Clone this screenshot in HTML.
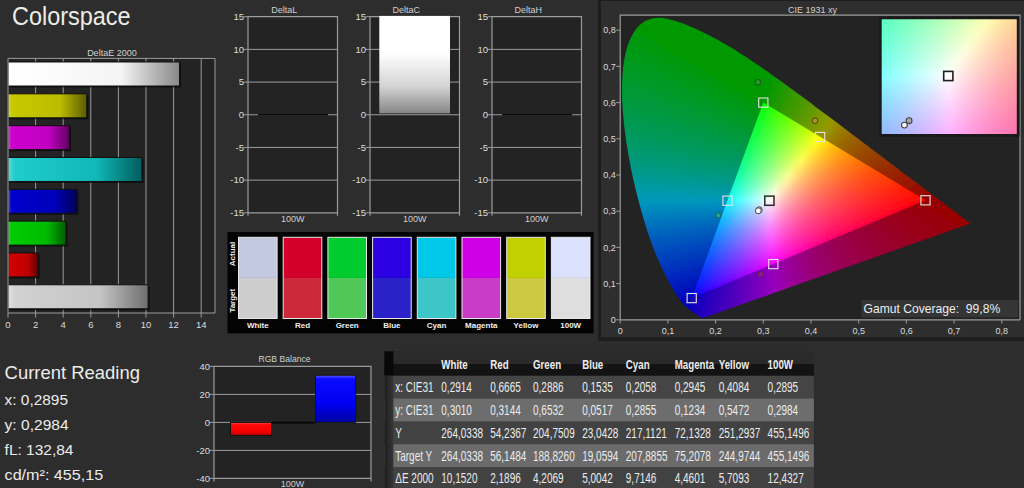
<!DOCTYPE html>
<html><head><meta charset="utf-8"><style>
html,body{margin:0;padding:0;background:#2d2d2d;width:1024px;height:488px;overflow:hidden}
svg{display:block;font-family:'Liberation Sans',sans-serif}
</style></head><body>
<svg width="1024" height="488" viewBox="0 0 1024 488">
<defs><linearGradient id="deb0" x1="0" y1="0" x2="1" y2="0"><stop offset="0" stop-color="#ffffff"/><stop offset="0.05" stop-color="#ffffff"/><stop offset="0.66" stop-color="#f4f4f4"/><stop offset="1" stop-color="#888888"/></linearGradient><linearGradient id="deb1" x1="0" y1="0" x2="1" y2="0"><stop offset="0" stop-color="#d4d450"/><stop offset="0.05" stop-color="#c8c800"/><stop offset="0.66" stop-color="#bcbc00"/><stop offset="1" stop-color="#5c5c00"/></linearGradient><linearGradient id="deb2" x1="0" y1="0" x2="1" y2="0"><stop offset="0" stop-color="#d860d8"/><stop offset="0.05" stop-color="#cc00cc"/><stop offset="0.66" stop-color="#c000c0"/><stop offset="1" stop-color="#5e005e"/></linearGradient><linearGradient id="deb3" x1="0" y1="0" x2="1" y2="0"><stop offset="0" stop-color="#60d8d8"/><stop offset="0.05" stop-color="#20cccc"/><stop offset="0.66" stop-color="#10b8b8"/><stop offset="1" stop-color="#005c5c"/></linearGradient><linearGradient id="deb4" x1="0" y1="0" x2="1" y2="0"><stop offset="0" stop-color="#5050d8"/><stop offset="0.05" stop-color="#0000cc"/><stop offset="0.66" stop-color="#0000bc"/><stop offset="1" stop-color="#00005a"/></linearGradient><linearGradient id="deb5" x1="0" y1="0" x2="1" y2="0"><stop offset="0" stop-color="#50d850"/><stop offset="0.05" stop-color="#00cc00"/><stop offset="0.66" stop-color="#00bc00"/><stop offset="1" stop-color="#005c00"/></linearGradient><linearGradient id="deb6" x1="0" y1="0" x2="1" y2="0"><stop offset="0" stop-color="#e05050"/><stop offset="0.05" stop-color="#d00000"/><stop offset="0.66" stop-color="#c00000"/><stop offset="1" stop-color="#5c0000"/></linearGradient><linearGradient id="deb7" x1="0" y1="0" x2="1" y2="0"><stop offset="0" stop-color="#e0e0e0"/><stop offset="0.05" stop-color="#d2d2d2"/><stop offset="0.66" stop-color="#c4c4c4"/><stop offset="1" stop-color="#6e6e6e"/></linearGradient><linearGradient id="dcg" x1="0" y1="0" x2="0" y2="1"><stop offset="0" stop-color="#ffffff"/><stop offset="0.38" stop-color="#ffffff"/><stop offset="0.72" stop-color="#d4d4d4"/><stop offset="1" stop-color="#868686"/></linearGradient><linearGradient id="rbr" x1="0" y1="0" x2="0" y2="1"><stop offset="0" stop-color="#ff4a4a"/><stop offset="0.18" stop-color="#ff0808"/><stop offset="0.7" stop-color="#f20000"/><stop offset="1" stop-color="#c00000"/></linearGradient><linearGradient id="rbb" x1="0" y1="0" x2="0" y2="1"><stop offset="0" stop-color="#5a5aff"/><stop offset="0.08" stop-color="#0a0aff"/><stop offset="0.6" stop-color="#0000f2"/><stop offset="1" stop-color="#0000a0"/></linearGradient><linearGradient id="tstrip" x1="0" y1="0" x2="1" y2="0"><stop offset="0" stop-color="#1e1e1e"/><stop offset="0.5" stop-color="#2a2a2a"/><stop offset="1" stop-color="#363636"/></linearGradient></defs>
<rect x="0.00" y="0.00" width="1024.00" height="488.00" fill="#2d2d2d"/><text x="12.0" y="25.0" font-size="25" fill="#ecece6" text-anchor="start" font-weight="normal" textLength="118.6" lengthAdjust="spacingAndGlyphs">Colorspace</text><rect x="8.00" y="58.40" width="207.00" height="254.60" fill="#232323"/><text x="111.9" y="55.9" font-size="9" fill="#d0d0d0" text-anchor="middle" font-weight="normal">DeltaE 2000</text><line x1="35.60" y1="58.40" x2="35.60" y2="313.00" stroke="#9c9c9c" stroke-width="1"/><line x1="63.20" y1="58.40" x2="63.20" y2="313.00" stroke="#9c9c9c" stroke-width="1"/><line x1="90.80" y1="58.40" x2="90.80" y2="313.00" stroke="#9c9c9c" stroke-width="1"/><line x1="118.40" y1="58.40" x2="118.40" y2="313.00" stroke="#9c9c9c" stroke-width="1"/><line x1="146.00" y1="58.40" x2="146.00" y2="313.00" stroke="#9c9c9c" stroke-width="1"/><line x1="173.60" y1="58.40" x2="173.60" y2="313.00" stroke="#9c9c9c" stroke-width="1"/><line x1="201.20" y1="58.40" x2="201.20" y2="313.00" stroke="#9c9c9c" stroke-width="1"/><rect x="9.50" y="63.50" width="171.57" height="24.00" fill="#000" opacity="0.55"/><rect x="8.00" y="62.00" width="171.57" height="24.00" fill="url(#deb0)" stroke="#111" stroke-width="1"/><rect x="9.50" y="95.32" width="78.79" height="24.00" fill="#000" opacity="0.55"/><rect x="8.00" y="93.82" width="78.79" height="24.00" fill="url(#deb1)" stroke="#111" stroke-width="1"/><rect x="9.50" y="127.15" width="61.55" height="24.00" fill="#000" opacity="0.55"/><rect x="8.00" y="125.65" width="61.55" height="24.00" fill="url(#deb2)" stroke="#111" stroke-width="1"/><rect x="9.50" y="158.97" width="134.06" height="24.00" fill="#000" opacity="0.55"/><rect x="8.00" y="157.47" width="134.06" height="24.00" fill="url(#deb3)" stroke="#111" stroke-width="1"/><rect x="9.50" y="190.80" width="69.06" height="24.00" fill="#000" opacity="0.55"/><rect x="8.00" y="189.30" width="69.06" height="24.00" fill="url(#deb4)" stroke="#111" stroke-width="1"/><rect x="9.50" y="222.62" width="58.06" height="24.00" fill="#000" opacity="0.55"/><rect x="8.00" y="221.12" width="58.06" height="24.00" fill="url(#deb5)" stroke="#111" stroke-width="1"/><rect x="9.50" y="254.45" width="30.22" height="24.00" fill="#000" opacity="0.55"/><rect x="8.00" y="252.95" width="30.22" height="24.00" fill="url(#deb6)" stroke="#111" stroke-width="1"/><rect x="9.50" y="286.28" width="140.10" height="24.00" fill="#000" opacity="0.55"/><rect x="8.00" y="284.78" width="140.10" height="24.00" fill="url(#deb7)" stroke="#111" stroke-width="1"/><path d="M8.0,313.0 V58.4 H215.0 V313.0" fill="none" stroke="#9c9c9c" stroke-width="1"/><line x1="8.00" y1="313.00" x2="215.00" y2="313.00" stroke="#9c9c9c" stroke-width="1.2"/><line x1="8.00" y1="313.00" x2="8.00" y2="317.50" stroke="#9c9c9c" stroke-width="1"/><text x="8.0" y="327.7" font-size="9.5" fill="#dcdcdc" text-anchor="middle" font-weight="normal">0</text><line x1="35.60" y1="313.00" x2="35.60" y2="317.50" stroke="#9c9c9c" stroke-width="1"/><text x="35.6" y="327.7" font-size="9.5" fill="#dcdcdc" text-anchor="middle" font-weight="normal">2</text><line x1="63.20" y1="313.00" x2="63.20" y2="317.50" stroke="#9c9c9c" stroke-width="1"/><text x="63.2" y="327.7" font-size="9.5" fill="#dcdcdc" text-anchor="middle" font-weight="normal">4</text><line x1="90.80" y1="313.00" x2="90.80" y2="317.50" stroke="#9c9c9c" stroke-width="1"/><text x="90.8" y="327.7" font-size="9.5" fill="#dcdcdc" text-anchor="middle" font-weight="normal">6</text><line x1="118.40" y1="313.00" x2="118.40" y2="317.50" stroke="#9c9c9c" stroke-width="1"/><text x="118.4" y="327.7" font-size="9.5" fill="#dcdcdc" text-anchor="middle" font-weight="normal">8</text><line x1="146.00" y1="313.00" x2="146.00" y2="317.50" stroke="#9c9c9c" stroke-width="1"/><text x="146.0" y="327.7" font-size="9.5" fill="#dcdcdc" text-anchor="middle" font-weight="normal">10</text><line x1="173.60" y1="313.00" x2="173.60" y2="317.50" stroke="#9c9c9c" stroke-width="1"/><text x="173.6" y="327.7" font-size="9.5" fill="#dcdcdc" text-anchor="middle" font-weight="normal">12</text><line x1="201.20" y1="313.00" x2="201.20" y2="317.50" stroke="#9c9c9c" stroke-width="1"/><text x="201.2" y="327.7" font-size="9.5" fill="#dcdcdc" text-anchor="middle" font-weight="normal">14</text><rect x="248.00" y="16.70" width="89.50" height="196.10" fill="#232323"/><line x1="248.00" y1="49.38" x2="337.50" y2="49.38" stroke="#9c9c9c" stroke-width="1"/><line x1="248.00" y1="82.07" x2="337.50" y2="82.07" stroke="#9c9c9c" stroke-width="1"/><line x1="248.00" y1="114.75" x2="337.50" y2="114.75" stroke="#9c9c9c" stroke-width="1"/><line x1="248.00" y1="147.43" x2="337.50" y2="147.43" stroke="#9c9c9c" stroke-width="1"/><line x1="248.00" y1="180.12" x2="337.50" y2="180.12" stroke="#9c9c9c" stroke-width="1"/><line x1="258.00" y1="114.75" x2="328.00" y2="114.75" stroke="#0a0a0a" stroke-width="1.6"/><path d="M248.0,215.8 V16.7 H337.5 V215.8" fill="none" stroke="#9c9c9c" stroke-width="1.2"/><line x1="248.00" y1="212.80" x2="337.50" y2="212.80" stroke="#9c9c9c" stroke-width="1.2"/><line x1="243.50" y1="16.70" x2="248.00" y2="16.70" stroke="#9c9c9c" stroke-width="1"/><text x="244.0" y="20.0" font-size="9.5" fill="#dcdcdc" text-anchor="end" font-weight="normal">15</text><line x1="243.50" y1="49.38" x2="248.00" y2="49.38" stroke="#9c9c9c" stroke-width="1"/><text x="244.0" y="52.7" font-size="9.5" fill="#dcdcdc" text-anchor="end" font-weight="normal">10</text><line x1="243.50" y1="82.07" x2="248.00" y2="82.07" stroke="#9c9c9c" stroke-width="1"/><text x="244.0" y="85.4" font-size="9.5" fill="#dcdcdc" text-anchor="end" font-weight="normal">5</text><line x1="243.50" y1="114.75" x2="248.00" y2="114.75" stroke="#9c9c9c" stroke-width="1"/><text x="244.0" y="118.1" font-size="9.5" fill="#dcdcdc" text-anchor="end" font-weight="normal">0</text><line x1="243.50" y1="147.43" x2="248.00" y2="147.43" stroke="#9c9c9c" stroke-width="1"/><text x="244.0" y="150.7" font-size="9.5" fill="#dcdcdc" text-anchor="end" font-weight="normal">-5</text><line x1="243.50" y1="180.12" x2="248.00" y2="180.12" stroke="#9c9c9c" stroke-width="1"/><text x="244.0" y="183.4" font-size="9.5" fill="#dcdcdc" text-anchor="end" font-weight="normal">-10</text><line x1="243.50" y1="212.80" x2="248.00" y2="212.80" stroke="#9c9c9c" stroke-width="1"/><text x="244.0" y="216.1" font-size="9.5" fill="#dcdcdc" text-anchor="end" font-weight="normal">-15</text><text x="284.3" y="13.1" font-size="9" fill="#d0d0d0" text-anchor="middle" font-weight="normal">DeltaL</text><text x="292.8" y="222.0" font-size="9" fill="#d0d0d0" text-anchor="middle" font-weight="normal">100W</text><rect x="370.00" y="16.70" width="89.50" height="196.10" fill="#232323"/><line x1="370.00" y1="49.38" x2="459.50" y2="49.38" stroke="#9c9c9c" stroke-width="1"/><line x1="370.00" y1="82.07" x2="459.50" y2="82.07" stroke="#9c9c9c" stroke-width="1"/><line x1="370.00" y1="114.75" x2="459.50" y2="114.75" stroke="#9c9c9c" stroke-width="1"/><line x1="370.00" y1="147.43" x2="459.50" y2="147.43" stroke="#9c9c9c" stroke-width="1"/><line x1="370.00" y1="180.12" x2="459.50" y2="180.12" stroke="#9c9c9c" stroke-width="1"/><path d="M370.0,215.8 V16.7 H459.5 V215.8" fill="none" stroke="#9c9c9c" stroke-width="1.2"/><rect x="379.30" y="15.90" width="70.70" height="97.45" fill="url(#dcg)"/><line x1="370.00" y1="212.80" x2="459.50" y2="212.80" stroke="#9c9c9c" stroke-width="1.2"/><line x1="365.50" y1="16.70" x2="370.00" y2="16.70" stroke="#9c9c9c" stroke-width="1"/><text x="366.0" y="20.0" font-size="9.5" fill="#dcdcdc" text-anchor="end" font-weight="normal">15</text><line x1="365.50" y1="49.38" x2="370.00" y2="49.38" stroke="#9c9c9c" stroke-width="1"/><text x="366.0" y="52.7" font-size="9.5" fill="#dcdcdc" text-anchor="end" font-weight="normal">10</text><line x1="365.50" y1="82.07" x2="370.00" y2="82.07" stroke="#9c9c9c" stroke-width="1"/><text x="366.0" y="85.4" font-size="9.5" fill="#dcdcdc" text-anchor="end" font-weight="normal">5</text><line x1="365.50" y1="114.75" x2="370.00" y2="114.75" stroke="#9c9c9c" stroke-width="1"/><text x="366.0" y="118.1" font-size="9.5" fill="#dcdcdc" text-anchor="end" font-weight="normal">0</text><line x1="365.50" y1="147.43" x2="370.00" y2="147.43" stroke="#9c9c9c" stroke-width="1"/><text x="366.0" y="150.7" font-size="9.5" fill="#dcdcdc" text-anchor="end" font-weight="normal">-5</text><line x1="365.50" y1="180.12" x2="370.00" y2="180.12" stroke="#9c9c9c" stroke-width="1"/><text x="366.0" y="183.4" font-size="9.5" fill="#dcdcdc" text-anchor="end" font-weight="normal">-10</text><line x1="365.50" y1="212.80" x2="370.00" y2="212.80" stroke="#9c9c9c" stroke-width="1"/><text x="366.0" y="216.1" font-size="9.5" fill="#dcdcdc" text-anchor="end" font-weight="normal">-15</text><text x="406.3" y="13.1" font-size="9" fill="#d0d0d0" text-anchor="middle" font-weight="normal">DeltaC</text><text x="414.8" y="222.0" font-size="9" fill="#d0d0d0" text-anchor="middle" font-weight="normal">100W</text><rect x="492.00" y="16.70" width="89.50" height="196.10" fill="#232323"/><line x1="492.00" y1="49.38" x2="581.50" y2="49.38" stroke="#9c9c9c" stroke-width="1"/><line x1="492.00" y1="82.07" x2="581.50" y2="82.07" stroke="#9c9c9c" stroke-width="1"/><line x1="492.00" y1="114.75" x2="581.50" y2="114.75" stroke="#9c9c9c" stroke-width="1"/><line x1="492.00" y1="147.43" x2="581.50" y2="147.43" stroke="#9c9c9c" stroke-width="1"/><line x1="492.00" y1="180.12" x2="581.50" y2="180.12" stroke="#9c9c9c" stroke-width="1"/><line x1="502.00" y1="114.75" x2="572.00" y2="114.75" stroke="#0a0a0a" stroke-width="1.6"/><path d="M492.0,215.8 V16.7 H581.5 V215.8" fill="none" stroke="#9c9c9c" stroke-width="1.2"/><line x1="492.00" y1="212.80" x2="581.50" y2="212.80" stroke="#9c9c9c" stroke-width="1.2"/><line x1="487.50" y1="16.70" x2="492.00" y2="16.70" stroke="#9c9c9c" stroke-width="1"/><text x="488.0" y="20.0" font-size="9.5" fill="#dcdcdc" text-anchor="end" font-weight="normal">15</text><line x1="487.50" y1="49.38" x2="492.00" y2="49.38" stroke="#9c9c9c" stroke-width="1"/><text x="488.0" y="52.7" font-size="9.5" fill="#dcdcdc" text-anchor="end" font-weight="normal">10</text><line x1="487.50" y1="82.07" x2="492.00" y2="82.07" stroke="#9c9c9c" stroke-width="1"/><text x="488.0" y="85.4" font-size="9.5" fill="#dcdcdc" text-anchor="end" font-weight="normal">5</text><line x1="487.50" y1="114.75" x2="492.00" y2="114.75" stroke="#9c9c9c" stroke-width="1"/><text x="488.0" y="118.1" font-size="9.5" fill="#dcdcdc" text-anchor="end" font-weight="normal">0</text><line x1="487.50" y1="147.43" x2="492.00" y2="147.43" stroke="#9c9c9c" stroke-width="1"/><text x="488.0" y="150.7" font-size="9.5" fill="#dcdcdc" text-anchor="end" font-weight="normal">-5</text><line x1="487.50" y1="180.12" x2="492.00" y2="180.12" stroke="#9c9c9c" stroke-width="1"/><text x="488.0" y="183.4" font-size="9.5" fill="#dcdcdc" text-anchor="end" font-weight="normal">-10</text><line x1="487.50" y1="212.80" x2="492.00" y2="212.80" stroke="#9c9c9c" stroke-width="1"/><text x="488.0" y="216.1" font-size="9.5" fill="#dcdcdc" text-anchor="end" font-weight="normal">-15</text><text x="528.3" y="13.1" font-size="9" fill="#d0d0d0" text-anchor="middle" font-weight="normal">DeltaH</text><text x="536.8" y="222.0" font-size="9" fill="#d0d0d0" text-anchor="middle" font-weight="normal">100W</text><rect x="227.50" y="232.00" width="366.00" height="101.40" fill="#030303"/><rect x="238.50" y="277.50" width="38.60" height="41.00" fill="#cdcdcd"/><rect x="238.50" y="237.30" width="38.60" height="40.60" fill="#c4c9e2"/><rect x="238.50" y="237.30" width="38.60" height="81.20" fill="none" stroke="#e8e8e8" stroke-width="1"/><text x="257.8" y="328.2" font-size="8" fill="#f0f0f0" text-anchor="middle" font-weight="bold">White</text><rect x="283.20" y="277.50" width="38.60" height="41.00" fill="#cc2a3a"/><rect x="283.20" y="237.30" width="38.60" height="40.60" fill="#d2002a"/><rect x="283.20" y="237.30" width="38.60" height="81.20" fill="none" stroke="#e8e8e8" stroke-width="1"/><text x="302.5" y="328.2" font-size="8" fill="#f0f0f0" text-anchor="middle" font-weight="bold">Red</text><rect x="327.90" y="277.50" width="38.60" height="41.00" fill="#50c858"/><rect x="327.90" y="237.30" width="38.60" height="40.60" fill="#00cc30"/><rect x="327.90" y="237.30" width="38.60" height="81.20" fill="none" stroke="#e8e8e8" stroke-width="1"/><text x="347.2" y="328.2" font-size="8" fill="#f0f0f0" text-anchor="middle" font-weight="bold">Green</text><rect x="372.60" y="277.50" width="38.60" height="41.00" fill="#2a22c8"/><rect x="372.60" y="237.30" width="38.60" height="40.60" fill="#2c00e0"/><rect x="372.60" y="237.30" width="38.60" height="81.20" fill="none" stroke="#e8e8e8" stroke-width="1"/><text x="391.9" y="328.2" font-size="8" fill="#f0f0f0" text-anchor="middle" font-weight="bold">Blue</text><rect x="417.30" y="277.50" width="38.60" height="41.00" fill="#3cc6c8"/><rect x="417.30" y="237.30" width="38.60" height="40.60" fill="#00c8e8"/><rect x="417.30" y="237.30" width="38.60" height="81.20" fill="none" stroke="#e8e8e8" stroke-width="1"/><text x="436.6" y="328.2" font-size="8" fill="#f0f0f0" text-anchor="middle" font-weight="bold">Cyan</text><rect x="462.00" y="277.50" width="38.60" height="41.00" fill="#c83cc8"/><rect x="462.00" y="237.30" width="38.60" height="40.60" fill="#d000e6"/><rect x="462.00" y="237.30" width="38.60" height="81.20" fill="none" stroke="#e8e8e8" stroke-width="1"/><text x="481.3" y="328.2" font-size="8" fill="#f0f0f0" text-anchor="middle" font-weight="bold">Magenta</text><rect x="506.70" y="277.50" width="38.60" height="41.00" fill="#ccc840"/><rect x="506.70" y="237.30" width="38.60" height="40.60" fill="#c0d000"/><rect x="506.70" y="237.30" width="38.60" height="81.20" fill="none" stroke="#e8e8e8" stroke-width="1"/><text x="526.0" y="328.2" font-size="8" fill="#f0f0f0" text-anchor="middle" font-weight="bold">Yellow</text><rect x="551.40" y="277.50" width="38.60" height="41.00" fill="#dedede"/><rect x="551.40" y="237.30" width="38.60" height="40.60" fill="#dce2fc"/><rect x="551.40" y="237.30" width="38.60" height="81.20" fill="none" stroke="#e8e8e8" stroke-width="1"/><text x="570.7" y="328.2" font-size="8" fill="#f0f0f0" text-anchor="middle" font-weight="bold">100W</text><text transform="translate(234.9,254) rotate(-90)" font-size="8" fill="#f0f0f0" text-anchor="middle" font-weight="bold">Actual</text><text transform="translate(234.9,300.7) rotate(-90)" font-size="8" fill="#f0f0f0" text-anchor="middle" font-weight="bold">Target</text><rect x="598.00" y="0.00" width="426.00" height="341.00" fill="#1d1d1d"/><rect x="601.00" y="1.00" width="423.00" height="336.30" fill="#2e2e2e"/><rect x="620.20" y="15.20" width="399.80" height="304.60" fill="#232323"/><defs><clipPath id="hsc"><path d="M703.2,318.0 701.9,318.0 701.0,317.5 700.2,317.0 699.4,316.4 698.6,315.9 697.7,315.3 696.7,314.6 695.8,314.0 694.9,313.4 693.9,312.7 692.8,312.0 691.6,311.1 690.3,310.2 689.6,309.6 688.9,309.0 688.1,308.4 687.4,307.8 686.6,307.1 685.7,306.3 684.8,305.4 683.9,304.3 682.8,303.2 681.7,301.9 680.6,300.5 679.4,298.9 678.1,297.1 676.8,295.3 675.4,293.2 674.0,290.9 672.5,288.4 670.9,285.6 669.2,282.6 667.5,279.3 665.7,275.7 663.8,271.8 661.7,267.5 659.6,262.9 657.4,258.1 655.2,252.8 653.0,247.1 650.8,241.1 648.5,234.6 646.3,227.7 644.0,220.5 641.9,213.0 639.7,205.1 637.5,196.7 635.3,188.1 633.3,179.2 631.4,170.4 629.7,161.4 628.0,152.2 626.5,143.0 625.2,133.8 624.1,124.9 623.3,116.1 622.6,107.4 622.1,98.9 622.0,90.6 622.1,82.8 622.5,75.2 623.1,67.8 624.1,60.8 625.3,54.2 626.8,48.2 628.7,42.7 630.8,37.7 633.3,33.2 635.9,29.2 638.8,25.9 641.8,23.2 645.0,21.1 648.5,19.7 652.0,18.6 655.6,18.0 659.3,17.8 663.1,18.1 666.9,18.8 670.8,19.7 674.7,20.7 678.5,21.9 682.4,23.3 686.3,24.8 690.2,26.4 694.0,28.1 697.7,29.7 701.4,31.4 705.0,33.2 708.6,35.0 712.2,36.9 715.8,38.8 719.3,40.7 722.8,42.7 726.2,44.7 729.7,46.7 733.2,48.8 736.7,51.0 740.1,53.2 743.5,55.4 747.0,57.6 750.4,59.9 753.8,62.2 757.2,64.5 760.7,66.8 764.1,69.2 767.5,71.6 770.9,74.0 774.3,76.4 777.7,78.8 781.1,81.3 784.5,83.7 787.9,86.2 791.3,88.7 794.8,91.2 798.2,93.7 801.6,96.2 805.0,98.8 808.4,101.3 811.8,103.8 815.1,106.4 818.5,108.9 821.9,111.4 825.3,114.0 828.7,116.5 832.0,119.0 835.4,121.5 838.7,124.0 842.0,126.5 845.3,129.0 848.6,131.5 851.8,133.9 855.1,136.4 858.3,138.8 861.5,141.3 864.7,143.7 867.8,146.0 870.9,148.4 874.0,150.7 877.1,153.0 880.1,155.3 883.0,157.6 886.0,159.8 888.9,162.0 891.8,164.1 894.6,166.2 897.3,168.3 900.0,170.4 902.7,172.4 905.3,174.4 907.8,176.3 910.2,178.1 912.6,179.9 914.9,181.6 917.1,183.3 919.3,185.0 921.4,186.6 923.5,188.2 925.5,189.7 927.5,191.2 929.4,192.6 931.2,194.0 932.9,195.3 934.6,196.5 936.2,197.7 937.8,198.9 939.3,200.0 940.7,201.1 942.1,202.1 943.4,203.1 944.6,204.1 945.8,205.0 946.9,205.8 948.0,206.7 949.1,207.4 950.0,208.2 951.0,208.9 951.9,209.6 952.8,210.2 953.6,210.9 954.4,211.5 955.1,212.0 955.9,212.6 956.6,213.1 957.9,214.1 959.1,215.0 960.2,215.9 961.3,216.7 962.3,217.4 963.2,218.1 964.0,218.7 964.7,219.3 965.7,220.0 966.5,220.6 967.2,221.1 967.9,221.7 968.8,222.4 969.5,222.9 970.3,223.5Z"/></clipPath><clipPath id="trc"><path d="M925.5,200.3 763.3,102.6 691.8,298.1Z"/></clipPath><filter id="bl" x="-5%" y="-5%" width="110%" height="110%"><feGaussianBlur stdDeviation="1.6"/></filter><linearGradient id="o0" gradientUnits="userSpaceOnUse" x1="639" y1="0" x2="682" y2="0"><stop offset="0" stop-color="#009900"/><stop offset="0.167" stop-color="#009900"/><stop offset="0.333" stop-color="#009900"/><stop offset="0.5" stop-color="#009900"/><stop offset="0.667" stop-color="#009900"/><stop offset="0.833" stop-color="#009900"/><stop offset="1" stop-color="#009900"/></linearGradient><linearGradient id="o1" gradientUnits="userSpaceOnUse" x1="632" y1="0" x2="694" y2="0"><stop offset="0" stop-color="#009900"/><stop offset="0.125" stop-color="#009900"/><stop offset="0.25" stop-color="#009900"/><stop offset="0.375" stop-color="#009900"/><stop offset="0.5" stop-color="#009900"/><stop offset="0.625" stop-color="#009900"/><stop offset="0.75" stop-color="#009900"/><stop offset="0.875" stop-color="#009900"/><stop offset="1" stop-color="#009900"/></linearGradient><linearGradient id="o2" gradientUnits="userSpaceOnUse" x1="628" y1="0" x2="701" y2="0"><stop offset="0" stop-color="#009900"/><stop offset="0.1" stop-color="#009900"/><stop offset="0.2" stop-color="#009900"/><stop offset="0.3" stop-color="#009900"/><stop offset="0.4" stop-color="#009900"/><stop offset="0.5" stop-color="#009900"/><stop offset="0.6" stop-color="#009900"/><stop offset="0.7" stop-color="#009900"/><stop offset="0.8" stop-color="#009900"/><stop offset="0.9" stop-color="#009900"/><stop offset="1" stop-color="#009900"/></linearGradient><linearGradient id="o3" gradientUnits="userSpaceOnUse" x1="626" y1="0" x2="711" y2="0"><stop offset="0" stop-color="#009904"/><stop offset="0.091" stop-color="#009900"/><stop offset="0.182" stop-color="#009900"/><stop offset="0.273" stop-color="#009900"/><stop offset="0.364" stop-color="#009900"/><stop offset="0.455" stop-color="#009900"/><stop offset="0.545" stop-color="#009900"/><stop offset="0.636" stop-color="#009900"/><stop offset="0.727" stop-color="#009900"/><stop offset="0.818" stop-color="#009900"/><stop offset="0.909" stop-color="#009900"/><stop offset="1" stop-color="#009900"/></linearGradient><linearGradient id="o4" gradientUnits="userSpaceOnUse" x1="623" y1="0" x2="720" y2="0"><stop offset="0" stop-color="#009908"/><stop offset="0.077" stop-color="#009905"/><stop offset="0.154" stop-color="#009900"/><stop offset="0.231" stop-color="#009900"/><stop offset="0.308" stop-color="#009900"/><stop offset="0.385" stop-color="#009900"/><stop offset="0.462" stop-color="#009900"/><stop offset="0.538" stop-color="#009900"/><stop offset="0.615" stop-color="#009900"/><stop offset="0.692" stop-color="#009900"/><stop offset="0.769" stop-color="#009900"/><stop offset="0.846" stop-color="#009900"/><stop offset="0.923" stop-color="#009900"/><stop offset="1" stop-color="#009900"/></linearGradient><linearGradient id="o5" gradientUnits="userSpaceOnUse" x1="621" y1="0" x2="727" y2="0"><stop offset="0" stop-color="#00990c"/><stop offset="0.071" stop-color="#009909"/><stop offset="0.143" stop-color="#009905"/><stop offset="0.214" stop-color="#009901"/><stop offset="0.286" stop-color="#009900"/><stop offset="0.357" stop-color="#009900"/><stop offset="0.429" stop-color="#009900"/><stop offset="0.5" stop-color="#009900"/><stop offset="0.571" stop-color="#009900"/><stop offset="0.643" stop-color="#009900"/><stop offset="0.714" stop-color="#009900"/><stop offset="0.786" stop-color="#009900"/><stop offset="0.857" stop-color="#009900"/><stop offset="0.929" stop-color="#009900"/><stop offset="1" stop-color="#009900"/></linearGradient><linearGradient id="o6" gradientUnits="userSpaceOnUse" x1="619" y1="0" x2="734" y2="0"><stop offset="0" stop-color="#009910"/><stop offset="0.067" stop-color="#00990d"/><stop offset="0.133" stop-color="#00990a"/><stop offset="0.2" stop-color="#009906"/><stop offset="0.267" stop-color="#009901"/><stop offset="0.333" stop-color="#009900"/><stop offset="0.4" stop-color="#009900"/><stop offset="0.467" stop-color="#009900"/><stop offset="0.533" stop-color="#009900"/><stop offset="0.6" stop-color="#009900"/><stop offset="0.667" stop-color="#009900"/><stop offset="0.733" stop-color="#009900"/><stop offset="0.8" stop-color="#009900"/><stop offset="0.867" stop-color="#009900"/><stop offset="0.933" stop-color="#009900"/><stop offset="1" stop-color="#009900"/></linearGradient><linearGradient id="o7" gradientUnits="userSpaceOnUse" x1="618" y1="0" x2="741" y2="0"><stop offset="0" stop-color="#009913"/><stop offset="0.062" stop-color="#009910"/><stop offset="0.125" stop-color="#00990d"/><stop offset="0.188" stop-color="#00990a"/><stop offset="0.25" stop-color="#009906"/><stop offset="0.312" stop-color="#009901"/><stop offset="0.375" stop-color="#009900"/><stop offset="0.438" stop-color="#009900"/><stop offset="0.5" stop-color="#009900"/><stop offset="0.562" stop-color="#009900"/><stop offset="0.625" stop-color="#009900"/><stop offset="0.688" stop-color="#009900"/><stop offset="0.75" stop-color="#009900"/><stop offset="0.812" stop-color="#009900"/><stop offset="0.875" stop-color="#009900"/><stop offset="0.938" stop-color="#009900"/><stop offset="1" stop-color="#009900"/></linearGradient><linearGradient id="o8" gradientUnits="userSpaceOnUse" x1="617" y1="0" x2="747" y2="0"><stop offset="0" stop-color="#009916"/><stop offset="0.059" stop-color="#009913"/><stop offset="0.118" stop-color="#009910"/><stop offset="0.176" stop-color="#00990d"/><stop offset="0.235" stop-color="#00990a"/><stop offset="0.294" stop-color="#009906"/><stop offset="0.353" stop-color="#009901"/><stop offset="0.412" stop-color="#009900"/><stop offset="0.471" stop-color="#009900"/><stop offset="0.529" stop-color="#009900"/><stop offset="0.588" stop-color="#009900"/><stop offset="0.647" stop-color="#009900"/><stop offset="0.706" stop-color="#009900"/><stop offset="0.765" stop-color="#009900"/><stop offset="0.824" stop-color="#009900"/><stop offset="0.882" stop-color="#009900"/><stop offset="0.941" stop-color="#009900"/><stop offset="1" stop-color="#009900"/></linearGradient><linearGradient id="o9" gradientUnits="userSpaceOnUse" x1="617" y1="0" x2="752" y2="0"><stop offset="0" stop-color="#009919"/><stop offset="0.059" stop-color="#009916"/><stop offset="0.118" stop-color="#009913"/><stop offset="0.176" stop-color="#009910"/><stop offset="0.235" stop-color="#00990d"/><stop offset="0.294" stop-color="#009909"/><stop offset="0.353" stop-color="#009905"/><stop offset="0.412" stop-color="#009900"/><stop offset="0.471" stop-color="#009900"/><stop offset="0.529" stop-color="#009900"/><stop offset="0.588" stop-color="#009900"/><stop offset="0.647" stop-color="#009900"/><stop offset="0.706" stop-color="#009900"/><stop offset="0.765" stop-color="#009900"/><stop offset="0.824" stop-color="#009900"/><stop offset="0.882" stop-color="#009900"/><stop offset="0.941" stop-color="#009900"/><stop offset="1" stop-color="#009900"/></linearGradient><linearGradient id="o10" gradientUnits="userSpaceOnUse" x1="616" y1="0" x2="759" y2="0"><stop offset="0" stop-color="#00991c"/><stop offset="0.056" stop-color="#009919"/><stop offset="0.111" stop-color="#009916"/><stop offset="0.167" stop-color="#009913"/><stop offset="0.222" stop-color="#009910"/><stop offset="0.278" stop-color="#00990d"/><stop offset="0.333" stop-color="#009909"/><stop offset="0.389" stop-color="#009905"/><stop offset="0.444" stop-color="#009900"/><stop offset="0.5" stop-color="#009900"/><stop offset="0.556" stop-color="#009900"/><stop offset="0.611" stop-color="#009900"/><stop offset="0.667" stop-color="#009900"/><stop offset="0.722" stop-color="#009900"/><stop offset="0.778" stop-color="#009900"/><stop offset="0.833" stop-color="#009900"/><stop offset="0.889" stop-color="#009900"/><stop offset="0.944" stop-color="#009900"/><stop offset="1" stop-color="#009900"/></linearGradient><linearGradient id="o11" gradientUnits="userSpaceOnUse" x1="615" y1="0" x2="765" y2="0"><stop offset="0" stop-color="#00991f"/><stop offset="0.053" stop-color="#00991c"/><stop offset="0.105" stop-color="#00991a"/><stop offset="0.158" stop-color="#009917"/><stop offset="0.211" stop-color="#009914"/><stop offset="0.263" stop-color="#009911"/><stop offset="0.316" stop-color="#00990d"/><stop offset="0.368" stop-color="#009909"/><stop offset="0.421" stop-color="#009905"/><stop offset="0.474" stop-color="#009900"/><stop offset="0.526" stop-color="#009900"/><stop offset="0.579" stop-color="#009900"/><stop offset="0.632" stop-color="#009900"/><stop offset="0.684" stop-color="#009900"/><stop offset="0.737" stop-color="#009900"/><stop offset="0.789" stop-color="#009900"/><stop offset="0.842" stop-color="#009900"/><stop offset="0.895" stop-color="#009900"/><stop offset="0.947" stop-color="#009900"/><stop offset="1" stop-color="#009900"/></linearGradient><linearGradient id="o12" gradientUnits="userSpaceOnUse" x1="615" y1="0" x2="771" y2="0"><stop offset="0" stop-color="#009922"/><stop offset="0.05" stop-color="#00991f"/><stop offset="0.1" stop-color="#00991d"/><stop offset="0.15" stop-color="#00991a"/><stop offset="0.2" stop-color="#009917"/><stop offset="0.25" stop-color="#009914"/><stop offset="0.3" stop-color="#009911"/><stop offset="0.35" stop-color="#00990d"/><stop offset="0.4" stop-color="#009909"/><stop offset="0.45" stop-color="#009905"/><stop offset="0.5" stop-color="#009900"/><stop offset="0.55" stop-color="#009900"/><stop offset="0.6" stop-color="#009900"/><stop offset="0.65" stop-color="#009900"/><stop offset="0.7" stop-color="#009900"/><stop offset="0.75" stop-color="#009900"/><stop offset="0.8" stop-color="#009900"/><stop offset="0.85" stop-color="#009900"/><stop offset="0.9" stop-color="#009900"/><stop offset="0.95" stop-color="#009900"/><stop offset="1" stop-color="#009900"/></linearGradient><linearGradient id="o13" gradientUnits="userSpaceOnUse" x1="614" y1="0" x2="776" y2="0"><stop offset="0" stop-color="#009925"/><stop offset="0.048" stop-color="#009922"/><stop offset="0.095" stop-color="#009920"/><stop offset="0.143" stop-color="#00991d"/><stop offset="0.19" stop-color="#00991a"/><stop offset="0.238" stop-color="#009918"/><stop offset="0.286" stop-color="#009914"/><stop offset="0.333" stop-color="#009911"/><stop offset="0.381" stop-color="#00990e"/><stop offset="0.429" stop-color="#00990a"/><stop offset="0.476" stop-color="#009905"/><stop offset="0.524" stop-color="#009900"/><stop offset="0.571" stop-color="#009900"/><stop offset="0.619" stop-color="#009900"/><stop offset="0.667" stop-color="#009900"/><stop offset="0.714" stop-color="#009900"/><stop offset="0.762" stop-color="#009900"/><stop offset="0.81" stop-color="#009900"/><stop offset="0.857" stop-color="#009900"/><stop offset="0.905" stop-color="#009900"/><stop offset="0.952" stop-color="#009900"/><stop offset="1" stop-color="#009900"/></linearGradient><linearGradient id="o14" gradientUnits="userSpaceOnUse" x1="614" y1="0" x2="782" y2="0"><stop offset="0" stop-color="#009928"/><stop offset="0.048" stop-color="#009925"/><stop offset="0.095" stop-color="#009923"/><stop offset="0.143" stop-color="#009920"/><stop offset="0.19" stop-color="#00991d"/><stop offset="0.238" stop-color="#00991a"/><stop offset="0.286" stop-color="#009917"/><stop offset="0.333" stop-color="#009914"/><stop offset="0.381" stop-color="#009910"/><stop offset="0.429" stop-color="#00990c"/><stop offset="0.476" stop-color="#009908"/><stop offset="0.524" stop-color="#009902"/><stop offset="0.571" stop-color="#009900"/><stop offset="0.619" stop-color="#009900"/><stop offset="0.667" stop-color="#009900"/><stop offset="0.714" stop-color="#009900"/><stop offset="0.762" stop-color="#009900"/><stop offset="0.81" stop-color="#009900"/><stop offset="0.857" stop-color="#009900"/><stop offset="0.905" stop-color="#009900"/><stop offset="0.952" stop-color="#009900"/><stop offset="1" stop-color="#0d9900"/></linearGradient><linearGradient id="o15" gradientUnits="userSpaceOnUse" x1="614" y1="0" x2="788" y2="0"><stop offset="0" stop-color="#00992a"/><stop offset="0.045" stop-color="#009928"/><stop offset="0.091" stop-color="#009926"/><stop offset="0.136" stop-color="#009923"/><stop offset="0.182" stop-color="#009920"/><stop offset="0.227" stop-color="#00991d"/><stop offset="0.273" stop-color="#00991a"/><stop offset="0.318" stop-color="#009917"/><stop offset="0.364" stop-color="#009914"/><stop offset="0.409" stop-color="#009910"/><stop offset="0.455" stop-color="#00990c"/><stop offset="0.5" stop-color="#009908"/><stop offset="0.545" stop-color="#009902"/><stop offset="0.591" stop-color="#009900"/><stop offset="0.636" stop-color="#009900"/><stop offset="0.682" stop-color="#009900"/><stop offset="0.727" stop-color="#009900"/><stop offset="0.773" stop-color="#009900"/><stop offset="0.818" stop-color="#009900"/><stop offset="0.864" stop-color="#009900"/><stop offset="0.909" stop-color="#009900"/><stop offset="0.955" stop-color="#0c9900"/><stop offset="1" stop-color="#1a9900"/></linearGradient><linearGradient id="o16" gradientUnits="userSpaceOnUse" x1="614" y1="0" x2="793" y2="0"><stop offset="0" stop-color="#00992d"/><stop offset="0.043" stop-color="#00992b"/><stop offset="0.087" stop-color="#009929"/><stop offset="0.13" stop-color="#009926"/><stop offset="0.174" stop-color="#009923"/><stop offset="0.217" stop-color="#009921"/><stop offset="0.261" stop-color="#00991e"/><stop offset="0.304" stop-color="#00991b"/><stop offset="0.348" stop-color="#009918"/><stop offset="0.391" stop-color="#009914"/><stop offset="0.435" stop-color="#009911"/><stop offset="0.478" stop-color="#00990d"/><stop offset="0.522" stop-color="#009908"/><stop offset="0.565" stop-color="#009903"/><stop offset="0.609" stop-color="#009900"/><stop offset="0.652" stop-color="#009900"/><stop offset="0.696" stop-color="#009900"/><stop offset="0.739" stop-color="#009900"/><stop offset="0.783" stop-color="#009900"/><stop offset="0.826" stop-color="#009900"/><stop offset="0.87" stop-color="#009900"/><stop offset="0.913" stop-color="#0a9900"/><stop offset="0.957" stop-color="#189900"/><stop offset="1" stop-color="#259900"/></linearGradient><linearGradient id="o17" gradientUnits="userSpaceOnUse" x1="613" y1="0" x2="799" y2="0"><stop offset="0" stop-color="#009930"/><stop offset="0.042" stop-color="#00992e"/><stop offset="0.083" stop-color="#00992c"/><stop offset="0.125" stop-color="#009929"/><stop offset="0.167" stop-color="#009927"/><stop offset="0.208" stop-color="#009924"/><stop offset="0.25" stop-color="#009921"/><stop offset="0.292" stop-color="#00991f"/><stop offset="0.333" stop-color="#00991c"/><stop offset="0.375" stop-color="#009918"/><stop offset="0.417" stop-color="#009915"/><stop offset="0.458" stop-color="#009911"/><stop offset="0.5" stop-color="#00990d"/><stop offset="0.542" stop-color="#009908"/><stop offset="0.583" stop-color="#009903"/><stop offset="0.625" stop-color="#009900"/><stop offset="0.667" stop-color="#009900"/><stop offset="0.708" stop-color="#009900"/><stop offset="0.75" stop-color="#009900"/><stop offset="0.792" stop-color="#009900"/><stop offset="0.833" stop-color="#009900"/><stop offset="0.875" stop-color="#0a9900"/><stop offset="0.917" stop-color="#189900"/><stop offset="0.958" stop-color="#259900"/><stop offset="1" stop-color="#319900"/></linearGradient><linearGradient id="o18" gradientUnits="userSpaceOnUse" x1="613" y1="0" x2="804" y2="0"><stop offset="0" stop-color="#009933"/><stop offset="0.042" stop-color="#009931"/><stop offset="0.083" stop-color="#00992f"/><stop offset="0.125" stop-color="#00992c"/><stop offset="0.167" stop-color="#00992a"/><stop offset="0.208" stop-color="#009927"/><stop offset="0.25" stop-color="#009924"/><stop offset="0.292" stop-color="#009921"/><stop offset="0.333" stop-color="#00991e"/><stop offset="0.375" stop-color="#00991b"/><stop offset="0.417" stop-color="#009917"/><stop offset="0.458" stop-color="#009914"/><stop offset="0.5" stop-color="#009910"/><stop offset="0.542" stop-color="#00990b"/><stop offset="0.583" stop-color="#009906"/><stop offset="0.625" stop-color="#009900"/><stop offset="0.667" stop-color="#009900"/><stop offset="0.708" stop-color="#009900"/><stop offset="0.75" stop-color="#009900"/><stop offset="0.792" stop-color="#009900"/><stop offset="0.833" stop-color="#059900"/><stop offset="0.875" stop-color="#159900"/><stop offset="0.917" stop-color="#239900"/><stop offset="0.958" stop-color="#2f9900"/><stop offset="1" stop-color="#3c9900"/></linearGradient><linearGradient id="o19" gradientUnits="userSpaceOnUse" x1="613" y1="0" x2="809" y2="0"><stop offset="0" stop-color="#009936"/><stop offset="0.04" stop-color="#009934"/><stop offset="0.08" stop-color="#009932"/><stop offset="0.12" stop-color="#009930"/><stop offset="0.16" stop-color="#00992d"/><stop offset="0.2" stop-color="#00992a"/><stop offset="0.24" stop-color="#009928"/><stop offset="0.28" stop-color="#009925"/><stop offset="0.32" stop-color="#009922"/><stop offset="0.36" stop-color="#00991f"/><stop offset="0.4" stop-color="#00991c"/><stop offset="0.44" stop-color="#009918"/><stop offset="0.48" stop-color="#009914"/><stop offset="0.52" stop-color="#009910"/><stop offset="0.56" stop-color="#00990c"/><stop offset="0.6" stop-color="#009906"/><stop offset="0.64" stop-color="#009900"/><stop offset="0.68" stop-color="#009900"/><stop offset="0.72" stop-color="#009900"/><stop offset="0.76" stop-color="#009900"/><stop offset="0.8" stop-color="#039900"/><stop offset="0.84" stop-color="#149900"/><stop offset="0.88" stop-color="#219900"/><stop offset="0.92" stop-color="#2e9900"/><stop offset="0.96" stop-color="#3b9900"/><stop offset="1" stop-color="#479900"/></linearGradient><linearGradient id="o20" gradientUnits="userSpaceOnUse" x1="613" y1="0" x2="815" y2="0"><stop offset="0" stop-color="#009939"/><stop offset="0.038" stop-color="#009937"/><stop offset="0.077" stop-color="#009935"/><stop offset="0.115" stop-color="#009933"/><stop offset="0.154" stop-color="#009930"/><stop offset="0.192" stop-color="#00992e"/><stop offset="0.231" stop-color="#00992b"/><stop offset="0.269" stop-color="#009929"/><stop offset="0.308" stop-color="#009926"/><stop offset="0.346" stop-color="#009923"/><stop offset="0.385" stop-color="#00991f"/><stop offset="0.423" stop-color="#00991c"/><stop offset="0.462" stop-color="#009919"/><stop offset="0.5" stop-color="#009915"/><stop offset="0.538" stop-color="#009910"/><stop offset="0.577" stop-color="#00990c"/><stop offset="0.615" stop-color="#009907"/><stop offset="0.654" stop-color="#009900"/><stop offset="0.692" stop-color="#009900"/><stop offset="0.731" stop-color="#009900"/><stop offset="0.769" stop-color="#039900"/><stop offset="0.808" stop-color="#149900"/><stop offset="0.846" stop-color="#229900"/><stop offset="0.885" stop-color="#2f9900"/><stop offset="0.923" stop-color="#3b9900"/><stop offset="0.962" stop-color="#489900"/><stop offset="1" stop-color="#549900"/></linearGradient><linearGradient id="o21" gradientUnits="userSpaceOnUse" x1="613" y1="0" x2="820" y2="0"><stop offset="0" stop-color="#00993d"/><stop offset="0.038" stop-color="#00993a"/><stop offset="0.077" stop-color="#009938"/><stop offset="0.115" stop-color="#009936"/><stop offset="0.154" stop-color="#009933"/><stop offset="0.192" stop-color="#009931"/><stop offset="0.231" stop-color="#00992e"/><stop offset="0.269" stop-color="#00992b"/><stop offset="0.308" stop-color="#009929"/><stop offset="0.346" stop-color="#009926"/><stop offset="0.385" stop-color="#009922"/><stop offset="0.423" stop-color="#00991f"/><stop offset="0.462" stop-color="#00991b"/><stop offset="0.5" stop-color="#009917"/><stop offset="0.538" stop-color="#009913"/><stop offset="0.577" stop-color="#00990f"/><stop offset="0.615" stop-color="#009909"/><stop offset="0.654" stop-color="#009903"/><stop offset="0.692" stop-color="#009900"/><stop offset="0.731" stop-color="#009900"/><stop offset="0.769" stop-color="#0f9900"/><stop offset="0.808" stop-color="#1e9900"/><stop offset="0.846" stop-color="#2c9900"/><stop offset="0.885" stop-color="#399900"/><stop offset="0.923" stop-color="#469900"/><stop offset="0.962" stop-color="#539900"/><stop offset="1" stop-color="#609900"/></linearGradient><linearGradient id="o22" gradientUnits="userSpaceOnUse" x1="613" y1="0" x2="826" y2="0"><stop offset="0" stop-color="#009940"/><stop offset="0.037" stop-color="#00993e"/><stop offset="0.074" stop-color="#00993b"/><stop offset="0.111" stop-color="#009939"/><stop offset="0.148" stop-color="#009937"/><stop offset="0.185" stop-color="#009934"/><stop offset="0.222" stop-color="#009932"/><stop offset="0.259" stop-color="#00992f"/><stop offset="0.296" stop-color="#00992c"/><stop offset="0.333" stop-color="#009929"/><stop offset="0.37" stop-color="#009926"/><stop offset="0.407" stop-color="#009923"/><stop offset="0.444" stop-color="#009920"/><stop offset="0.481" stop-color="#00991c"/><stop offset="0.519" stop-color="#009918"/><stop offset="0.556" stop-color="#009914"/><stop offset="0.593" stop-color="#00990f"/><stop offset="0.63" stop-color="#00990a"/><stop offset="0.667" stop-color="#009903"/><stop offset="0.704" stop-color="#009900"/><stop offset="0.741" stop-color="#109900"/><stop offset="0.778" stop-color="#1f9900"/><stop offset="0.815" stop-color="#2c9900"/><stop offset="0.852" stop-color="#3a9900"/><stop offset="0.889" stop-color="#479900"/><stop offset="0.926" stop-color="#549900"/><stop offset="0.963" stop-color="#619900"/><stop offset="1" stop-color="#6e9900"/></linearGradient><linearGradient id="o23" gradientUnits="userSpaceOnUse" x1="613" y1="0" x2="831" y2="0"><stop offset="0" stop-color="#009943"/><stop offset="0.036" stop-color="#009941"/><stop offset="0.071" stop-color="#00993f"/><stop offset="0.107" stop-color="#00993d"/><stop offset="0.143" stop-color="#00993a"/><stop offset="0.179" stop-color="#009938"/><stop offset="0.214" stop-color="#009936"/><stop offset="0.25" stop-color="#009933"/><stop offset="0.286" stop-color="#009930"/><stop offset="0.321" stop-color="#00992d"/><stop offset="0.357" stop-color="#00992a"/><stop offset="0.393" stop-color="#009927"/><stop offset="0.429" stop-color="#009924"/><stop offset="0.464" stop-color="#009921"/><stop offset="0.5" stop-color="#00991d"/><stop offset="0.536" stop-color="#009919"/><stop offset="0.571" stop-color="#009914"/><stop offset="0.607" stop-color="#009910"/><stop offset="0.643" stop-color="#00990a"/><stop offset="0.679" stop-color="#009904"/><stop offset="0.714" stop-color="#0f9900"/><stop offset="0.75" stop-color="#1e9900"/><stop offset="0.786" stop-color="#2c9900"/><stop offset="0.821" stop-color="#399900"/><stop offset="0.857" stop-color="#469900"/><stop offset="0.893" stop-color="#549900"/><stop offset="0.929" stop-color="#619900"/><stop offset="0.964" stop-color="#6e9900"/><stop offset="1" stop-color="#7c9900"/></linearGradient><linearGradient id="o24" gradientUnits="userSpaceOnUse" x1="614" y1="0" x2="836" y2="0"><stop offset="0" stop-color="#009946"/><stop offset="0.036" stop-color="#009944"/><stop offset="0.071" stop-color="#009942"/><stop offset="0.107" stop-color="#009940"/><stop offset="0.143" stop-color="#00993d"/><stop offset="0.179" stop-color="#00993b"/><stop offset="0.214" stop-color="#009939"/><stop offset="0.25" stop-color="#009936"/><stop offset="0.286" stop-color="#009933"/><stop offset="0.321" stop-color="#009930"/><stop offset="0.357" stop-color="#00992d"/><stop offset="0.393" stop-color="#00992a"/><stop offset="0.429" stop-color="#009927"/><stop offset="0.464" stop-color="#009923"/><stop offset="0.5" stop-color="#00991f"/><stop offset="0.536" stop-color="#00991b"/><stop offset="0.571" stop-color="#009917"/><stop offset="0.607" stop-color="#009912"/><stop offset="0.643" stop-color="#00990d"/><stop offset="0.679" stop-color="#099907"/><stop offset="0.714" stop-color="#1a9900"/><stop offset="0.75" stop-color="#289900"/><stop offset="0.786" stop-color="#369900"/><stop offset="0.821" stop-color="#449900"/><stop offset="0.857" stop-color="#529900"/><stop offset="0.893" stop-color="#609900"/><stop offset="0.929" stop-color="#6d9900"/><stop offset="0.964" stop-color="#7c9900"/><stop offset="1" stop-color="#8a9900"/></linearGradient><linearGradient id="o25" gradientUnits="userSpaceOnUse" x1="614" y1="0" x2="842" y2="0"><stop offset="0" stop-color="#00994a"/><stop offset="0.034" stop-color="#009948"/><stop offset="0.069" stop-color="#009945"/><stop offset="0.103" stop-color="#009943"/><stop offset="0.138" stop-color="#009941"/><stop offset="0.172" stop-color="#00993f"/><stop offset="0.207" stop-color="#00993c"/><stop offset="0.241" stop-color="#00993a"/><stop offset="0.276" stop-color="#009937"/><stop offset="0.31" stop-color="#009934"/><stop offset="0.345" stop-color="#009932"/><stop offset="0.379" stop-color="#00992e"/><stop offset="0.414" stop-color="#00992b"/><stop offset="0.448" stop-color="#009928"/><stop offset="0.483" stop-color="#009924"/><stop offset="0.517" stop-color="#009920"/><stop offset="0.552" stop-color="#00991c"/><stop offset="0.586" stop-color="#009918"/><stop offset="0.621" stop-color="#009913"/><stop offset="0.655" stop-color="#0a990d"/><stop offset="0.69" stop-color="#1a9907"/><stop offset="0.724" stop-color="#299900"/><stop offset="0.759" stop-color="#379900"/><stop offset="0.793" stop-color="#459900"/><stop offset="0.828" stop-color="#539900"/><stop offset="0.862" stop-color="#619900"/><stop offset="0.897" stop-color="#6f9900"/><stop offset="0.931" stop-color="#7e9900"/><stop offset="0.966" stop-color="#8c9900"/><stop offset="1" stop-color="#999700"/></linearGradient><linearGradient id="o26" gradientUnits="userSpaceOnUse" x1="614" y1="0" x2="846" y2="0"><stop offset="0" stop-color="#00994d"/><stop offset="0.034" stop-color="#00994b"/><stop offset="0.069" stop-color="#009949"/><stop offset="0.103" stop-color="#009947"/><stop offset="0.138" stop-color="#009945"/><stop offset="0.172" stop-color="#009942"/><stop offset="0.207" stop-color="#009940"/><stop offset="0.241" stop-color="#00993d"/><stop offset="0.276" stop-color="#00993b"/><stop offset="0.31" stop-color="#009938"/><stop offset="0.345" stop-color="#009935"/><stop offset="0.379" stop-color="#009932"/><stop offset="0.414" stop-color="#00992f"/><stop offset="0.448" stop-color="#00992b"/><stop offset="0.483" stop-color="#009928"/><stop offset="0.517" stop-color="#009924"/><stop offset="0.552" stop-color="#009920"/><stop offset="0.586" stop-color="#00991b"/><stop offset="0.621" stop-color="#009916"/><stop offset="0.655" stop-color="#139911"/><stop offset="0.69" stop-color="#23990b"/><stop offset="0.724" stop-color="#329903"/><stop offset="0.759" stop-color="#419900"/><stop offset="0.793" stop-color="#4f9900"/><stop offset="0.828" stop-color="#5d9900"/><stop offset="0.862" stop-color="#6c9900"/><stop offset="0.897" stop-color="#7b9900"/><stop offset="0.931" stop-color="#8a9900"/><stop offset="0.966" stop-color="#999800"/><stop offset="1" stop-color="#998a00"/></linearGradient><linearGradient id="o27" gradientUnits="userSpaceOnUse" x1="614" y1="0" x2="852" y2="0"><stop offset="0" stop-color="#009951"/><stop offset="0.033" stop-color="#00994f"/><stop offset="0.067" stop-color="#00994d"/><stop offset="0.1" stop-color="#00994b"/><stop offset="0.133" stop-color="#009948"/><stop offset="0.167" stop-color="#009946"/><stop offset="0.2" stop-color="#009944"/><stop offset="0.233" stop-color="#009941"/><stop offset="0.267" stop-color="#00993f"/><stop offset="0.3" stop-color="#00993c"/><stop offset="0.333" stop-color="#009939"/><stop offset="0.367" stop-color="#009936"/><stop offset="0.4" stop-color="#009933"/><stop offset="0.433" stop-color="#009930"/><stop offset="0.467" stop-color="#00992c"/><stop offset="0.5" stop-color="#009929"/><stop offset="0.533" stop-color="#009925"/><stop offset="0.567" stop-color="#009921"/><stop offset="0.6" stop-color="#00991c"/><stop offset="0.633" stop-color="#149917"/><stop offset="0.667" stop-color="#249911"/><stop offset="0.7" stop-color="#33990b"/><stop offset="0.733" stop-color="#429903"/><stop offset="0.767" stop-color="#509900"/><stop offset="0.8" stop-color="#5f9900"/><stop offset="0.833" stop-color="#6e9900"/><stop offset="0.867" stop-color="#7d9900"/><stop offset="0.9" stop-color="#8c9900"/><stop offset="0.933" stop-color="#999600"/><stop offset="0.967" stop-color="#998800"/><stop offset="1" stop-color="#997b00"/></linearGradient><linearGradient id="o28" gradientUnits="userSpaceOnUse" x1="615" y1="0" x2="857" y2="0"><stop offset="0" stop-color="#009954"/><stop offset="0.032" stop-color="#009952"/><stop offset="0.065" stop-color="#009950"/><stop offset="0.097" stop-color="#00994e"/><stop offset="0.129" stop-color="#00994c"/><stop offset="0.161" stop-color="#00994a"/><stop offset="0.194" stop-color="#009948"/><stop offset="0.226" stop-color="#009945"/><stop offset="0.258" stop-color="#009943"/><stop offset="0.29" stop-color="#009940"/><stop offset="0.323" stop-color="#00993e"/><stop offset="0.355" stop-color="#00993b"/><stop offset="0.387" stop-color="#009938"/><stop offset="0.419" stop-color="#009935"/><stop offset="0.452" stop-color="#009931"/><stop offset="0.484" stop-color="#00992e"/><stop offset="0.516" stop-color="#00992a"/><stop offset="0.548" stop-color="#009926"/><stop offset="0.581" stop-color="#009922"/><stop offset="0.613" stop-color="#14991d"/><stop offset="0.645" stop-color="#259918"/><stop offset="0.677" stop-color="#349912"/><stop offset="0.71" stop-color="#43990c"/><stop offset="0.742" stop-color="#519904"/><stop offset="0.774" stop-color="#609900"/><stop offset="0.806" stop-color="#6f9900"/><stop offset="0.839" stop-color="#7e9900"/><stop offset="0.871" stop-color="#8e9900"/><stop offset="0.903" stop-color="#999400"/><stop offset="0.935" stop-color="#998600"/><stop offset="0.968" stop-color="#997a00"/><stop offset="1" stop-color="#997000"/></linearGradient><linearGradient id="o29" gradientUnits="userSpaceOnUse" x1="615" y1="0" x2="863" y2="0"><stop offset="0" stop-color="#009958"/><stop offset="0.032" stop-color="#009956"/><stop offset="0.065" stop-color="#009954"/><stop offset="0.097" stop-color="#009952"/><stop offset="0.129" stop-color="#009950"/><stop offset="0.161" stop-color="#00994e"/><stop offset="0.194" stop-color="#00994c"/><stop offset="0.226" stop-color="#009949"/><stop offset="0.258" stop-color="#009947"/><stop offset="0.29" stop-color="#009944"/><stop offset="0.323" stop-color="#009941"/><stop offset="0.355" stop-color="#00993e"/><stop offset="0.387" stop-color="#00993b"/><stop offset="0.419" stop-color="#009938"/><stop offset="0.452" stop-color="#009935"/><stop offset="0.484" stop-color="#009931"/><stop offset="0.516" stop-color="#00992d"/><stop offset="0.548" stop-color="#009929"/><stop offset="0.581" stop-color="#0e9925"/><stop offset="0.613" stop-color="#209920"/><stop offset="0.645" stop-color="#30991b"/><stop offset="0.677" stop-color="#409915"/><stop offset="0.71" stop-color="#4f990f"/><stop offset="0.742" stop-color="#5e9907"/><stop offset="0.774" stop-color="#6e9900"/><stop offset="0.806" stop-color="#7e9900"/><stop offset="0.839" stop-color="#8e9900"/><stop offset="0.871" stop-color="#999300"/><stop offset="0.903" stop-color="#998500"/><stop offset="0.935" stop-color="#997800"/><stop offset="0.968" stop-color="#996e00"/><stop offset="1" stop-color="#996500"/></linearGradient><linearGradient id="o30" gradientUnits="userSpaceOnUse" x1="616" y1="0" x2="868" y2="0"><stop offset="0" stop-color="#00995c"/><stop offset="0.031" stop-color="#00995a"/><stop offset="0.062" stop-color="#009958"/><stop offset="0.094" stop-color="#009956"/><stop offset="0.125" stop-color="#009954"/><stop offset="0.156" stop-color="#009952"/><stop offset="0.188" stop-color="#009950"/><stop offset="0.219" stop-color="#00994d"/><stop offset="0.25" stop-color="#00994b"/><stop offset="0.281" stop-color="#009949"/><stop offset="0.312" stop-color="#009946"/><stop offset="0.344" stop-color="#009943"/><stop offset="0.375" stop-color="#009940"/><stop offset="0.406" stop-color="#00993d"/><stop offset="0.438" stop-color="#00993a"/><stop offset="0.469" stop-color="#009936"/><stop offset="0.5" stop-color="#009933"/><stop offset="0.531" stop-color="#00992f"/><stop offset="0.562" stop-color="#0f992b"/><stop offset="0.594" stop-color="#219926"/><stop offset="0.625" stop-color="#319921"/><stop offset="0.656" stop-color="#41991c"/><stop offset="0.688" stop-color="#509916"/><stop offset="0.719" stop-color="#609910"/><stop offset="0.75" stop-color="#6f9908"/><stop offset="0.781" stop-color="#809900"/><stop offset="0.812" stop-color="#909900"/><stop offset="0.844" stop-color="#999100"/><stop offset="0.875" stop-color="#998300"/><stop offset="0.906" stop-color="#997700"/><stop offset="0.938" stop-color="#996c00"/><stop offset="0.969" stop-color="#996300"/><stop offset="1" stop-color="#995b00"/></linearGradient><linearGradient id="o31" gradientUnits="userSpaceOnUse" x1="616" y1="0" x2="873" y2="0"><stop offset="0" stop-color="#009960"/><stop offset="0.03" stop-color="#00995e"/><stop offset="0.061" stop-color="#00995c"/><stop offset="0.091" stop-color="#00995a"/><stop offset="0.121" stop-color="#009958"/><stop offset="0.152" stop-color="#009956"/><stop offset="0.182" stop-color="#009954"/><stop offset="0.212" stop-color="#009952"/><stop offset="0.242" stop-color="#009950"/><stop offset="0.273" stop-color="#00994d"/><stop offset="0.303" stop-color="#00994b"/><stop offset="0.333" stop-color="#009948"/><stop offset="0.364" stop-color="#009945"/><stop offset="0.394" stop-color="#009942"/><stop offset="0.424" stop-color="#00993f"/><stop offset="0.455" stop-color="#00993c"/><stop offset="0.485" stop-color="#009939"/><stop offset="0.515" stop-color="#009935"/><stop offset="0.545" stop-color="#0f9931"/><stop offset="0.576" stop-color="#21992d"/><stop offset="0.606" stop-color="#319928"/><stop offset="0.636" stop-color="#419923"/><stop offset="0.667" stop-color="#51991e"/><stop offset="0.697" stop-color="#619918"/><stop offset="0.727" stop-color="#719911"/><stop offset="0.758" stop-color="#819909"/><stop offset="0.788" stop-color="#929900"/><stop offset="0.818" stop-color="#998f00"/><stop offset="0.848" stop-color="#998100"/><stop offset="0.879" stop-color="#997500"/><stop offset="0.909" stop-color="#996b00"/><stop offset="0.939" stop-color="#996200"/><stop offset="0.97" stop-color="#995a00"/><stop offset="1" stop-color="#995300"/></linearGradient><linearGradient id="o32" gradientUnits="userSpaceOnUse" x1="617" y1="0" x2="878" y2="0"><stop offset="0" stop-color="#009964"/><stop offset="0.03" stop-color="#009962"/><stop offset="0.061" stop-color="#009960"/><stop offset="0.091" stop-color="#00995e"/><stop offset="0.121" stop-color="#00995c"/><stop offset="0.152" stop-color="#00995a"/><stop offset="0.182" stop-color="#009958"/><stop offset="0.212" stop-color="#009956"/><stop offset="0.242" stop-color="#009954"/><stop offset="0.273" stop-color="#009951"/><stop offset="0.303" stop-color="#00994f"/><stop offset="0.333" stop-color="#00994c"/><stop offset="0.364" stop-color="#009949"/><stop offset="0.394" stop-color="#009946"/><stop offset="0.424" stop-color="#009943"/><stop offset="0.455" stop-color="#009940"/><stop offset="0.485" stop-color="#00993d"/><stop offset="0.515" stop-color="#069939"/><stop offset="0.545" stop-color="#1a9935"/><stop offset="0.576" stop-color="#2c9931"/><stop offset="0.606" stop-color="#3d992c"/><stop offset="0.636" stop-color="#4d9927"/><stop offset="0.667" stop-color="#5d9921"/><stop offset="0.697" stop-color="#6e991b"/><stop offset="0.727" stop-color="#7f9915"/><stop offset="0.758" stop-color="#90990d"/><stop offset="0.788" stop-color="#999002"/><stop offset="0.818" stop-color="#998100"/><stop offset="0.848" stop-color="#997500"/><stop offset="0.879" stop-color="#996a00"/><stop offset="0.909" stop-color="#996100"/><stop offset="0.939" stop-color="#995900"/><stop offset="0.97" stop-color="#995100"/><stop offset="1" stop-color="#994b00"/></linearGradient><linearGradient id="o33" gradientUnits="userSpaceOnUse" x1="617" y1="0" x2="884" y2="0"><stop offset="0" stop-color="#009968"/><stop offset="0.029" stop-color="#009966"/><stop offset="0.059" stop-color="#009965"/><stop offset="0.088" stop-color="#009963"/><stop offset="0.118" stop-color="#009961"/><stop offset="0.147" stop-color="#00995f"/><stop offset="0.176" stop-color="#00995d"/><stop offset="0.206" stop-color="#00995b"/><stop offset="0.235" stop-color="#009959"/><stop offset="0.265" stop-color="#009956"/><stop offset="0.294" stop-color="#009954"/><stop offset="0.324" stop-color="#009952"/><stop offset="0.353" stop-color="#00994f"/><stop offset="0.382" stop-color="#00994c"/><stop offset="0.412" stop-color="#009949"/><stop offset="0.441" stop-color="#009946"/><stop offset="0.471" stop-color="#009943"/><stop offset="0.5" stop-color="#08993f"/><stop offset="0.529" stop-color="#1c993b"/><stop offset="0.559" stop-color="#2e9937"/><stop offset="0.588" stop-color="#3f9933"/><stop offset="0.618" stop-color="#4f992e"/><stop offset="0.647" stop-color="#609929"/><stop offset="0.676" stop-color="#719923"/><stop offset="0.706" stop-color="#82991d"/><stop offset="0.735" stop-color="#949916"/><stop offset="0.765" stop-color="#998c0d"/><stop offset="0.794" stop-color="#997e02"/><stop offset="0.824" stop-color="#997200"/><stop offset="0.853" stop-color="#996700"/><stop offset="0.882" stop-color="#995e00"/><stop offset="0.912" stop-color="#995600"/><stop offset="0.941" stop-color="#994f00"/><stop offset="0.971" stop-color="#994900"/><stop offset="1" stop-color="#994300"/></linearGradient><linearGradient id="o34" gradientUnits="userSpaceOnUse" x1="617" y1="0" x2="889" y2="0"><stop offset="0" stop-color="#00996c"/><stop offset="0.029" stop-color="#00996b"/><stop offset="0.059" stop-color="#009969"/><stop offset="0.088" stop-color="#009967"/><stop offset="0.118" stop-color="#009966"/><stop offset="0.147" stop-color="#009964"/><stop offset="0.176" stop-color="#009962"/><stop offset="0.206" stop-color="#009960"/><stop offset="0.235" stop-color="#00995d"/><stop offset="0.265" stop-color="#00995b"/><stop offset="0.294" stop-color="#009959"/><stop offset="0.324" stop-color="#009956"/><stop offset="0.353" stop-color="#009954"/><stop offset="0.382" stop-color="#009951"/><stop offset="0.412" stop-color="#00994e"/><stop offset="0.441" stop-color="#00994b"/><stop offset="0.471" stop-color="#009947"/><stop offset="0.5" stop-color="#139944"/><stop offset="0.529" stop-color="#269940"/><stop offset="0.559" stop-color="#38993c"/><stop offset="0.588" stop-color="#4a9937"/><stop offset="0.618" stop-color="#5b9932"/><stop offset="0.647" stop-color="#6d992d"/><stop offset="0.676" stop-color="#7f9927"/><stop offset="0.706" stop-color="#919921"/><stop offset="0.735" stop-color="#998e18"/><stop offset="0.765" stop-color="#997f0f"/><stop offset="0.794" stop-color="#997206"/><stop offset="0.824" stop-color="#996700"/><stop offset="0.853" stop-color="#995e00"/><stop offset="0.882" stop-color="#995500"/><stop offset="0.912" stop-color="#994e00"/><stop offset="0.941" stop-color="#994800"/><stop offset="0.971" stop-color="#994200"/><stop offset="1" stop-color="#993c00"/></linearGradient><linearGradient id="o35" gradientUnits="userSpaceOnUse" x1="618" y1="0" x2="894" y2="0"><stop offset="0" stop-color="#009971"/><stop offset="0.029" stop-color="#00996f"/><stop offset="0.057" stop-color="#00996e"/><stop offset="0.086" stop-color="#00996c"/><stop offset="0.114" stop-color="#00996a"/><stop offset="0.143" stop-color="#009969"/><stop offset="0.171" stop-color="#009967"/><stop offset="0.2" stop-color="#009965"/><stop offset="0.229" stop-color="#009963"/><stop offset="0.257" stop-color="#009960"/><stop offset="0.286" stop-color="#00995e"/><stop offset="0.314" stop-color="#00995c"/><stop offset="0.343" stop-color="#009959"/><stop offset="0.371" stop-color="#009957"/><stop offset="0.4" stop-color="#009954"/><stop offset="0.429" stop-color="#009951"/><stop offset="0.457" stop-color="#00994e"/><stop offset="0.486" stop-color="#15994a"/><stop offset="0.514" stop-color="#289947"/><stop offset="0.543" stop-color="#3a9943"/><stop offset="0.571" stop-color="#4c993e"/><stop offset="0.6" stop-color="#5e993a"/><stop offset="0.629" stop-color="#709935"/><stop offset="0.657" stop-color="#829930"/><stop offset="0.686" stop-color="#95992a"/><stop offset="0.714" stop-color="#998b20"/><stop offset="0.743" stop-color="#997c17"/><stop offset="0.771" stop-color="#99700e"/><stop offset="0.8" stop-color="#996506"/><stop offset="0.829" stop-color="#995c00"/><stop offset="0.857" stop-color="#995300"/><stop offset="0.886" stop-color="#994c00"/><stop offset="0.914" stop-color="#994600"/><stop offset="0.943" stop-color="#994000"/><stop offset="0.971" stop-color="#993b00"/><stop offset="1" stop-color="#993600"/></linearGradient><linearGradient id="o36" gradientUnits="userSpaceOnUse" x1="619" y1="0" x2="899" y2="0"><stop offset="0" stop-color="#009975"/><stop offset="0.029" stop-color="#009974"/><stop offset="0.057" stop-color="#009972"/><stop offset="0.086" stop-color="#009971"/><stop offset="0.114" stop-color="#00996f"/><stop offset="0.143" stop-color="#00996d"/><stop offset="0.171" stop-color="#00996b"/><stop offset="0.2" stop-color="#00996a"/><stop offset="0.229" stop-color="#009968"/><stop offset="0.257" stop-color="#009965"/><stop offset="0.286" stop-color="#009963"/><stop offset="0.314" stop-color="#009961"/><stop offset="0.343" stop-color="#00995e"/><stop offset="0.371" stop-color="#00995c"/><stop offset="0.4" stop-color="#009959"/><stop offset="0.429" stop-color="#009956"/><stop offset="0.457" stop-color="#0b9953"/><stop offset="0.486" stop-color="#21994f"/><stop offset="0.514" stop-color="#34994c"/><stop offset="0.543" stop-color="#469948"/><stop offset="0.571" stop-color="#599944"/><stop offset="0.6" stop-color="#6b993f"/><stop offset="0.629" stop-color="#7e993a"/><stop offset="0.657" stop-color="#929935"/><stop offset="0.686" stop-color="#998d2b"/><stop offset="0.714" stop-color="#997d21"/><stop offset="0.743" stop-color="#997018"/><stop offset="0.771" stop-color="#996510"/><stop offset="0.8" stop-color="#995b08"/><stop offset="0.829" stop-color="#995300"/><stop offset="0.857" stop-color="#994b00"/><stop offset="0.886" stop-color="#994500"/><stop offset="0.914" stop-color="#993f00"/><stop offset="0.943" stop-color="#993900"/><stop offset="0.971" stop-color="#993500"/><stop offset="1" stop-color="#993000"/></linearGradient><linearGradient id="o37" gradientUnits="userSpaceOnUse" x1="619" y1="0" x2="905" y2="0"><stop offset="0" stop-color="#00997a"/><stop offset="0.028" stop-color="#009979"/><stop offset="0.056" stop-color="#009977"/><stop offset="0.083" stop-color="#009976"/><stop offset="0.111" stop-color="#009974"/><stop offset="0.139" stop-color="#009973"/><stop offset="0.167" stop-color="#009971"/><stop offset="0.194" stop-color="#00996f"/><stop offset="0.222" stop-color="#00996d"/><stop offset="0.25" stop-color="#00996b"/><stop offset="0.278" stop-color="#009969"/><stop offset="0.306" stop-color="#009967"/><stop offset="0.333" stop-color="#009965"/><stop offset="0.361" stop-color="#009962"/><stop offset="0.389" stop-color="#00995f"/><stop offset="0.417" stop-color="#00995d"/><stop offset="0.444" stop-color="#0d995a"/><stop offset="0.472" stop-color="#239956"/><stop offset="0.5" stop-color="#369953"/><stop offset="0.528" stop-color="#49994f"/><stop offset="0.556" stop-color="#5c994b"/><stop offset="0.583" stop-color="#6f9947"/><stop offset="0.611" stop-color="#839942"/><stop offset="0.639" stop-color="#97993d"/><stop offset="0.667" stop-color="#998832"/><stop offset="0.694" stop-color="#997927"/><stop offset="0.722" stop-color="#996c1e"/><stop offset="0.75" stop-color="#996116"/><stop offset="0.778" stop-color="#99580f"/><stop offset="0.806" stop-color="#995008"/><stop offset="0.833" stop-color="#994900"/><stop offset="0.861" stop-color="#994200"/><stop offset="0.889" stop-color="#993c00"/><stop offset="0.917" stop-color="#993700"/><stop offset="0.944" stop-color="#993200"/><stop offset="0.972" stop-color="#992e00"/><stop offset="1" stop-color="#992a00"/></linearGradient><linearGradient id="o38" gradientUnits="userSpaceOnUse" x1="620" y1="0" x2="910" y2="0"><stop offset="0" stop-color="#00997f"/><stop offset="0.027" stop-color="#00997e"/><stop offset="0.054" stop-color="#00997d"/><stop offset="0.081" stop-color="#00997b"/><stop offset="0.108" stop-color="#00997a"/><stop offset="0.135" stop-color="#009978"/><stop offset="0.162" stop-color="#009977"/><stop offset="0.189" stop-color="#009975"/><stop offset="0.216" stop-color="#009973"/><stop offset="0.243" stop-color="#009971"/><stop offset="0.27" stop-color="#00996f"/><stop offset="0.297" stop-color="#00996d"/><stop offset="0.324" stop-color="#00996b"/><stop offset="0.351" stop-color="#009969"/><stop offset="0.378" stop-color="#009966"/><stop offset="0.405" stop-color="#009964"/><stop offset="0.432" stop-color="#109961"/><stop offset="0.459" stop-color="#25995e"/><stop offset="0.486" stop-color="#39995b"/><stop offset="0.514" stop-color="#4c9957"/><stop offset="0.541" stop-color="#5f9954"/><stop offset="0.568" stop-color="#739950"/><stop offset="0.595" stop-color="#87994b"/><stop offset="0.622" stop-color="#999745"/><stop offset="0.649" stop-color="#998439"/><stop offset="0.676" stop-color="#99762e"/><stop offset="0.703" stop-color="#996925"/><stop offset="0.73" stop-color="#995f1d"/><stop offset="0.757" stop-color="#995515"/><stop offset="0.784" stop-color="#994d0f"/><stop offset="0.811" stop-color="#994608"/><stop offset="0.838" stop-color="#994001"/><stop offset="0.865" stop-color="#993a00"/><stop offset="0.892" stop-color="#993500"/><stop offset="0.919" stop-color="#993100"/><stop offset="0.946" stop-color="#992c00"/><stop offset="0.973" stop-color="#992800"/><stop offset="1" stop-color="#992500"/></linearGradient><linearGradient id="o39" gradientUnits="userSpaceOnUse" x1="621" y1="0" x2="915" y2="0"><stop offset="0" stop-color="#009984"/><stop offset="0.027" stop-color="#009983"/><stop offset="0.054" stop-color="#009982"/><stop offset="0.081" stop-color="#009981"/><stop offset="0.108" stop-color="#00997f"/><stop offset="0.135" stop-color="#00997e"/><stop offset="0.162" stop-color="#00997c"/><stop offset="0.189" stop-color="#00997b"/><stop offset="0.216" stop-color="#009979"/><stop offset="0.243" stop-color="#009977"/><stop offset="0.27" stop-color="#009975"/><stop offset="0.297" stop-color="#009973"/><stop offset="0.324" stop-color="#009971"/><stop offset="0.351" stop-color="#00996f"/><stop offset="0.378" stop-color="#00996c"/><stop offset="0.405" stop-color="#03996a"/><stop offset="0.432" stop-color="#1c9967"/><stop offset="0.459" stop-color="#319964"/><stop offset="0.486" stop-color="#459961"/><stop offset="0.514" stop-color="#59995e"/><stop offset="0.541" stop-color="#6e995a"/><stop offset="0.568" stop-color="#829956"/><stop offset="0.595" stop-color="#989952"/><stop offset="0.622" stop-color="#998644"/><stop offset="0.649" stop-color="#997738"/><stop offset="0.676" stop-color="#99692e"/><stop offset="0.703" stop-color="#995e25"/><stop offset="0.73" stop-color="#99551d"/><stop offset="0.757" stop-color="#994d16"/><stop offset="0.784" stop-color="#994510"/><stop offset="0.811" stop-color="#993f0a"/><stop offset="0.838" stop-color="#993903"/><stop offset="0.865" stop-color="#993400"/><stop offset="0.892" stop-color="#992f00"/><stop offset="0.919" stop-color="#992b00"/><stop offset="0.946" stop-color="#992700"/><stop offset="0.973" stop-color="#992300"/><stop offset="1" stop-color="#992000"/></linearGradient><linearGradient id="o40" gradientUnits="userSpaceOnUse" x1="621" y1="0" x2="921" y2="0"><stop offset="0" stop-color="#00998a"/><stop offset="0.026" stop-color="#009989"/><stop offset="0.053" stop-color="#009988"/><stop offset="0.079" stop-color="#009987"/><stop offset="0.105" stop-color="#009985"/><stop offset="0.132" stop-color="#009984"/><stop offset="0.158" stop-color="#009983"/><stop offset="0.184" stop-color="#009981"/><stop offset="0.211" stop-color="#009980"/><stop offset="0.237" stop-color="#00997e"/><stop offset="0.263" stop-color="#00997c"/><stop offset="0.289" stop-color="#00997a"/><stop offset="0.316" stop-color="#009978"/><stop offset="0.342" stop-color="#009976"/><stop offset="0.368" stop-color="#009974"/><stop offset="0.395" stop-color="#069972"/><stop offset="0.421" stop-color="#1f996f"/><stop offset="0.447" stop-color="#34996d"/><stop offset="0.474" stop-color="#49996a"/><stop offset="0.5" stop-color="#5d9967"/><stop offset="0.526" stop-color="#729963"/><stop offset="0.553" stop-color="#889960"/><stop offset="0.579" stop-color="#999459"/><stop offset="0.605" stop-color="#99814a"/><stop offset="0.632" stop-color="#99723d"/><stop offset="0.658" stop-color="#996533"/><stop offset="0.684" stop-color="#995b2a"/><stop offset="0.711" stop-color="#995222"/><stop offset="0.737" stop-color="#994a1b"/><stop offset="0.763" stop-color="#994215"/><stop offset="0.789" stop-color="#993c0f"/><stop offset="0.816" stop-color="#993709"/><stop offset="0.842" stop-color="#993103"/><stop offset="0.868" stop-color="#992d00"/><stop offset="0.895" stop-color="#992900"/><stop offset="0.921" stop-color="#992500"/><stop offset="0.947" stop-color="#992100"/><stop offset="0.974" stop-color="#991d00"/><stop offset="1" stop-color="#991a00"/></linearGradient><linearGradient id="o41" gradientUnits="userSpaceOnUse" x1="622" y1="0" x2="927" y2="0"><stop offset="0" stop-color="#009990"/><stop offset="0.026" stop-color="#00998f"/><stop offset="0.051" stop-color="#00998e"/><stop offset="0.077" stop-color="#00998d"/><stop offset="0.103" stop-color="#00998b"/><stop offset="0.128" stop-color="#00998a"/><stop offset="0.154" stop-color="#009989"/><stop offset="0.179" stop-color="#009988"/><stop offset="0.205" stop-color="#009986"/><stop offset="0.231" stop-color="#009985"/><stop offset="0.256" stop-color="#009983"/><stop offset="0.282" stop-color="#009982"/><stop offset="0.308" stop-color="#009980"/><stop offset="0.333" stop-color="#00997e"/><stop offset="0.359" stop-color="#00997c"/><stop offset="0.385" stop-color="#0b997a"/><stop offset="0.41" stop-color="#239978"/><stop offset="0.436" stop-color="#399975"/><stop offset="0.462" stop-color="#4e9972"/><stop offset="0.487" stop-color="#639970"/><stop offset="0.513" stop-color="#78996d"/><stop offset="0.538" stop-color="#8e9969"/><stop offset="0.564" stop-color="#998d5e"/><stop offset="0.59" stop-color="#997c4f"/><stop offset="0.615" stop-color="#996d42"/><stop offset="0.641" stop-color="#996138"/><stop offset="0.667" stop-color="#99572f"/><stop offset="0.692" stop-color="#994e27"/><stop offset="0.718" stop-color="#994620"/><stop offset="0.744" stop-color="#993f1a"/><stop offset="0.769" stop-color="#993914"/><stop offset="0.795" stop-color="#99340e"/><stop offset="0.821" stop-color="#992f09"/><stop offset="0.846" stop-color="#992a03"/><stop offset="0.872" stop-color="#992600"/><stop offset="0.897" stop-color="#992200"/><stop offset="0.923" stop-color="#991f00"/><stop offset="0.949" stop-color="#991b00"/><stop offset="0.974" stop-color="#991800"/><stop offset="1" stop-color="#991500"/></linearGradient><linearGradient id="o42" gradientUnits="userSpaceOnUse" x1="623" y1="0" x2="931" y2="0"><stop offset="0" stop-color="#009996"/><stop offset="0.026" stop-color="#009995"/><stop offset="0.051" stop-color="#009994"/><stop offset="0.077" stop-color="#009993"/><stop offset="0.103" stop-color="#009992"/><stop offset="0.128" stop-color="#009991"/><stop offset="0.154" stop-color="#009990"/><stop offset="0.179" stop-color="#00998e"/><stop offset="0.205" stop-color="#00998d"/><stop offset="0.231" stop-color="#00998c"/><stop offset="0.256" stop-color="#00998a"/><stop offset="0.282" stop-color="#009989"/><stop offset="0.308" stop-color="#009987"/><stop offset="0.333" stop-color="#009986"/><stop offset="0.359" stop-color="#009984"/><stop offset="0.385" stop-color="#189982"/><stop offset="0.41" stop-color="#2f9980"/><stop offset="0.436" stop-color="#45997d"/><stop offset="0.462" stop-color="#5b997b"/><stop offset="0.487" stop-color="#719978"/><stop offset="0.513" stop-color="#889975"/><stop offset="0.538" stop-color="#99936e"/><stop offset="0.564" stop-color="#997f5c"/><stop offset="0.59" stop-color="#996f4e"/><stop offset="0.615" stop-color="#996242"/><stop offset="0.641" stop-color="#995738"/><stop offset="0.667" stop-color="#994e2f"/><stop offset="0.692" stop-color="#994628"/><stop offset="0.718" stop-color="#993f21"/><stop offset="0.744" stop-color="#99391b"/><stop offset="0.769" stop-color="#993315"/><stop offset="0.795" stop-color="#992e10"/><stop offset="0.821" stop-color="#99290b"/><stop offset="0.846" stop-color="#992505"/><stop offset="0.872" stop-color="#992100"/><stop offset="0.897" stop-color="#991d00"/><stop offset="0.923" stop-color="#991a00"/><stop offset="0.949" stop-color="#991700"/><stop offset="0.974" stop-color="#991400"/><stop offset="1" stop-color="#991100"/></linearGradient><linearGradient id="o43" gradientUnits="userSpaceOnUse" x1="624" y1="0" x2="937" y2="0"><stop offset="0" stop-color="#00999c"/><stop offset="0.025" stop-color="#00999b"/><stop offset="0.05" stop-color="#00999a"/><stop offset="0.075" stop-color="#00999a"/><stop offset="0.1" stop-color="#009999"/><stop offset="0.125" stop-color="#009998"/><stop offset="0.15" stop-color="#009997"/><stop offset="0.175" stop-color="#009996"/><stop offset="0.2" stop-color="#009995"/><stop offset="0.225" stop-color="#009994"/><stop offset="0.25" stop-color="#009992"/><stop offset="0.275" stop-color="#009991"/><stop offset="0.3" stop-color="#009990"/><stop offset="0.325" stop-color="#00998e"/><stop offset="0.35" stop-color="#00998d"/><stop offset="0.375" stop-color="#1d998b"/><stop offset="0.4" stop-color="#349989"/><stop offset="0.425" stop-color="#4b9987"/><stop offset="0.45" stop-color="#619985"/><stop offset="0.475" stop-color="#789983"/><stop offset="0.5" stop-color="#909980"/><stop offset="0.525" stop-color="#998b72"/><stop offset="0.55" stop-color="#997861"/><stop offset="0.575" stop-color="#996a52"/><stop offset="0.6" stop-color="#995d46"/><stop offset="0.625" stop-color="#99533c"/><stop offset="0.65" stop-color="#994a34"/><stop offset="0.675" stop-color="#99422c"/><stop offset="0.7" stop-color="#993b25"/><stop offset="0.725" stop-color="#99351f"/><stop offset="0.75" stop-color="#993019"/><stop offset="0.775" stop-color="#992b14"/><stop offset="0.8" stop-color="#99260f"/><stop offset="0.825" stop-color="#99220a"/><stop offset="0.85" stop-color="#991f05"/><stop offset="0.875" stop-color="#991b00"/><stop offset="0.9" stop-color="#991800"/><stop offset="0.925" stop-color="#991400"/><stop offset="0.95" stop-color="#991100"/><stop offset="0.975" stop-color="#990e00"/><stop offset="1" stop-color="#990c00"/></linearGradient><linearGradient id="o44" gradientUnits="userSpaceOnUse" x1="625" y1="0" x2="942" y2="0"><stop offset="0" stop-color="#0099a3"/><stop offset="0.025" stop-color="#0099a2"/><stop offset="0.05" stop-color="#0099a1"/><stop offset="0.075" stop-color="#0099a1"/><stop offset="0.1" stop-color="#0099a0"/><stop offset="0.125" stop-color="#00999f"/><stop offset="0.15" stop-color="#00999e"/><stop offset="0.175" stop-color="#00999d"/><stop offset="0.2" stop-color="#00999d"/><stop offset="0.225" stop-color="#00999c"/><stop offset="0.25" stop-color="#00999b"/><stop offset="0.275" stop-color="#009999"/><stop offset="0.3" stop-color="#009998"/><stop offset="0.325" stop-color="#009997"/><stop offset="0.35" stop-color="#109996"/><stop offset="0.375" stop-color="#2a9994"/><stop offset="0.4" stop-color="#429993"/><stop offset="0.425" stop-color="#599991"/><stop offset="0.45" stop-color="#71998f"/><stop offset="0.475" stop-color="#8a998d"/><stop offset="0.5" stop-color="#998f82"/><stop offset="0.525" stop-color="#997b6e"/><stop offset="0.55" stop-color="#996b5e"/><stop offset="0.575" stop-color="#995e50"/><stop offset="0.6" stop-color="#995345"/><stop offset="0.625" stop-color="#994a3c"/><stop offset="0.65" stop-color="#994233"/><stop offset="0.675" stop-color="#993a2c"/><stop offset="0.7" stop-color="#993425"/><stop offset="0.725" stop-color="#992f1f"/><stop offset="0.75" stop-color="#992a1a"/><stop offset="0.775" stop-color="#992515"/><stop offset="0.8" stop-color="#992110"/><stop offset="0.825" stop-color="#991d0b"/><stop offset="0.85" stop-color="#991906"/><stop offset="0.875" stop-color="#991601"/><stop offset="0.9" stop-color="#991300"/><stop offset="0.925" stop-color="#990f00"/><stop offset="0.95" stop-color="#990d00"/><stop offset="0.975" stop-color="#990a00"/><stop offset="1" stop-color="#990700"/></linearGradient><linearGradient id="o45" gradientUnits="userSpaceOnUse" x1="625" y1="0" x2="947" y2="0"><stop offset="0" stop-color="#0099aa"/><stop offset="0.024" stop-color="#0099a9"/><stop offset="0.049" stop-color="#0099a9"/><stop offset="0.073" stop-color="#0099a8"/><stop offset="0.098" stop-color="#0099a8"/><stop offset="0.122" stop-color="#0099a7"/><stop offset="0.146" stop-color="#0099a6"/><stop offset="0.171" stop-color="#0099a6"/><stop offset="0.195" stop-color="#0099a5"/><stop offset="0.22" stop-color="#0099a4"/><stop offset="0.244" stop-color="#0099a4"/><stop offset="0.268" stop-color="#0099a3"/><stop offset="0.293" stop-color="#0099a2"/><stop offset="0.317" stop-color="#0099a1"/><stop offset="0.341" stop-color="#1299a0"/><stop offset="0.366" stop-color="#2d999f"/><stop offset="0.39" stop-color="#45999e"/><stop offset="0.415" stop-color="#5d999d"/><stop offset="0.439" stop-color="#76999b"/><stop offset="0.463" stop-color="#8f999a"/><stop offset="0.488" stop-color="#998a89"/><stop offset="0.512" stop-color="#997674"/><stop offset="0.537" stop-color="#996764"/><stop offset="0.561" stop-color="#995a56"/><stop offset="0.585" stop-color="#994f4b"/><stop offset="0.61" stop-color="#994641"/><stop offset="0.634" stop-color="#993e38"/><stop offset="0.659" stop-color="#993831"/><stop offset="0.683" stop-color="#99322a"/><stop offset="0.707" stop-color="#992c24"/><stop offset="0.732" stop-color="#99271e"/><stop offset="0.756" stop-color="#992319"/><stop offset="0.78" stop-color="#991e14"/><stop offset="0.805" stop-color="#991b10"/><stop offset="0.829" stop-color="#99170b"/><stop offset="0.854" stop-color="#991407"/><stop offset="0.878" stop-color="#991002"/><stop offset="0.902" stop-color="#990d00"/><stop offset="0.927" stop-color="#990a00"/><stop offset="0.951" stop-color="#990700"/><stop offset="0.976" stop-color="#990400"/><stop offset="1" stop-color="#990100"/></linearGradient><linearGradient id="o46" gradientUnits="userSpaceOnUse" x1="626" y1="0" x2="953" y2="0"><stop offset="0" stop-color="#0099b1"/><stop offset="0.024" stop-color="#0099b1"/><stop offset="0.049" stop-color="#0099b0"/><stop offset="0.073" stop-color="#0099b0"/><stop offset="0.098" stop-color="#0099b0"/><stop offset="0.122" stop-color="#0099af"/><stop offset="0.146" stop-color="#0099af"/><stop offset="0.171" stop-color="#0099af"/><stop offset="0.195" stop-color="#0099ae"/><stop offset="0.22" stop-color="#0099ae"/><stop offset="0.244" stop-color="#0099ad"/><stop offset="0.268" stop-color="#0099ad"/><stop offset="0.293" stop-color="#0099ac"/><stop offset="0.317" stop-color="#0299ac"/><stop offset="0.341" stop-color="#2299ab"/><stop offset="0.366" stop-color="#3c99aa"/><stop offset="0.39" stop-color="#5699aa"/><stop offset="0.415" stop-color="#6f99a9"/><stop offset="0.439" stop-color="#8a99a8"/><stop offset="0.463" stop-color="#998d9a"/><stop offset="0.488" stop-color="#997882"/><stop offset="0.512" stop-color="#99676f"/><stop offset="0.537" stop-color="#995a60"/><stop offset="0.561" stop-color="#994f53"/><stop offset="0.585" stop-color="#994548"/><stop offset="0.61" stop-color="#993d3f"/><stop offset="0.634" stop-color="#993637"/><stop offset="0.659" stop-color="#993030"/><stop offset="0.683" stop-color="#992a29"/><stop offset="0.707" stop-color="#992524"/><stop offset="0.732" stop-color="#99211e"/><stop offset="0.756" stop-color="#991c19"/><stop offset="0.78" stop-color="#991915"/><stop offset="0.805" stop-color="#991510"/><stop offset="0.829" stop-color="#99110c"/><stop offset="0.854" stop-color="#990e07"/><stop offset="0.878" stop-color="#990b03"/><stop offset="0.902" stop-color="#990800"/><stop offset="0.927" stop-color="#990500"/><stop offset="0.951" stop-color="#990100"/><stop offset="0.976" stop-color="#990000"/><stop offset="1" stop-color="#990000"/></linearGradient><linearGradient id="o47" gradientUnits="userSpaceOnUse" x1="627" y1="0" x2="958" y2="0"><stop offset="0" stop-color="#0099b9"/><stop offset="0.024" stop-color="#0099b9"/><stop offset="0.048" stop-color="#0099b8"/><stop offset="0.071" stop-color="#0099b8"/><stop offset="0.095" stop-color="#0099b8"/><stop offset="0.119" stop-color="#0099b8"/><stop offset="0.143" stop-color="#0099b8"/><stop offset="0.167" stop-color="#0099b8"/><stop offset="0.19" stop-color="#0099b8"/><stop offset="0.214" stop-color="#0099b8"/><stop offset="0.238" stop-color="#0099b8"/><stop offset="0.262" stop-color="#0099b8"/><stop offset="0.286" stop-color="#0099b7"/><stop offset="0.31" stop-color="#0899b7"/><stop offset="0.333" stop-color="#2799b7"/><stop offset="0.357" stop-color="#4299b7"/><stop offset="0.381" stop-color="#5c99b7"/><stop offset="0.405" stop-color="#7799b6"/><stop offset="0.429" stop-color="#9299b6"/><stop offset="0.452" stop-color="#99859f"/><stop offset="0.476" stop-color="#997187"/><stop offset="0.5" stop-color="#996274"/><stop offset="0.524" stop-color="#995564"/><stop offset="0.548" stop-color="#994a58"/><stop offset="0.571" stop-color="#99414d"/><stop offset="0.595" stop-color="#993a44"/><stop offset="0.619" stop-color="#99333b"/><stop offset="0.643" stop-color="#992d34"/><stop offset="0.667" stop-color="#99272e"/><stop offset="0.69" stop-color="#992228"/><stop offset="0.714" stop-color="#991e22"/><stop offset="0.738" stop-color="#991a1d"/><stop offset="0.762" stop-color="#991619"/><stop offset="0.786" stop-color="#991214"/><stop offset="0.81" stop-color="#990f10"/><stop offset="0.833" stop-color="#990c0c"/><stop offset="0.857" stop-color="#990808"/><stop offset="0.881" stop-color="#990503"/><stop offset="0.905" stop-color="#990200"/><stop offset="0.929" stop-color="#990000"/><stop offset="0.952" stop-color="#990000"/><stop offset="0.976" stop-color="#990000"/><stop offset="1" stop-color="#990000"/></linearGradient><linearGradient id="o48" gradientUnits="userSpaceOnUse" x1="628" y1="0" x2="963" y2="0"><stop offset="0" stop-color="#0096bd"/><stop offset="0.024" stop-color="#0096bd"/><stop offset="0.048" stop-color="#0095bd"/><stop offset="0.071" stop-color="#0095bd"/><stop offset="0.095" stop-color="#0095bd"/><stop offset="0.119" stop-color="#0095bd"/><stop offset="0.143" stop-color="#0095bd"/><stop offset="0.167" stop-color="#0095bd"/><stop offset="0.19" stop-color="#0095bd"/><stop offset="0.214" stop-color="#0094bd"/><stop offset="0.238" stop-color="#0094bd"/><stop offset="0.262" stop-color="#0094bd"/><stop offset="0.286" stop-color="#0094bd"/><stop offset="0.31" stop-color="#1893bd"/><stop offset="0.333" stop-color="#3493bd"/><stop offset="0.357" stop-color="#4e93bd"/><stop offset="0.381" stop-color="#6992bd"/><stop offset="0.405" stop-color="#8492bd"/><stop offset="0.429" stop-color="#998bb4"/><stop offset="0.452" stop-color="#997597"/><stop offset="0.476" stop-color="#996382"/><stop offset="0.5" stop-color="#995670"/><stop offset="0.524" stop-color="#994a62"/><stop offset="0.548" stop-color="#994156"/><stop offset="0.571" stop-color="#99394c"/><stop offset="0.595" stop-color="#993243"/><stop offset="0.619" stop-color="#992c3b"/><stop offset="0.643" stop-color="#992634"/><stop offset="0.667" stop-color="#99212d"/><stop offset="0.69" stop-color="#991c28"/><stop offset="0.714" stop-color="#991822"/><stop offset="0.738" stop-color="#99141e"/><stop offset="0.762" stop-color="#991119"/><stop offset="0.786" stop-color="#990d15"/><stop offset="0.81" stop-color="#990a11"/><stop offset="0.833" stop-color="#99060d"/><stop offset="0.857" stop-color="#990209"/><stop offset="0.881" stop-color="#990004"/><stop offset="0.905" stop-color="#990000"/><stop offset="0.929" stop-color="#990000"/><stop offset="0.952" stop-color="#990000"/><stop offset="0.976" stop-color="#990000"/><stop offset="1" stop-color="#990000"/></linearGradient><linearGradient id="o49" gradientUnits="userSpaceOnUse" x1="629" y1="0" x2="969" y2="0"><stop offset="0" stop-color="#008fbd"/><stop offset="0.023" stop-color="#008fbd"/><stop offset="0.047" stop-color="#008fbd"/><stop offset="0.07" stop-color="#008ebd"/><stop offset="0.093" stop-color="#008ebd"/><stop offset="0.116" stop-color="#008ebd"/><stop offset="0.14" stop-color="#008dbd"/><stop offset="0.163" stop-color="#008dbd"/><stop offset="0.186" stop-color="#008cbd"/><stop offset="0.209" stop-color="#008cbd"/><stop offset="0.233" stop-color="#008bbd"/><stop offset="0.256" stop-color="#008bbd"/><stop offset="0.279" stop-color="#008abd"/><stop offset="0.302" stop-color="#1c8abd"/><stop offset="0.326" stop-color="#3789bd"/><stop offset="0.349" stop-color="#5088bd"/><stop offset="0.372" stop-color="#6987bd"/><stop offset="0.395" stop-color="#8387bd"/><stop offset="0.419" stop-color="#9981b6"/><stop offset="0.442" stop-color="#996d9a"/><stop offset="0.465" stop-color="#995d85"/><stop offset="0.488" stop-color="#995074"/><stop offset="0.512" stop-color="#994565"/><stop offset="0.535" stop-color="#993c59"/><stop offset="0.558" stop-color="#99344f"/><stop offset="0.581" stop-color="#992e46"/><stop offset="0.605" stop-color="#99283e"/><stop offset="0.628" stop-color="#992237"/><stop offset="0.651" stop-color="#991d31"/><stop offset="0.674" stop-color="#99192b"/><stop offset="0.698" stop-color="#991526"/><stop offset="0.721" stop-color="#991121"/><stop offset="0.744" stop-color="#990d1c"/><stop offset="0.767" stop-color="#990a18"/><stop offset="0.791" stop-color="#990614"/><stop offset="0.814" stop-color="#990210"/><stop offset="0.837" stop-color="#99000c"/><stop offset="0.86" stop-color="#990008"/><stop offset="0.884" stop-color="#990004"/><stop offset="0.907" stop-color="#990000"/><stop offset="0.93" stop-color="#990000"/><stop offset="0.953" stop-color="#990000"/><stop offset="0.977" stop-color="#990000"/><stop offset="1" stop-color="#990000"/></linearGradient><linearGradient id="o50" gradientUnits="userSpaceOnUse" x1="630" y1="0" x2="974" y2="0"><stop offset="0" stop-color="#0089bd"/><stop offset="0.023" stop-color="#0088bd"/><stop offset="0.047" stop-color="#0088bd"/><stop offset="0.07" stop-color="#0087bd"/><stop offset="0.093" stop-color="#0087bd"/><stop offset="0.116" stop-color="#0086bd"/><stop offset="0.14" stop-color="#0086bd"/><stop offset="0.163" stop-color="#0085bd"/><stop offset="0.186" stop-color="#0084bd"/><stop offset="0.209" stop-color="#0084bd"/><stop offset="0.233" stop-color="#0083bd"/><stop offset="0.256" stop-color="#0082bd"/><stop offset="0.279" stop-color="#0c81bd"/><stop offset="0.302" stop-color="#2880bd"/><stop offset="0.326" stop-color="#417fbd"/><stop offset="0.349" stop-color="#597ebd"/><stop offset="0.372" stop-color="#727dbd"/><stop offset="0.395" stop-color="#8c7bbd"/><stop offset="0.419" stop-color="#9970ad"/><stop offset="0.442" stop-color="#995e94"/><stop offset="0.465" stop-color="#995080"/><stop offset="0.488" stop-color="#994570"/><stop offset="0.512" stop-color="#993c63"/><stop offset="0.535" stop-color="#993458"/><stop offset="0.558" stop-color="#992d4e"/><stop offset="0.581" stop-color="#992645"/><stop offset="0.605" stop-color="#99213e"/><stop offset="0.628" stop-color="#991c37"/><stop offset="0.651" stop-color="#991731"/><stop offset="0.674" stop-color="#99132b"/><stop offset="0.698" stop-color="#990f26"/><stop offset="0.721" stop-color="#990b21"/><stop offset="0.744" stop-color="#99081d"/><stop offset="0.767" stop-color="#990418"/><stop offset="0.791" stop-color="#990014"/><stop offset="0.814" stop-color="#990011"/><stop offset="0.837" stop-color="#99000d"/><stop offset="0.86" stop-color="#990009"/><stop offset="0.884" stop-color="#990005"/><stop offset="0.907" stop-color="#990001"/><stop offset="0.93" stop-color="#990000"/><stop offset="0.953" stop-color="#990000"/><stop offset="0.977" stop-color="#990000"/><stop offset="1" stop-color="#990000"/></linearGradient><linearGradient id="o51" gradientUnits="userSpaceOnUse" x1="631" y1="0" x2="978" y2="0"><stop offset="0" stop-color="#0083bd"/><stop offset="0.023" stop-color="#0082bd"/><stop offset="0.045" stop-color="#0081bd"/><stop offset="0.068" stop-color="#0081bd"/><stop offset="0.091" stop-color="#0080bd"/><stop offset="0.114" stop-color="#007fbd"/><stop offset="0.136" stop-color="#007fbd"/><stop offset="0.159" stop-color="#007ebd"/><stop offset="0.182" stop-color="#007dbd"/><stop offset="0.205" stop-color="#007cbd"/><stop offset="0.227" stop-color="#007bbd"/><stop offset="0.25" stop-color="#007abd"/><stop offset="0.273" stop-color="#1079bd"/><stop offset="0.295" stop-color="#2a77bd"/><stop offset="0.318" stop-color="#4176bd"/><stop offset="0.341" stop-color="#5974bd"/><stop offset="0.364" stop-color="#7073bd"/><stop offset="0.386" stop-color="#8971bd"/><stop offset="0.409" stop-color="#9969b2"/><stop offset="0.432" stop-color="#995999"/><stop offset="0.455" stop-color="#994b85"/><stop offset="0.477" stop-color="#994175"/><stop offset="0.5" stop-color="#993868"/><stop offset="0.523" stop-color="#99305c"/><stop offset="0.545" stop-color="#992952"/><stop offset="0.568" stop-color="#992349"/><stop offset="0.591" stop-color="#991e42"/><stop offset="0.614" stop-color="#99193b"/><stop offset="0.636" stop-color="#991435"/><stop offset="0.659" stop-color="#99102f"/><stop offset="0.682" stop-color="#990c2a"/><stop offset="0.705" stop-color="#990825"/><stop offset="0.727" stop-color="#990420"/><stop offset="0.75" stop-color="#99001c"/><stop offset="0.773" stop-color="#990018"/><stop offset="0.795" stop-color="#990014"/><stop offset="0.818" stop-color="#990011"/><stop offset="0.841" stop-color="#99000d"/><stop offset="0.864" stop-color="#99000a"/><stop offset="0.886" stop-color="#990006"/><stop offset="0.909" stop-color="#990002"/><stop offset="0.932" stop-color="#990000"/><stop offset="0.955" stop-color="#990000"/><stop offset="0.977" stop-color="#990000"/><stop offset="1" stop-color="#990000"/></linearGradient><linearGradient id="o52" gradientUnits="userSpaceOnUse" x1="632" y1="0" x2="978" y2="0"><stop offset="0" stop-color="#007dbd"/><stop offset="0.023" stop-color="#007cbd"/><stop offset="0.045" stop-color="#007bbd"/><stop offset="0.068" stop-color="#007abd"/><stop offset="0.091" stop-color="#0079bd"/><stop offset="0.114" stop-color="#0078bd"/><stop offset="0.136" stop-color="#0077bd"/><stop offset="0.159" stop-color="#0076bd"/><stop offset="0.182" stop-color="#0075bd"/><stop offset="0.205" stop-color="#0074bd"/><stop offset="0.227" stop-color="#0073bd"/><stop offset="0.25" stop-color="#0072bd"/><stop offset="0.273" stop-color="#1770bd"/><stop offset="0.295" stop-color="#2f6fbd"/><stop offset="0.318" stop-color="#456dbd"/><stop offset="0.341" stop-color="#5c6bbd"/><stop offset="0.364" stop-color="#7369bd"/><stop offset="0.386" stop-color="#8a67bd"/><stop offset="0.409" stop-color="#995fb2"/><stop offset="0.432" stop-color="#995099"/><stop offset="0.455" stop-color="#994486"/><stop offset="0.477" stop-color="#993a76"/><stop offset="0.5" stop-color="#993169"/><stop offset="0.523" stop-color="#992a5e"/><stop offset="0.545" stop-color="#992454"/><stop offset="0.568" stop-color="#991e4b"/><stop offset="0.591" stop-color="#991944"/><stop offset="0.614" stop-color="#99143d"/><stop offset="0.636" stop-color="#991037"/><stop offset="0.659" stop-color="#990c31"/><stop offset="0.682" stop-color="#99082c"/><stop offset="0.705" stop-color="#990427"/><stop offset="0.727" stop-color="#990023"/><stop offset="0.75" stop-color="#99001e"/><stop offset="0.773" stop-color="#99001a"/><stop offset="0.795" stop-color="#990017"/><stop offset="0.818" stop-color="#990013"/><stop offset="0.841" stop-color="#990010"/><stop offset="0.864" stop-color="#99000c"/><stop offset="0.886" stop-color="#990009"/><stop offset="0.909" stop-color="#990005"/><stop offset="0.932" stop-color="#990001"/><stop offset="0.955" stop-color="#990000"/><stop offset="0.977" stop-color="#990000"/><stop offset="1" stop-color="#990000"/></linearGradient><linearGradient id="o53" gradientUnits="userSpaceOnUse" x1="633" y1="0" x2="978" y2="0"><stop offset="0" stop-color="#0077bd"/><stop offset="0.023" stop-color="#0076bd"/><stop offset="0.045" stop-color="#0075bd"/><stop offset="0.068" stop-color="#0074bd"/><stop offset="0.091" stop-color="#0073bd"/><stop offset="0.114" stop-color="#0072bd"/><stop offset="0.136" stop-color="#0071bd"/><stop offset="0.159" stop-color="#006fbd"/><stop offset="0.182" stop-color="#006ebd"/><stop offset="0.205" stop-color="#006dbd"/><stop offset="0.227" stop-color="#006bbd"/><stop offset="0.25" stop-color="#006abd"/><stop offset="0.273" stop-color="#1d68bd"/><stop offset="0.295" stop-color="#3466bd"/><stop offset="0.318" stop-color="#4964bd"/><stop offset="0.341" stop-color="#5f62bd"/><stop offset="0.364" stop-color="#7560bd"/><stop offset="0.386" stop-color="#8c5dbd"/><stop offset="0.409" stop-color="#9955b1"/><stop offset="0.432" stop-color="#99479a"/><stop offset="0.455" stop-color="#993c87"/><stop offset="0.477" stop-color="#993377"/><stop offset="0.5" stop-color="#992b6b"/><stop offset="0.523" stop-color="#99245f"/><stop offset="0.545" stop-color="#991e56"/><stop offset="0.568" stop-color="#99194d"/><stop offset="0.591" stop-color="#991446"/><stop offset="0.614" stop-color="#99103f"/><stop offset="0.636" stop-color="#990b39"/><stop offset="0.659" stop-color="#990733"/><stop offset="0.682" stop-color="#99022e"/><stop offset="0.705" stop-color="#990029"/><stop offset="0.727" stop-color="#990025"/><stop offset="0.75" stop-color="#990020"/><stop offset="0.773" stop-color="#99001d"/><stop offset="0.795" stop-color="#990019"/><stop offset="0.818" stop-color="#990015"/><stop offset="0.841" stop-color="#990012"/><stop offset="0.864" stop-color="#99000f"/><stop offset="0.886" stop-color="#99000b"/><stop offset="0.909" stop-color="#990008"/><stop offset="0.932" stop-color="#990005"/><stop offset="0.955" stop-color="#990001"/><stop offset="0.977" stop-color="#990000"/><stop offset="1" stop-color="#990000"/></linearGradient><linearGradient id="o54" gradientUnits="userSpaceOnUse" x1="635" y1="0" x2="978" y2="0"><stop offset="0" stop-color="#0071bd"/><stop offset="0.023" stop-color="#0070bd"/><stop offset="0.047" stop-color="#006fbd"/><stop offset="0.07" stop-color="#006ebd"/><stop offset="0.093" stop-color="#006cbd"/><stop offset="0.116" stop-color="#006bbd"/><stop offset="0.14" stop-color="#006abd"/><stop offset="0.163" stop-color="#0068bd"/><stop offset="0.186" stop-color="#0067bd"/><stop offset="0.209" stop-color="#0065bd"/><stop offset="0.233" stop-color="#0063bd"/><stop offset="0.256" stop-color="#1361bd"/><stop offset="0.279" stop-color="#2b5fbd"/><stop offset="0.302" stop-color="#405dbd"/><stop offset="0.326" stop-color="#565bbd"/><stop offset="0.349" stop-color="#6b58bd"/><stop offset="0.372" stop-color="#8155bd"/><stop offset="0.395" stop-color="#9852bd"/><stop offset="0.419" stop-color="#9945a4"/><stop offset="0.442" stop-color="#993a90"/><stop offset="0.465" stop-color="#99307f"/><stop offset="0.488" stop-color="#992871"/><stop offset="0.512" stop-color="#992165"/><stop offset="0.535" stop-color="#991b5b"/><stop offset="0.558" stop-color="#991652"/><stop offset="0.581" stop-color="#99114a"/><stop offset="0.605" stop-color="#990c43"/><stop offset="0.628" stop-color="#99083c"/><stop offset="0.651" stop-color="#990337"/><stop offset="0.674" stop-color="#990031"/><stop offset="0.698" stop-color="#99002c"/><stop offset="0.721" stop-color="#990028"/><stop offset="0.744" stop-color="#990023"/><stop offset="0.767" stop-color="#99001f"/><stop offset="0.791" stop-color="#99001c"/><stop offset="0.814" stop-color="#990018"/><stop offset="0.837" stop-color="#990014"/><stop offset="0.86" stop-color="#990011"/><stop offset="0.884" stop-color="#99000e"/><stop offset="0.907" stop-color="#99000b"/><stop offset="0.93" stop-color="#990008"/><stop offset="0.953" stop-color="#990004"/><stop offset="0.977" stop-color="#990000"/><stop offset="1" stop-color="#990000"/></linearGradient><linearGradient id="o55" gradientUnits="userSpaceOnUse" x1="636" y1="0" x2="978" y2="0"><stop offset="0" stop-color="#006bbd"/><stop offset="0.023" stop-color="#006abd"/><stop offset="0.047" stop-color="#0069bd"/><stop offset="0.07" stop-color="#0067bd"/><stop offset="0.093" stop-color="#0066bd"/><stop offset="0.116" stop-color="#0065bd"/><stop offset="0.14" stop-color="#0063bd"/><stop offset="0.163" stop-color="#0061bd"/><stop offset="0.186" stop-color="#0060bd"/><stop offset="0.209" stop-color="#005ebd"/><stop offset="0.233" stop-color="#005cbd"/><stop offset="0.256" stop-color="#195abd"/><stop offset="0.279" stop-color="#2f58bd"/><stop offset="0.302" stop-color="#4455bd"/><stop offset="0.326" stop-color="#5952bd"/><stop offset="0.349" stop-color="#6e50bd"/><stop offset="0.372" stop-color="#834dbd"/><stop offset="0.395" stop-color="#9949bd"/><stop offset="0.419" stop-color="#993da4"/><stop offset="0.442" stop-color="#993290"/><stop offset="0.465" stop-color="#992a80"/><stop offset="0.488" stop-color="#992272"/><stop offset="0.512" stop-color="#991c67"/><stop offset="0.535" stop-color="#99165d"/><stop offset="0.558" stop-color="#991154"/><stop offset="0.581" stop-color="#990c4c"/><stop offset="0.605" stop-color="#990745"/><stop offset="0.628" stop-color="#99013e"/><stop offset="0.651" stop-color="#990038"/><stop offset="0.674" stop-color="#990033"/><stop offset="0.698" stop-color="#99002e"/><stop offset="0.721" stop-color="#99002a"/><stop offset="0.744" stop-color="#990025"/><stop offset="0.767" stop-color="#990021"/><stop offset="0.791" stop-color="#99001e"/><stop offset="0.814" stop-color="#99001a"/><stop offset="0.837" stop-color="#990017"/><stop offset="0.86" stop-color="#990013"/><stop offset="0.884" stop-color="#990010"/><stop offset="0.907" stop-color="#99000d"/><stop offset="0.93" stop-color="#99000a"/><stop offset="0.953" stop-color="#990007"/><stop offset="0.977" stop-color="#990003"/><stop offset="1" stop-color="#990000"/></linearGradient><linearGradient id="o56" gradientUnits="userSpaceOnUse" x1="637" y1="0" x2="972" y2="0"><stop offset="0" stop-color="#0066bd"/><stop offset="0.024" stop-color="#0064bd"/><stop offset="0.048" stop-color="#0063bd"/><stop offset="0.071" stop-color="#0061bd"/><stop offset="0.095" stop-color="#0060bd"/><stop offset="0.119" stop-color="#005ebd"/><stop offset="0.143" stop-color="#005dbd"/><stop offset="0.167" stop-color="#005bbd"/><stop offset="0.19" stop-color="#0059bd"/><stop offset="0.214" stop-color="#0057bd"/><stop offset="0.238" stop-color="#0855bd"/><stop offset="0.262" stop-color="#2052bd"/><stop offset="0.286" stop-color="#3550bd"/><stop offset="0.31" stop-color="#494dbd"/><stop offset="0.333" stop-color="#5d4abd"/><stop offset="0.357" stop-color="#7247bd"/><stop offset="0.381" stop-color="#8644bd"/><stop offset="0.405" stop-color="#993fb9"/><stop offset="0.429" stop-color="#9933a2"/><stop offset="0.452" stop-color="#992a8f"/><stop offset="0.476" stop-color="#99227f"/><stop offset="0.5" stop-color="#991b72"/><stop offset="0.524" stop-color="#991567"/><stop offset="0.548" stop-color="#990f5d"/><stop offset="0.571" stop-color="#990a54"/><stop offset="0.595" stop-color="#99054c"/><stop offset="0.619" stop-color="#990045"/><stop offset="0.643" stop-color="#99003f"/><stop offset="0.667" stop-color="#990039"/><stop offset="0.69" stop-color="#990034"/><stop offset="0.714" stop-color="#99002f"/><stop offset="0.738" stop-color="#99002b"/><stop offset="0.762" stop-color="#990026"/><stop offset="0.786" stop-color="#990023"/><stop offset="0.81" stop-color="#99001f"/><stop offset="0.833" stop-color="#99001b"/><stop offset="0.857" stop-color="#990018"/><stop offset="0.881" stop-color="#990015"/><stop offset="0.905" stop-color="#990011"/><stop offset="0.929" stop-color="#99000e"/><stop offset="0.952" stop-color="#99000b"/><stop offset="0.976" stop-color="#990008"/><stop offset="1" stop-color="#990005"/></linearGradient><linearGradient id="o57" gradientUnits="userSpaceOnUse" x1="639" y1="0" x2="961" y2="0"><stop offset="0" stop-color="#0060bd"/><stop offset="0.024" stop-color="#005fbd"/><stop offset="0.049" stop-color="#005dbd"/><stop offset="0.073" stop-color="#005cbd"/><stop offset="0.098" stop-color="#005abd"/><stop offset="0.122" stop-color="#0058bd"/><stop offset="0.146" stop-color="#0056bd"/><stop offset="0.171" stop-color="#0054bd"/><stop offset="0.195" stop-color="#0052bd"/><stop offset="0.22" stop-color="#0050bd"/><stop offset="0.244" stop-color="#0f4ebd"/><stop offset="0.268" stop-color="#254bbd"/><stop offset="0.293" stop-color="#3948bd"/><stop offset="0.317" stop-color="#4c46bd"/><stop offset="0.341" stop-color="#5f42bd"/><stop offset="0.366" stop-color="#733fbd"/><stop offset="0.39" stop-color="#863bbd"/><stop offset="0.415" stop-color="#9937ba"/><stop offset="0.439" stop-color="#992ca4"/><stop offset="0.463" stop-color="#992491"/><stop offset="0.488" stop-color="#991c82"/><stop offset="0.512" stop-color="#991675"/><stop offset="0.537" stop-color="#99106a"/><stop offset="0.561" stop-color="#990a60"/><stop offset="0.585" stop-color="#990557"/><stop offset="0.61" stop-color="#99004f"/><stop offset="0.634" stop-color="#990048"/><stop offset="0.659" stop-color="#990042"/><stop offset="0.683" stop-color="#99003c"/><stop offset="0.707" stop-color="#990037"/><stop offset="0.732" stop-color="#990032"/><stop offset="0.756" stop-color="#99002e"/><stop offset="0.78" stop-color="#990029"/><stop offset="0.805" stop-color="#990025"/><stop offset="0.829" stop-color="#990022"/><stop offset="0.854" stop-color="#99001e"/><stop offset="0.878" stop-color="#99001b"/><stop offset="0.902" stop-color="#990018"/><stop offset="0.927" stop-color="#990015"/><stop offset="0.951" stop-color="#990012"/><stop offset="0.976" stop-color="#99000f"/><stop offset="1" stop-color="#99000c"/></linearGradient><linearGradient id="o58" gradientUnits="userSpaceOnUse" x1="640" y1="0" x2="950" y2="0"><stop offset="0" stop-color="#005bbd"/><stop offset="0.026" stop-color="#0059bd"/><stop offset="0.051" stop-color="#0057bd"/><stop offset="0.077" stop-color="#0056bd"/><stop offset="0.103" stop-color="#0054bd"/><stop offset="0.128" stop-color="#0052bd"/><stop offset="0.154" stop-color="#0050bd"/><stop offset="0.179" stop-color="#004ebd"/><stop offset="0.205" stop-color="#004bbd"/><stop offset="0.231" stop-color="#0049bd"/><stop offset="0.256" stop-color="#1946bd"/><stop offset="0.282" stop-color="#2d44bd"/><stop offset="0.308" stop-color="#4041bd"/><stop offset="0.333" stop-color="#533dbd"/><stop offset="0.359" stop-color="#663abd"/><stop offset="0.385" stop-color="#7936bd"/><stop offset="0.41" stop-color="#8d32bd"/><stop offset="0.436" stop-color="#992bb3"/><stop offset="0.462" stop-color="#99229e"/><stop offset="0.487" stop-color="#991a8d"/><stop offset="0.513" stop-color="#99137f"/><stop offset="0.538" stop-color="#990d72"/><stop offset="0.564" stop-color="#990767"/><stop offset="0.59" stop-color="#99015e"/><stop offset="0.615" stop-color="#990056"/><stop offset="0.641" stop-color="#99004e"/><stop offset="0.667" stop-color="#990048"/><stop offset="0.692" stop-color="#990041"/><stop offset="0.718" stop-color="#99003c"/><stop offset="0.744" stop-color="#990037"/><stop offset="0.769" stop-color="#990032"/><stop offset="0.795" stop-color="#99002d"/><stop offset="0.821" stop-color="#990029"/><stop offset="0.846" stop-color="#990025"/><stop offset="0.872" stop-color="#990022"/><stop offset="0.897" stop-color="#99001e"/><stop offset="0.923" stop-color="#99001b"/><stop offset="0.949" stop-color="#990018"/><stop offset="0.974" stop-color="#990015"/><stop offset="1" stop-color="#990012"/></linearGradient><linearGradient id="o59" gradientUnits="userSpaceOnUse" x1="641" y1="0" x2="938" y2="0"><stop offset="0" stop-color="#0055bd"/><stop offset="0.026" stop-color="#0054bd"/><stop offset="0.053" stop-color="#0052bd"/><stop offset="0.079" stop-color="#0050bd"/><stop offset="0.105" stop-color="#004ebd"/><stop offset="0.132" stop-color="#004cbd"/><stop offset="0.158" stop-color="#004abd"/><stop offset="0.184" stop-color="#0048bd"/><stop offset="0.211" stop-color="#0045bd"/><stop offset="0.237" stop-color="#0443bd"/><stop offset="0.263" stop-color="#1b40bd"/><stop offset="0.289" stop-color="#2e3dbd"/><stop offset="0.316" stop-color="#403abd"/><stop offset="0.342" stop-color="#5237bd"/><stop offset="0.368" stop-color="#6433bd"/><stop offset="0.395" stop-color="#772fbd"/><stop offset="0.421" stop-color="#8a2bbd"/><stop offset="0.447" stop-color="#9925b8"/><stop offset="0.474" stop-color="#991ca3"/><stop offset="0.5" stop-color="#991592"/><stop offset="0.526" stop-color="#990e83"/><stop offset="0.553" stop-color="#990877"/><stop offset="0.579" stop-color="#99016c"/><stop offset="0.605" stop-color="#990062"/><stop offset="0.632" stop-color="#99005a"/><stop offset="0.658" stop-color="#990052"/><stop offset="0.684" stop-color="#99004b"/><stop offset="0.711" stop-color="#990045"/><stop offset="0.737" stop-color="#990040"/><stop offset="0.763" stop-color="#99003a"/><stop offset="0.789" stop-color="#990035"/><stop offset="0.816" stop-color="#990031"/><stop offset="0.842" stop-color="#99002d"/><stop offset="0.868" stop-color="#990029"/><stop offset="0.895" stop-color="#990025"/><stop offset="0.921" stop-color="#990022"/><stop offset="0.947" stop-color="#99001e"/><stop offset="0.974" stop-color="#99001b"/><stop offset="1" stop-color="#990018"/></linearGradient><linearGradient id="o60" gradientUnits="userSpaceOnUse" x1="642" y1="0" x2="927" y2="0"><stop offset="0" stop-color="#0050bd"/><stop offset="0.028" stop-color="#004ebd"/><stop offset="0.056" stop-color="#004cbd"/><stop offset="0.083" stop-color="#004bbd"/><stop offset="0.111" stop-color="#0048bd"/><stop offset="0.139" stop-color="#0046bd"/><stop offset="0.167" stop-color="#0044bd"/><stop offset="0.194" stop-color="#0041bd"/><stop offset="0.222" stop-color="#003fbd"/><stop offset="0.25" stop-color="#0f3cbd"/><stop offset="0.278" stop-color="#2339bd"/><stop offset="0.306" stop-color="#3536bd"/><stop offset="0.333" stop-color="#4732bd"/><stop offset="0.361" stop-color="#592fbd"/><stop offset="0.389" stop-color="#6b2bbd"/><stop offset="0.417" stop-color="#7d26bd"/><stop offset="0.444" stop-color="#9021bd"/><stop offset="0.472" stop-color="#991ab1"/><stop offset="0.5" stop-color="#99129e"/><stop offset="0.528" stop-color="#990b8d"/><stop offset="0.556" stop-color="#990480"/><stop offset="0.583" stop-color="#990074"/><stop offset="0.611" stop-color="#990069"/><stop offset="0.639" stop-color="#990060"/><stop offset="0.667" stop-color="#990058"/><stop offset="0.694" stop-color="#990051"/><stop offset="0.722" stop-color="#99004a"/><stop offset="0.75" stop-color="#990044"/><stop offset="0.778" stop-color="#99003f"/><stop offset="0.806" stop-color="#99003a"/><stop offset="0.833" stop-color="#990035"/><stop offset="0.861" stop-color="#990031"/><stop offset="0.889" stop-color="#99002c"/><stop offset="0.917" stop-color="#990029"/><stop offset="0.944" stop-color="#990025"/><stop offset="0.972" stop-color="#990022"/><stop offset="1" stop-color="#99001e"/></linearGradient><linearGradient id="o61" gradientUnits="userSpaceOnUse" x1="643" y1="0" x2="916" y2="0"><stop offset="0" stop-color="#004bbd"/><stop offset="0.029" stop-color="#0049bd"/><stop offset="0.057" stop-color="#0047bd"/><stop offset="0.086" stop-color="#0045bd"/><stop offset="0.114" stop-color="#0043bd"/><stop offset="0.143" stop-color="#0041bd"/><stop offset="0.171" stop-color="#003ebd"/><stop offset="0.2" stop-color="#003cbd"/><stop offset="0.229" stop-color="#0039bd"/><stop offset="0.257" stop-color="#1236bd"/><stop offset="0.286" stop-color="#2533bd"/><stop offset="0.314" stop-color="#372fbd"/><stop offset="0.343" stop-color="#482cbd"/><stop offset="0.371" stop-color="#5928bd"/><stop offset="0.4" stop-color="#6a24bd"/><stop offset="0.429" stop-color="#7b1fbd"/><stop offset="0.457" stop-color="#8d1abd"/><stop offset="0.486" stop-color="#9914b5"/><stop offset="0.514" stop-color="#990ca1"/><stop offset="0.543" stop-color="#990491"/><stop offset="0.571" stop-color="#990083"/><stop offset="0.6" stop-color="#990077"/><stop offset="0.629" stop-color="#99006d"/><stop offset="0.657" stop-color="#990064"/><stop offset="0.686" stop-color="#99005c"/><stop offset="0.714" stop-color="#990054"/><stop offset="0.743" stop-color="#99004e"/><stop offset="0.771" stop-color="#990048"/><stop offset="0.8" stop-color="#990042"/><stop offset="0.829" stop-color="#99003d"/><stop offset="0.857" stop-color="#990038"/><stop offset="0.886" stop-color="#990034"/><stop offset="0.914" stop-color="#990030"/><stop offset="0.943" stop-color="#99002c"/><stop offset="0.971" stop-color="#990028"/><stop offset="1" stop-color="#990025"/></linearGradient><linearGradient id="o62" gradientUnits="userSpaceOnUse" x1="645" y1="0" x2="904" y2="0"><stop offset="0" stop-color="#0046bd"/><stop offset="0.03" stop-color="#0044bd"/><stop offset="0.061" stop-color="#0042bd"/><stop offset="0.091" stop-color="#003fbd"/><stop offset="0.121" stop-color="#003dbd"/><stop offset="0.152" stop-color="#003bbd"/><stop offset="0.182" stop-color="#0038bd"/><stop offset="0.212" stop-color="#0035bd"/><stop offset="0.242" stop-color="#0732bd"/><stop offset="0.273" stop-color="#1b2fbd"/><stop offset="0.303" stop-color="#2d2cbd"/><stop offset="0.333" stop-color="#3e28bd"/><stop offset="0.364" stop-color="#4f24bd"/><stop offset="0.394" stop-color="#5f20bd"/><stop offset="0.424" stop-color="#701bbd"/><stop offset="0.455" stop-color="#8216bd"/><stop offset="0.485" stop-color="#9310bd"/><stop offset="0.515" stop-color="#9908ae"/><stop offset="0.545" stop-color="#99009c"/><stop offset="0.576" stop-color="#99008d"/><stop offset="0.606" stop-color="#990080"/><stop offset="0.636" stop-color="#990075"/><stop offset="0.667" stop-color="#99006b"/><stop offset="0.697" stop-color="#990062"/><stop offset="0.727" stop-color="#99005a"/><stop offset="0.758" stop-color="#990053"/><stop offset="0.788" stop-color="#99004d"/><stop offset="0.818" stop-color="#990047"/><stop offset="0.848" stop-color="#990042"/><stop offset="0.879" stop-color="#99003d"/><stop offset="0.909" stop-color="#990038"/><stop offset="0.939" stop-color="#990034"/><stop offset="0.97" stop-color="#990030"/><stop offset="1" stop-color="#99002c"/></linearGradient><linearGradient id="o63" gradientUnits="userSpaceOnUse" x1="647" y1="0" x2="893" y2="0"><stop offset="0" stop-color="#0040bd"/><stop offset="0.032" stop-color="#003ebd"/><stop offset="0.065" stop-color="#003cbd"/><stop offset="0.097" stop-color="#003abd"/><stop offset="0.129" stop-color="#0037bd"/><stop offset="0.161" stop-color="#0034bd"/><stop offset="0.194" stop-color="#0032bd"/><stop offset="0.226" stop-color="#002fbd"/><stop offset="0.258" stop-color="#122bbd"/><stop offset="0.29" stop-color="#2428bd"/><stop offset="0.323" stop-color="#3524bd"/><stop offset="0.355" stop-color="#4620bd"/><stop offset="0.387" stop-color="#561cbd"/><stop offset="0.419" stop-color="#6717bd"/><stop offset="0.452" stop-color="#7811bd"/><stop offset="0.484" stop-color="#890bbd"/><stop offset="0.516" stop-color="#9903bb"/><stop offset="0.548" stop-color="#9900a7"/><stop offset="0.581" stop-color="#990096"/><stop offset="0.613" stop-color="#990088"/><stop offset="0.645" stop-color="#99007c"/><stop offset="0.677" stop-color="#990072"/><stop offset="0.71" stop-color="#990068"/><stop offset="0.742" stop-color="#990060"/><stop offset="0.774" stop-color="#990058"/><stop offset="0.806" stop-color="#990052"/><stop offset="0.839" stop-color="#99004b"/><stop offset="0.871" stop-color="#990046"/><stop offset="0.903" stop-color="#990040"/><stop offset="0.935" stop-color="#99003c"/><stop offset="0.968" stop-color="#990037"/><stop offset="1" stop-color="#990033"/></linearGradient><linearGradient id="o64" gradientUnits="userSpaceOnUse" x1="649" y1="0" x2="881" y2="0"><stop offset="0" stop-color="#003bbd"/><stop offset="0.034" stop-color="#0039bd"/><stop offset="0.069" stop-color="#0036bd"/><stop offset="0.103" stop-color="#0034bd"/><stop offset="0.138" stop-color="#0031bd"/><stop offset="0.172" stop-color="#002ebd"/><stop offset="0.207" stop-color="#002bbd"/><stop offset="0.241" stop-color="#0728bd"/><stop offset="0.276" stop-color="#1b24bd"/><stop offset="0.31" stop-color="#2c21bd"/><stop offset="0.345" stop-color="#3d1cbd"/><stop offset="0.379" stop-color="#4d18bd"/><stop offset="0.414" stop-color="#5d13bd"/><stop offset="0.448" stop-color="#6d0dbd"/><stop offset="0.483" stop-color="#7e06bd"/><stop offset="0.517" stop-color="#8f00bd"/><stop offset="0.552" stop-color="#9900b3"/><stop offset="0.586" stop-color="#9900a1"/><stop offset="0.621" stop-color="#990092"/><stop offset="0.655" stop-color="#990085"/><stop offset="0.69" stop-color="#990079"/><stop offset="0.724" stop-color="#99006f"/><stop offset="0.759" stop-color="#990066"/><stop offset="0.793" stop-color="#99005e"/><stop offset="0.828" stop-color="#990057"/><stop offset="0.862" stop-color="#990050"/><stop offset="0.897" stop-color="#99004a"/><stop offset="0.931" stop-color="#990045"/><stop offset="0.966" stop-color="#990040"/><stop offset="1" stop-color="#99003b"/></linearGradient><linearGradient id="o65" gradientUnits="userSpaceOnUse" x1="651" y1="0" x2="870" y2="0"><stop offset="0" stop-color="#0036bd"/><stop offset="0.036" stop-color="#0034bd"/><stop offset="0.071" stop-color="#0031bd"/><stop offset="0.107" stop-color="#002ebd"/><stop offset="0.143" stop-color="#002cbd"/><stop offset="0.179" stop-color="#0029bd"/><stop offset="0.214" stop-color="#0025bd"/><stop offset="0.25" stop-color="#0d22bd"/><stop offset="0.286" stop-color="#1f1ebd"/><stop offset="0.321" stop-color="#2f1abd"/><stop offset="0.357" stop-color="#3f16bd"/><stop offset="0.393" stop-color="#4e11bd"/><stop offset="0.429" stop-color="#5e0cbd"/><stop offset="0.464" stop-color="#6d05bd"/><stop offset="0.5" stop-color="#7d00bd"/><stop offset="0.536" stop-color="#8e00bd"/><stop offset="0.571" stop-color="#9900b6"/><stop offset="0.607" stop-color="#9900a4"/><stop offset="0.643" stop-color="#990095"/><stop offset="0.679" stop-color="#990088"/><stop offset="0.714" stop-color="#99007d"/><stop offset="0.75" stop-color="#990073"/><stop offset="0.786" stop-color="#99006a"/><stop offset="0.821" stop-color="#990062"/><stop offset="0.857" stop-color="#99005a"/><stop offset="0.893" stop-color="#990054"/><stop offset="0.929" stop-color="#99004e"/><stop offset="0.964" stop-color="#990048"/><stop offset="1" stop-color="#990043"/></linearGradient><linearGradient id="o66" gradientUnits="userSpaceOnUse" x1="652" y1="0" x2="859" y2="0"><stop offset="0" stop-color="#0031bd"/><stop offset="0.038" stop-color="#002ebd"/><stop offset="0.077" stop-color="#002cbd"/><stop offset="0.115" stop-color="#0029bd"/><stop offset="0.154" stop-color="#0026bd"/><stop offset="0.192" stop-color="#0023bd"/><stop offset="0.231" stop-color="#001fbd"/><stop offset="0.269" stop-color="#151bbd"/><stop offset="0.308" stop-color="#2617bd"/><stop offset="0.346" stop-color="#3513bd"/><stop offset="0.385" stop-color="#450ebd"/><stop offset="0.423" stop-color="#5408bd"/><stop offset="0.462" stop-color="#6400bd"/><stop offset="0.5" stop-color="#7300bd"/><stop offset="0.538" stop-color="#8300bd"/><stop offset="0.577" stop-color="#9400bd"/><stop offset="0.615" stop-color="#9900af"/><stop offset="0.654" stop-color="#99009f"/><stop offset="0.692" stop-color="#990090"/><stop offset="0.731" stop-color="#990084"/><stop offset="0.769" stop-color="#990079"/><stop offset="0.808" stop-color="#99006f"/><stop offset="0.846" stop-color="#990067"/><stop offset="0.885" stop-color="#99005f"/><stop offset="0.923" stop-color="#990058"/><stop offset="0.962" stop-color="#990052"/><stop offset="1" stop-color="#99004c"/></linearGradient><linearGradient id="o67" gradientUnits="userSpaceOnUse" x1="654" y1="0" x2="847" y2="0"><stop offset="0" stop-color="#002cbd"/><stop offset="0.04" stop-color="#0029bd"/><stop offset="0.08" stop-color="#0026bd"/><stop offset="0.12" stop-color="#0023bd"/><stop offset="0.16" stop-color="#0020bd"/><stop offset="0.2" stop-color="#001dbd"/><stop offset="0.24" stop-color="#0619bd"/><stop offset="0.28" stop-color="#1815bd"/><stop offset="0.32" stop-color="#2811bd"/><stop offset="0.36" stop-color="#370cbd"/><stop offset="0.4" stop-color="#4606bd"/><stop offset="0.44" stop-color="#5400bd"/><stop offset="0.48" stop-color="#6300bd"/><stop offset="0.52" stop-color="#7200bd"/><stop offset="0.56" stop-color="#8100bd"/><stop offset="0.6" stop-color="#9000bd"/><stop offset="0.64" stop-color="#9900b5"/><stop offset="0.68" stop-color="#9900a4"/><stop offset="0.72" stop-color="#990096"/><stop offset="0.76" stop-color="#990089"/><stop offset="0.8" stop-color="#99007e"/><stop offset="0.84" stop-color="#990075"/><stop offset="0.88" stop-color="#99006c"/><stop offset="0.92" stop-color="#990064"/><stop offset="0.96" stop-color="#99005d"/><stop offset="1" stop-color="#990057"/></linearGradient><linearGradient id="o68" gradientUnits="userSpaceOnUse" x1="656" y1="0" x2="836" y2="0"><stop offset="0" stop-color="#0026bd"/><stop offset="0.043" stop-color="#0024bd"/><stop offset="0.087" stop-color="#0021bd"/><stop offset="0.13" stop-color="#001dbd"/><stop offset="0.174" stop-color="#001abd"/><stop offset="0.217" stop-color="#0016bd"/><stop offset="0.261" stop-color="#1012bd"/><stop offset="0.304" stop-color="#200ebd"/><stop offset="0.348" stop-color="#2f09bd"/><stop offset="0.391" stop-color="#3e02bd"/><stop offset="0.435" stop-color="#4d00bd"/><stop offset="0.478" stop-color="#5b00bd"/><stop offset="0.522" stop-color="#6a00bd"/><stop offset="0.565" stop-color="#7800bd"/><stop offset="0.609" stop-color="#8700bd"/><stop offset="0.652" stop-color="#9700bd"/><stop offset="0.696" stop-color="#9900ad"/><stop offset="0.739" stop-color="#99009e"/><stop offset="0.783" stop-color="#990090"/><stop offset="0.826" stop-color="#990085"/><stop offset="0.87" stop-color="#99007a"/><stop offset="0.913" stop-color="#990071"/><stop offset="0.957" stop-color="#990069"/><stop offset="1" stop-color="#990061"/></linearGradient><linearGradient id="o69" gradientUnits="userSpaceOnUse" x1="658" y1="0" x2="825" y2="0"><stop offset="0" stop-color="#0021bd"/><stop offset="0.048" stop-color="#001ebd"/><stop offset="0.095" stop-color="#001bbd"/><stop offset="0.143" stop-color="#0017bd"/><stop offset="0.19" stop-color="#0013bd"/><stop offset="0.238" stop-color="#070fbd"/><stop offset="0.286" stop-color="#190abd"/><stop offset="0.333" stop-color="#2805bd"/><stop offset="0.381" stop-color="#3700bd"/><stop offset="0.429" stop-color="#4500bd"/><stop offset="0.476" stop-color="#5400bd"/><stop offset="0.524" stop-color="#6200bd"/><stop offset="0.571" stop-color="#7100bd"/><stop offset="0.619" stop-color="#7f00bd"/><stop offset="0.667" stop-color="#8f00bd"/><stop offset="0.714" stop-color="#9900b7"/><stop offset="0.762" stop-color="#9900a6"/><stop offset="0.81" stop-color="#990097"/><stop offset="0.857" stop-color="#99008b"/><stop offset="0.905" stop-color="#990080"/><stop offset="0.952" stop-color="#990076"/><stop offset="1" stop-color="#99006d"/></linearGradient><linearGradient id="o70" gradientUnits="userSpaceOnUse" x1="660" y1="0" x2="813" y2="0"><stop offset="0" stop-color="#001cbd"/><stop offset="0.05" stop-color="#0019bd"/><stop offset="0.1" stop-color="#0015bd"/><stop offset="0.15" stop-color="#0011bd"/><stop offset="0.2" stop-color="#000dbd"/><stop offset="0.25" stop-color="#0b09bd"/><stop offset="0.3" stop-color="#1b03bd"/><stop offset="0.35" stop-color="#2a00bd"/><stop offset="0.4" stop-color="#3800bd"/><stop offset="0.45" stop-color="#4500bd"/><stop offset="0.5" stop-color="#5300bd"/><stop offset="0.55" stop-color="#6000bd"/><stop offset="0.6" stop-color="#6e00bd"/><stop offset="0.65" stop-color="#7c00bd"/><stop offset="0.7" stop-color="#8a00bd"/><stop offset="0.75" stop-color="#9900bd"/><stop offset="0.8" stop-color="#9900ac"/><stop offset="0.85" stop-color="#99009e"/><stop offset="0.9" stop-color="#990091"/><stop offset="0.95" stop-color="#990086"/><stop offset="1" stop-color="#99007c"/></linearGradient><linearGradient id="o71" gradientUnits="userSpaceOnUse" x1="662" y1="0" x2="802" y2="0"><stop offset="0" stop-color="#0016bd"/><stop offset="0.056" stop-color="#0013bd"/><stop offset="0.111" stop-color="#000fbd"/><stop offset="0.167" stop-color="#000abd"/><stop offset="0.222" stop-color="#0105bd"/><stop offset="0.278" stop-color="#1400bd"/><stop offset="0.333" stop-color="#2300bd"/><stop offset="0.389" stop-color="#3100bd"/><stop offset="0.444" stop-color="#3f00bd"/><stop offset="0.5" stop-color="#4c00bd"/><stop offset="0.556" stop-color="#5900bd"/><stop offset="0.611" stop-color="#6700bd"/><stop offset="0.667" stop-color="#7500bd"/><stop offset="0.722" stop-color="#8300bd"/><stop offset="0.778" stop-color="#9100bd"/><stop offset="0.833" stop-color="#9900b5"/><stop offset="0.889" stop-color="#9900a5"/><stop offset="0.944" stop-color="#990098"/><stop offset="1" stop-color="#99008c"/></linearGradient><linearGradient id="o72" gradientUnits="userSpaceOnUse" x1="665" y1="0" x2="791" y2="0"><stop offset="0" stop-color="#0010bd"/><stop offset="0.062" stop-color="#000cbd"/><stop offset="0.125" stop-color="#0007bd"/><stop offset="0.188" stop-color="#0001bd"/><stop offset="0.25" stop-color="#0e00bd"/><stop offset="0.312" stop-color="#1d00bd"/><stop offset="0.375" stop-color="#2b00bd"/><stop offset="0.438" stop-color="#3900bd"/><stop offset="0.5" stop-color="#4600bd"/><stop offset="0.562" stop-color="#5400bd"/><stop offset="0.625" stop-color="#6100bd"/><stop offset="0.688" stop-color="#6f00bd"/><stop offset="0.75" stop-color="#7c00bd"/><stop offset="0.812" stop-color="#8a00bd"/><stop offset="0.875" stop-color="#9900bd"/><stop offset="0.938" stop-color="#9900ac"/><stop offset="1" stop-color="#99009e"/></linearGradient><linearGradient id="o73" gradientUnits="userSpaceOnUse" x1="667" y1="0" x2="779" y2="0"><stop offset="0" stop-color="#0009bd"/><stop offset="0.071" stop-color="#0004bd"/><stop offset="0.143" stop-color="#0000bd"/><stop offset="0.214" stop-color="#0400bd"/><stop offset="0.286" stop-color="#1500bd"/><stop offset="0.357" stop-color="#2400bd"/><stop offset="0.429" stop-color="#3200bd"/><stop offset="0.5" stop-color="#3f00bd"/><stop offset="0.571" stop-color="#4c00bd"/><stop offset="0.643" stop-color="#5a00bd"/><stop offset="0.714" stop-color="#6700bd"/><stop offset="0.786" stop-color="#7500bd"/><stop offset="0.857" stop-color="#8200bd"/><stop offset="0.929" stop-color="#9100bd"/><stop offset="1" stop-color="#9900b6"/></linearGradient><linearGradient id="o74" gradientUnits="userSpaceOnUse" x1="670" y1="0" x2="768" y2="0"><stop offset="0" stop-color="#0001bd"/><stop offset="0.077" stop-color="#0000bd"/><stop offset="0.154" stop-color="#0000bd"/><stop offset="0.231" stop-color="#0b00bd"/><stop offset="0.308" stop-color="#1a00bd"/><stop offset="0.385" stop-color="#2700bd"/><stop offset="0.462" stop-color="#3400bd"/><stop offset="0.538" stop-color="#4000bd"/><stop offset="0.615" stop-color="#4c00bd"/><stop offset="0.692" stop-color="#5900bd"/><stop offset="0.769" stop-color="#6500bd"/><stop offset="0.846" stop-color="#7100bd"/><stop offset="0.923" stop-color="#7e00bd"/><stop offset="1" stop-color="#8b00bd"/></linearGradient><linearGradient id="o75" gradientUnits="userSpaceOnUse" x1="673" y1="0" x2="756" y2="0"><stop offset="0" stop-color="#0000bd"/><stop offset="0.091" stop-color="#0000bd"/><stop offset="0.182" stop-color="#0400bd"/><stop offset="0.273" stop-color="#1400bd"/><stop offset="0.364" stop-color="#2100bd"/><stop offset="0.455" stop-color="#2e00bd"/><stop offset="0.545" stop-color="#3a00bd"/><stop offset="0.636" stop-color="#4600bd"/><stop offset="0.727" stop-color="#5200bd"/><stop offset="0.818" stop-color="#5e00bd"/><stop offset="0.909" stop-color="#6b00bd"/><stop offset="1" stop-color="#7700bd"/></linearGradient><linearGradient id="o76" gradientUnits="userSpaceOnUse" x1="676" y1="0" x2="745" y2="0"><stop offset="0" stop-color="#0000bd"/><stop offset="0.111" stop-color="#0000bd"/><stop offset="0.222" stop-color="#0e00bd"/><stop offset="0.333" stop-color="#1c00bd"/><stop offset="0.444" stop-color="#2900bd"/><stop offset="0.556" stop-color="#3500bd"/><stop offset="0.667" stop-color="#4100bd"/><stop offset="0.778" stop-color="#4d00bd"/><stop offset="0.889" stop-color="#5900bd"/><stop offset="1" stop-color="#6500bd"/></linearGradient><linearGradient id="o77" gradientUnits="userSpaceOnUse" x1="680" y1="0" x2="734" y2="0"><stop offset="0" stop-color="#0000bd"/><stop offset="0.143" stop-color="#0a00bd"/><stop offset="0.286" stop-color="#1800bd"/><stop offset="0.429" stop-color="#2500bd"/><stop offset="0.571" stop-color="#3100bd"/><stop offset="0.714" stop-color="#3d00bd"/><stop offset="0.857" stop-color="#4900bd"/><stop offset="1" stop-color="#5500bd"/></linearGradient><linearGradient id="o78" gradientUnits="userSpaceOnUse" x1="686" y1="0" x2="722" y2="0"><stop offset="0" stop-color="#0600bd"/><stop offset="0.2" stop-color="#1400bd"/><stop offset="0.4" stop-color="#2100bd"/><stop offset="0.6" stop-color="#2c00bd"/><stop offset="0.8" stop-color="#3800bd"/><stop offset="1" stop-color="#4300bd"/></linearGradient><linearGradient id="o79" gradientUnits="userSpaceOnUse" x1="693" y1="0" x2="711" y2="0"><stop offset="0" stop-color="#1400bd"/><stop offset="0.333" stop-color="#1e00bd"/><stop offset="0.667" stop-color="#2800bd"/><stop offset="1" stop-color="#3200bd"/></linearGradient><linearGradient id="i0" gradientUnits="userSpaceOnUse" x1="754" y1="0" x2="776" y2="0"><stop offset="0" stop-color="#00ff00"/><stop offset="0.333" stop-color="#00ff00"/><stop offset="0.667" stop-color="#0eff00"/><stop offset="1" stop-color="#27ff00"/></linearGradient><linearGradient id="i1" gradientUnits="userSpaceOnUse" x1="752" y1="0" x2="783" y2="0"><stop offset="0" stop-color="#00ff0a"/><stop offset="0.25" stop-color="#00ff00"/><stop offset="0.5" stop-color="#10ff00"/><stop offset="0.75" stop-color="#2aff00"/><stop offset="1" stop-color="#41ff00"/></linearGradient><linearGradient id="i2" gradientUnits="userSpaceOnUse" x1="751" y1="0" x2="789" y2="0"><stop offset="0" stop-color="#00ff12"/><stop offset="0.2" stop-color="#00ff0a"/><stop offset="0.4" stop-color="#10ff00"/><stop offset="0.6" stop-color="#2bff00"/><stop offset="0.8" stop-color="#42ff00"/><stop offset="1" stop-color="#58ff00"/></linearGradient><linearGradient id="i3" gradientUnits="userSpaceOnUse" x1="749" y1="0" x2="796" y2="0"><stop offset="0" stop-color="#00ff1a"/><stop offset="0.167" stop-color="#00ff13"/><stop offset="0.333" stop-color="#10ff0b"/><stop offset="0.5" stop-color="#2cff00"/><stop offset="0.667" stop-color="#44ff00"/><stop offset="0.833" stop-color="#5bff00"/><stop offset="1" stop-color="#72ff00"/></linearGradient><linearGradient id="i4" gradientUnits="userSpaceOnUse" x1="748" y1="0" x2="802" y2="0"><stop offset="0" stop-color="#00ff21"/><stop offset="0.143" stop-color="#00ff1b"/><stop offset="0.286" stop-color="#12ff14"/><stop offset="0.429" stop-color="#2dff0c"/><stop offset="0.571" stop-color="#45ff00"/><stop offset="0.714" stop-color="#5dff00"/><stop offset="0.857" stop-color="#74ff00"/><stop offset="1" stop-color="#8aff00"/></linearGradient><linearGradient id="i5" gradientUnits="userSpaceOnUse" x1="747" y1="0" x2="809" y2="0"><stop offset="0" stop-color="#00ff29"/><stop offset="0.125" stop-color="#00ff22"/><stop offset="0.25" stop-color="#14ff1c"/><stop offset="0.375" stop-color="#30ff14"/><stop offset="0.5" stop-color="#49ff0c"/><stop offset="0.625" stop-color="#60ff00"/><stop offset="0.75" stop-color="#78ff00"/><stop offset="0.875" stop-color="#8fff00"/><stop offset="1" stop-color="#a7ff00"/></linearGradient><linearGradient id="i6" gradientUnits="userSpaceOnUse" x1="745" y1="0" x2="816" y2="0"><stop offset="0" stop-color="#00ff30"/><stop offset="0.111" stop-color="#00ff2b"/><stop offset="0.222" stop-color="#13ff24"/><stop offset="0.333" stop-color="#30ff1d"/><stop offset="0.444" stop-color="#4aff15"/><stop offset="0.556" stop-color="#63ff0c"/><stop offset="0.667" stop-color="#7bff00"/><stop offset="0.778" stop-color="#94ff00"/><stop offset="0.889" stop-color="#acff00"/><stop offset="1" stop-color="#c5ff00"/></linearGradient><linearGradient id="i7" gradientUnits="userSpaceOnUse" x1="744" y1="0" x2="822" y2="0"><stop offset="0" stop-color="#00ff38"/><stop offset="0.1" stop-color="#00ff32"/><stop offset="0.2" stop-color="#15ff2c"/><stop offset="0.3" stop-color="#32ff26"/><stop offset="0.4" stop-color="#4cff1e"/><stop offset="0.5" stop-color="#65ff17"/><stop offset="0.6" stop-color="#7dff0d"/><stop offset="0.7" stop-color="#96ff01"/><stop offset="0.8" stop-color="#afff00"/><stop offset="0.9" stop-color="#c8ff00"/><stop offset="1" stop-color="#e2ff00"/></linearGradient><linearGradient id="i8" gradientUnits="userSpaceOnUse" x1="742" y1="0" x2="829" y2="0"><stop offset="0" stop-color="#00ff40"/><stop offset="0.091" stop-color="#00ff3a"/><stop offset="0.182" stop-color="#14ff34"/><stop offset="0.273" stop-color="#32ff2e"/><stop offset="0.364" stop-color="#4dff27"/><stop offset="0.455" stop-color="#67ff20"/><stop offset="0.545" stop-color="#80ff18"/><stop offset="0.636" stop-color="#9aff0e"/><stop offset="0.727" stop-color="#b4ff01"/><stop offset="0.818" stop-color="#ceff00"/><stop offset="0.909" stop-color="#e9ff00"/><stop offset="1" stop-color="#fff900"/></linearGradient><linearGradient id="i9" gradientUnits="userSpaceOnUse" x1="741" y1="0" x2="835" y2="0"><stop offset="0" stop-color="#00ff47"/><stop offset="0.083" stop-color="#00ff42"/><stop offset="0.167" stop-color="#16ff3c"/><stop offset="0.25" stop-color="#34ff37"/><stop offset="0.333" stop-color="#4fff30"/><stop offset="0.417" stop-color="#69ff29"/><stop offset="0.5" stop-color="#83ff22"/><stop offset="0.583" stop-color="#9dff19"/><stop offset="0.667" stop-color="#b8ff0f"/><stop offset="0.75" stop-color="#d2ff02"/><stop offset="0.833" stop-color="#eeff00"/><stop offset="0.917" stop-color="#fff400"/><stop offset="1" stop-color="#ffdc00"/></linearGradient><linearGradient id="i10" gradientUnits="userSpaceOnUse" x1="739" y1="0" x2="842" y2="0"><stop offset="0" stop-color="#00ff4f"/><stop offset="0.077" stop-color="#00ff4a"/><stop offset="0.154" stop-color="#15ff45"/><stop offset="0.231" stop-color="#34ff3f"/><stop offset="0.308" stop-color="#50ff39"/><stop offset="0.385" stop-color="#6bff33"/><stop offset="0.462" stop-color="#86ff2b"/><stop offset="0.538" stop-color="#a1ff23"/><stop offset="0.615" stop-color="#bcff1a"/><stop offset="0.692" stop-color="#d8ff10"/><stop offset="0.769" stop-color="#f5ff02"/><stop offset="0.846" stop-color="#ffed00"/><stop offset="0.923" stop-color="#ffd500"/><stop offset="1" stop-color="#ffc100"/></linearGradient><linearGradient id="i11" gradientUnits="userSpaceOnUse" x1="738" y1="0" x2="849" y2="0"><stop offset="0" stop-color="#00ff57"/><stop offset="0.071" stop-color="#00ff52"/><stop offset="0.143" stop-color="#17ff4d"/><stop offset="0.214" stop-color="#37ff48"/><stop offset="0.286" stop-color="#54ff42"/><stop offset="0.357" stop-color="#6fff3b"/><stop offset="0.429" stop-color="#8bff35"/><stop offset="0.5" stop-color="#a7ff2d"/><stop offset="0.571" stop-color="#c3ff25"/><stop offset="0.643" stop-color="#e0ff1b"/><stop offset="0.714" stop-color="#fdff10"/><stop offset="0.786" stop-color="#ffe501"/><stop offset="0.857" stop-color="#ffce00"/><stop offset="0.929" stop-color="#ffba00"/><stop offset="1" stop-color="#ffaa00"/></linearGradient><linearGradient id="i12" gradientUnits="userSpaceOnUse" x1="736" y1="0" x2="855" y2="0"><stop offset="0" stop-color="#00ff60"/><stop offset="0.067" stop-color="#00ff5b"/><stop offset="0.133" stop-color="#15ff56"/><stop offset="0.2" stop-color="#36ff51"/><stop offset="0.267" stop-color="#54ff4b"/><stop offset="0.333" stop-color="#70ff45"/><stop offset="0.4" stop-color="#8cff3f"/><stop offset="0.467" stop-color="#a9ff38"/><stop offset="0.533" stop-color="#c6ff30"/><stop offset="0.6" stop-color="#e3ff27"/><stop offset="0.667" stop-color="#fffc1d"/><stop offset="0.733" stop-color="#ffe010"/><stop offset="0.8" stop-color="#ffca02"/><stop offset="0.867" stop-color="#ffb600"/><stop offset="0.933" stop-color="#ffa600"/><stop offset="1" stop-color="#ff9700"/></linearGradient><linearGradient id="i13" gradientUnits="userSpaceOnUse" x1="735" y1="0" x2="862" y2="0"><stop offset="0" stop-color="#00ff68"/><stop offset="0.062" stop-color="#00ff63"/><stop offset="0.125" stop-color="#18ff5f"/><stop offset="0.188" stop-color="#39ff5a"/><stop offset="0.25" stop-color="#57ff54"/><stop offset="0.312" stop-color="#74ff4f"/><stop offset="0.375" stop-color="#92ff48"/><stop offset="0.438" stop-color="#afff42"/><stop offset="0.5" stop-color="#cdff3a"/><stop offset="0.562" stop-color="#ebff32"/><stop offset="0.625" stop-color="#fff327"/><stop offset="0.688" stop-color="#ffd91a"/><stop offset="0.75" stop-color="#ffc30e"/><stop offset="0.812" stop-color="#ffb001"/><stop offset="0.875" stop-color="#ff9f00"/><stop offset="0.938" stop-color="#ff9100"/><stop offset="1" stop-color="#ff8500"/></linearGradient><linearGradient id="i14" gradientUnits="userSpaceOnUse" x1="733" y1="0" x2="869" y2="0"><stop offset="0" stop-color="#00ff71"/><stop offset="0.059" stop-color="#00ff6d"/><stop offset="0.118" stop-color="#16ff68"/><stop offset="0.176" stop-color="#39ff63"/><stop offset="0.235" stop-color="#58ff5e"/><stop offset="0.294" stop-color="#76ff59"/><stop offset="0.353" stop-color="#95ff53"/><stop offset="0.412" stop-color="#b3ff4c"/><stop offset="0.471" stop-color="#d2ff45"/><stop offset="0.529" stop-color="#f2ff3d"/><stop offset="0.588" stop-color="#ffec31"/><stop offset="0.647" stop-color="#ffd224"/><stop offset="0.706" stop-color="#ffbc18"/><stop offset="0.765" stop-color="#ffaa0d"/><stop offset="0.824" stop-color="#ff9a01"/><stop offset="0.882" stop-color="#ff8c00"/><stop offset="0.941" stop-color="#ff8000"/><stop offset="1" stop-color="#ff7500"/></linearGradient><linearGradient id="i15" gradientUnits="userSpaceOnUse" x1="732" y1="0" x2="875" y2="0"><stop offset="0" stop-color="#00ff7a"/><stop offset="0.056" stop-color="#00ff76"/><stop offset="0.111" stop-color="#19ff71"/><stop offset="0.167" stop-color="#3bff6d"/><stop offset="0.222" stop-color="#5bff68"/><stop offset="0.278" stop-color="#7aff63"/><stop offset="0.333" stop-color="#99ff5d"/><stop offset="0.389" stop-color="#b8ff57"/><stop offset="0.444" stop-color="#d8ff50"/><stop offset="0.5" stop-color="#f9ff49"/><stop offset="0.556" stop-color="#ffe63b"/><stop offset="0.611" stop-color="#ffcc2d"/><stop offset="0.667" stop-color="#ffb721"/><stop offset="0.722" stop-color="#ffa517"/><stop offset="0.778" stop-color="#ff950d"/><stop offset="0.833" stop-color="#ff8802"/><stop offset="0.889" stop-color="#ff7c00"/><stop offset="0.944" stop-color="#ff7100"/><stop offset="1" stop-color="#ff6700"/></linearGradient><linearGradient id="i16" gradientUnits="userSpaceOnUse" x1="730" y1="0" x2="882" y2="0"><stop offset="0" stop-color="#00ff83"/><stop offset="0.053" stop-color="#00ff80"/><stop offset="0.105" stop-color="#17ff7c"/><stop offset="0.158" stop-color="#3bff77"/><stop offset="0.211" stop-color="#5cff73"/><stop offset="0.263" stop-color="#7cff6e"/><stop offset="0.316" stop-color="#9cff68"/><stop offset="0.368" stop-color="#bcff63"/><stop offset="0.421" stop-color="#deff5c"/><stop offset="0.474" stop-color="#fffe55"/><stop offset="0.526" stop-color="#ffdf44"/><stop offset="0.579" stop-color="#ffc636"/><stop offset="0.632" stop-color="#ffb12a"/><stop offset="0.684" stop-color="#ff9f1f"/><stop offset="0.737" stop-color="#ff9015"/><stop offset="0.789" stop-color="#ff820c"/><stop offset="0.842" stop-color="#ff7601"/><stop offset="0.895" stop-color="#ff6c00"/><stop offset="0.947" stop-color="#ff6200"/><stop offset="1" stop-color="#ff5a00"/></linearGradient><linearGradient id="i17" gradientUnits="userSpaceOnUse" x1="729" y1="0" x2="888" y2="0"><stop offset="0" stop-color="#00ff8d"/><stop offset="0.05" stop-color="#00ff89"/><stop offset="0.1" stop-color="#1aff86"/><stop offset="0.15" stop-color="#3eff82"/><stop offset="0.2" stop-color="#60ff7d"/><stop offset="0.25" stop-color="#80ff79"/><stop offset="0.3" stop-color="#a1ff74"/><stop offset="0.35" stop-color="#c2ff6e"/><stop offset="0.4" stop-color="#e4ff68"/><stop offset="0.45" stop-color="#fff75f"/><stop offset="0.5" stop-color="#ffd84d"/><stop offset="0.55" stop-color="#ffc03f"/><stop offset="0.6" stop-color="#ffab32"/><stop offset="0.65" stop-color="#ff9a27"/><stop offset="0.7" stop-color="#ff8b1d"/><stop offset="0.75" stop-color="#ff7e14"/><stop offset="0.8" stop-color="#ff720c"/><stop offset="0.85" stop-color="#ff6802"/><stop offset="0.9" stop-color="#ff5e00"/><stop offset="0.95" stop-color="#ff5600"/><stop offset="1" stop-color="#ff4e00"/></linearGradient><linearGradient id="i18" gradientUnits="userSpaceOnUse" x1="727" y1="0" x2="895" y2="0"><stop offset="0" stop-color="#00ff97"/><stop offset="0.048" stop-color="#00ff94"/><stop offset="0.095" stop-color="#18ff90"/><stop offset="0.143" stop-color="#3eff8d"/><stop offset="0.19" stop-color="#61ff89"/><stop offset="0.238" stop-color="#83ff84"/><stop offset="0.286" stop-color="#a5ff80"/><stop offset="0.333" stop-color="#c7ff7b"/><stop offset="0.381" stop-color="#ebff75"/><stop offset="0.429" stop-color="#ffef68"/><stop offset="0.476" stop-color="#ffd256"/><stop offset="0.524" stop-color="#ffb947"/><stop offset="0.571" stop-color="#ffa53a"/><stop offset="0.619" stop-color="#ff942f"/><stop offset="0.667" stop-color="#ff8525"/><stop offset="0.714" stop-color="#ff781b"/><stop offset="0.762" stop-color="#ff6d13"/><stop offset="0.81" stop-color="#ff630b"/><stop offset="0.857" stop-color="#ff5a02"/><stop offset="0.905" stop-color="#ff5100"/><stop offset="0.952" stop-color="#ff4a00"/><stop offset="1" stop-color="#ff4300"/></linearGradient><linearGradient id="i19" gradientUnits="userSpaceOnUse" x1="726" y1="0" x2="902" y2="0"><stop offset="0" stop-color="#00ffa2"/><stop offset="0.045" stop-color="#00ff9f"/><stop offset="0.091" stop-color="#1bff9b"/><stop offset="0.136" stop-color="#42ff98"/><stop offset="0.182" stop-color="#65ff94"/><stop offset="0.227" stop-color="#88ff90"/><stop offset="0.273" stop-color="#acff8c"/><stop offset="0.318" stop-color="#cfff87"/><stop offset="0.364" stop-color="#f4ff82"/><stop offset="0.409" stop-color="#ffe670"/><stop offset="0.455" stop-color="#ffc95d"/><stop offset="0.5" stop-color="#ffb24e"/><stop offset="0.545" stop-color="#ff9e41"/><stop offset="0.591" stop-color="#ff8e35"/><stop offset="0.636" stop-color="#ff7f2b"/><stop offset="0.682" stop-color="#ff7322"/><stop offset="0.727" stop-color="#ff681a"/><stop offset="0.773" stop-color="#ff5e12"/><stop offset="0.818" stop-color="#ff550a"/><stop offset="0.864" stop-color="#ff4d01"/><stop offset="0.909" stop-color="#ff4500"/><stop offset="0.955" stop-color="#ff3e00"/><stop offset="1" stop-color="#ff3800"/></linearGradient><linearGradient id="i20" gradientUnits="userSpaceOnUse" x1="725" y1="0" x2="908" y2="0"><stop offset="0" stop-color="#00ffac"/><stop offset="0.043" stop-color="#00ffaa"/><stop offset="0.087" stop-color="#1effa7"/><stop offset="0.13" stop-color="#45ffa4"/><stop offset="0.174" stop-color="#6affa0"/><stop offset="0.217" stop-color="#8eff9d"/><stop offset="0.261" stop-color="#b2ff99"/><stop offset="0.304" stop-color="#d7ff95"/><stop offset="0.348" stop-color="#fdff90"/><stop offset="0.391" stop-color="#ffde79"/><stop offset="0.435" stop-color="#ffc266"/><stop offset="0.478" stop-color="#ffab56"/><stop offset="0.522" stop-color="#ff9848"/><stop offset="0.565" stop-color="#ff883c"/><stop offset="0.609" stop-color="#ff7a32"/><stop offset="0.652" stop-color="#ff6e29"/><stop offset="0.696" stop-color="#ff6320"/><stop offset="0.739" stop-color="#ff5919"/><stop offset="0.783" stop-color="#ff5111"/><stop offset="0.826" stop-color="#ff490a"/><stop offset="0.87" stop-color="#ff4102"/><stop offset="0.913" stop-color="#ff3b00"/><stop offset="0.957" stop-color="#ff3400"/><stop offset="1" stop-color="#ff2f00"/></linearGradient><linearGradient id="i21" gradientUnits="userSpaceOnUse" x1="723" y1="0" x2="915" y2="0"><stop offset="0" stop-color="#00ffb8"/><stop offset="0.042" stop-color="#00ffb6"/><stop offset="0.083" stop-color="#1cffb3"/><stop offset="0.125" stop-color="#45ffb0"/><stop offset="0.167" stop-color="#6bffae"/><stop offset="0.208" stop-color="#90ffaa"/><stop offset="0.25" stop-color="#b6ffa7"/><stop offset="0.292" stop-color="#ddffa3"/><stop offset="0.333" stop-color="#fff99c"/><stop offset="0.375" stop-color="#ffd782"/><stop offset="0.417" stop-color="#ffbb6e"/><stop offset="0.458" stop-color="#ffa55d"/><stop offset="0.5" stop-color="#ff924f"/><stop offset="0.542" stop-color="#ff8243"/><stop offset="0.583" stop-color="#ff7538"/><stop offset="0.625" stop-color="#ff692f"/><stop offset="0.667" stop-color="#ff5e26"/><stop offset="0.708" stop-color="#ff541f"/><stop offset="0.75" stop-color="#ff4c17"/><stop offset="0.792" stop-color="#ff4410"/><stop offset="0.833" stop-color="#ff3d09"/><stop offset="0.875" stop-color="#ff3601"/><stop offset="0.917" stop-color="#ff3000"/><stop offset="0.958" stop-color="#ff2a00"/><stop offset="1" stop-color="#ff2500"/></linearGradient><linearGradient id="i22" gradientUnits="userSpaceOnUse" x1="722" y1="0" x2="921" y2="0"><stop offset="0" stop-color="#00ffc4"/><stop offset="0.04" stop-color="#00ffc2"/><stop offset="0.08" stop-color="#1fffc0"/><stop offset="0.12" stop-color="#49ffbe"/><stop offset="0.16" stop-color="#70ffbb"/><stop offset="0.2" stop-color="#96ffb8"/><stop offset="0.24" stop-color="#bdffb6"/><stop offset="0.28" stop-color="#e5ffb2"/><stop offset="0.32" stop-color="#fff0a5"/><stop offset="0.36" stop-color="#ffcf8b"/><stop offset="0.4" stop-color="#ffb476"/><stop offset="0.44" stop-color="#ff9e65"/><stop offset="0.48" stop-color="#ff8c56"/><stop offset="0.52" stop-color="#ff7d4a"/><stop offset="0.56" stop-color="#ff6f3f"/><stop offset="0.6" stop-color="#ff6435"/><stop offset="0.64" stop-color="#ff592d"/><stop offset="0.68" stop-color="#ff5025"/><stop offset="0.72" stop-color="#ff471d"/><stop offset="0.76" stop-color="#ff4017"/><stop offset="0.8" stop-color="#ff3910"/><stop offset="0.84" stop-color="#ff3209"/><stop offset="0.88" stop-color="#ff2c02"/><stop offset="0.92" stop-color="#ff2600"/><stop offset="0.96" stop-color="#ff2100"/><stop offset="1" stop-color="#ff1c00"/></linearGradient><linearGradient id="i23" gradientUnits="userSpaceOnUse" x1="720" y1="0" x2="928" y2="0"><stop offset="0" stop-color="#00ffd1"/><stop offset="0.038" stop-color="#00ffcf"/><stop offset="0.077" stop-color="#1dffce"/><stop offset="0.115" stop-color="#49ffcc"/><stop offset="0.154" stop-color="#72ffca"/><stop offset="0.192" stop-color="#9affc8"/><stop offset="0.231" stop-color="#c2ffc5"/><stop offset="0.269" stop-color="#ecffc3"/><stop offset="0.308" stop-color="#ffe8af"/><stop offset="0.346" stop-color="#ffc794"/><stop offset="0.385" stop-color="#ffad7e"/><stop offset="0.423" stop-color="#ff986c"/><stop offset="0.462" stop-color="#ff865d"/><stop offset="0.5" stop-color="#ff7750"/><stop offset="0.538" stop-color="#ff6a45"/><stop offset="0.577" stop-color="#ff5e3b"/><stop offset="0.615" stop-color="#ff5432"/><stop offset="0.654" stop-color="#ff4b2a"/><stop offset="0.692" stop-color="#ff4323"/><stop offset="0.731" stop-color="#ff3b1c"/><stop offset="0.769" stop-color="#ff3415"/><stop offset="0.808" stop-color="#ff2e0f"/><stop offset="0.846" stop-color="#ff2809"/><stop offset="0.885" stop-color="#ff2201"/><stop offset="0.923" stop-color="#ff1d00"/><stop offset="0.962" stop-color="#ff1700"/><stop offset="1" stop-color="#ff1200"/></linearGradient><linearGradient id="i24" gradientUnits="userSpaceOnUse" x1="719" y1="0" x2="933" y2="0"><stop offset="0" stop-color="#00ffde"/><stop offset="0.037" stop-color="#00ffdd"/><stop offset="0.074" stop-color="#20ffdc"/><stop offset="0.111" stop-color="#4dffdb"/><stop offset="0.148" stop-color="#76ffd9"/><stop offset="0.185" stop-color="#9fffd8"/><stop offset="0.222" stop-color="#c9ffd6"/><stop offset="0.259" stop-color="#f5ffd4"/><stop offset="0.296" stop-color="#ffe0b9"/><stop offset="0.333" stop-color="#ffc09d"/><stop offset="0.37" stop-color="#ffa786"/><stop offset="0.407" stop-color="#ff9274"/><stop offset="0.444" stop-color="#ff8165"/><stop offset="0.481" stop-color="#ff7257"/><stop offset="0.519" stop-color="#ff654c"/><stop offset="0.556" stop-color="#ff5a42"/><stop offset="0.593" stop-color="#ff5039"/><stop offset="0.63" stop-color="#ff4731"/><stop offset="0.667" stop-color="#ff3f29"/><stop offset="0.704" stop-color="#ff3722"/><stop offset="0.741" stop-color="#ff301c"/><stop offset="0.778" stop-color="#ff2a15"/><stop offset="0.815" stop-color="#ff240f"/><stop offset="0.852" stop-color="#ff1e09"/><stop offset="0.889" stop-color="#ff1903"/><stop offset="0.926" stop-color="#ff1400"/><stop offset="0.963" stop-color="#ff0f00"/><stop offset="1" stop-color="#ff0a00"/></linearGradient><linearGradient id="i25" gradientUnits="userSpaceOnUse" x1="717" y1="0" x2="933" y2="0"><stop offset="0" stop-color="#00ffed"/><stop offset="0.037" stop-color="#00ffec"/><stop offset="0.074" stop-color="#1fffeb"/><stop offset="0.111" stop-color="#4dffeb"/><stop offset="0.148" stop-color="#79ffea"/><stop offset="0.185" stop-color="#a4ffe9"/><stop offset="0.222" stop-color="#d0ffe8"/><stop offset="0.259" stop-color="#feffe7"/><stop offset="0.296" stop-color="#ffd7c2"/><stop offset="0.333" stop-color="#ffb8a5"/><stop offset="0.37" stop-color="#ff9f8d"/><stop offset="0.407" stop-color="#ff8a7a"/><stop offset="0.444" stop-color="#ff7a6b"/><stop offset="0.481" stop-color="#ff6b5d"/><stop offset="0.519" stop-color="#ff5f51"/><stop offset="0.556" stop-color="#ff5447"/><stop offset="0.593" stop-color="#ff4a3e"/><stop offset="0.63" stop-color="#ff4135"/><stop offset="0.667" stop-color="#ff392e"/><stop offset="0.704" stop-color="#ff3227"/><stop offset="0.741" stop-color="#ff2b20"/><stop offset="0.778" stop-color="#ff251a"/><stop offset="0.815" stop-color="#ff1f14"/><stop offset="0.852" stop-color="#ff190e"/><stop offset="0.889" stop-color="#ff1408"/><stop offset="0.926" stop-color="#ff0e02"/><stop offset="0.963" stop-color="#ff0900"/><stop offset="1" stop-color="#ff0300"/></linearGradient><linearGradient id="i26" gradientUnits="userSpaceOnUse" x1="716" y1="0" x2="933" y2="0"><stop offset="0" stop-color="#00fffc"/><stop offset="0.036" stop-color="#00fffc"/><stop offset="0.071" stop-color="#1ffffc"/><stop offset="0.107" stop-color="#4ffffc"/><stop offset="0.143" stop-color="#7afffc"/><stop offset="0.179" stop-color="#a6fffb"/><stop offset="0.214" stop-color="#d3fffb"/><stop offset="0.25" stop-color="#fffdf9"/><stop offset="0.286" stop-color="#ffd5d1"/><stop offset="0.321" stop-color="#ffb6b3"/><stop offset="0.357" stop-color="#ff9d9a"/><stop offset="0.393" stop-color="#ff8987"/><stop offset="0.429" stop-color="#ff7876"/><stop offset="0.464" stop-color="#ff6a68"/><stop offset="0.5" stop-color="#ff5d5b"/><stop offset="0.536" stop-color="#ff5251"/><stop offset="0.571" stop-color="#ff4947"/><stop offset="0.607" stop-color="#ff403e"/><stop offset="0.643" stop-color="#ff3837"/><stop offset="0.679" stop-color="#ff312f"/><stop offset="0.714" stop-color="#ff2a29"/><stop offset="0.75" stop-color="#ff2422"/><stop offset="0.786" stop-color="#ff1e1d"/><stop offset="0.821" stop-color="#ff1817"/><stop offset="0.857" stop-color="#ff1312"/><stop offset="0.893" stop-color="#ff0d0c"/><stop offset="0.929" stop-color="#ff0807"/><stop offset="0.964" stop-color="#ff0100"/><stop offset="1" stop-color="#ff0000"/></linearGradient><linearGradient id="i27" gradientUnits="userSpaceOnUse" x1="714" y1="0" x2="933" y2="0"><stop offset="0" stop-color="#00f3ff"/><stop offset="0.036" stop-color="#00f2ff"/><stop offset="0.071" stop-color="#1cf2ff"/><stop offset="0.107" stop-color="#4bf1ff"/><stop offset="0.143" stop-color="#76f0ff"/><stop offset="0.179" stop-color="#a1f0ff"/><stop offset="0.214" stop-color="#cdefff"/><stop offset="0.25" stop-color="#faeeff"/><stop offset="0.286" stop-color="#ffcbda"/><stop offset="0.321" stop-color="#ffadbb"/><stop offset="0.357" stop-color="#ff95a2"/><stop offset="0.393" stop-color="#ff818d"/><stop offset="0.429" stop-color="#ff717c"/><stop offset="0.464" stop-color="#ff636d"/><stop offset="0.5" stop-color="#ff5761"/><stop offset="0.536" stop-color="#ff4c56"/><stop offset="0.571" stop-color="#ff424c"/><stop offset="0.607" stop-color="#ff3a43"/><stop offset="0.643" stop-color="#ff323b"/><stop offset="0.679" stop-color="#ff2b33"/><stop offset="0.714" stop-color="#ff242d"/><stop offset="0.75" stop-color="#ff1e26"/><stop offset="0.786" stop-color="#ff1821"/><stop offset="0.821" stop-color="#ff121b"/><stop offset="0.857" stop-color="#ff0d16"/><stop offset="0.893" stop-color="#ff0710"/><stop offset="0.929" stop-color="#ff000b"/><stop offset="0.964" stop-color="#ff0006"/><stop offset="1" stop-color="#ff0000"/></linearGradient><linearGradient id="i28" gradientUnits="userSpaceOnUse" x1="713" y1="0" x2="933" y2="0"><stop offset="0" stop-color="#00e4ff"/><stop offset="0.036" stop-color="#00e3ff"/><stop offset="0.071" stop-color="#1fe2ff"/><stop offset="0.107" stop-color="#4ce1ff"/><stop offset="0.143" stop-color="#76dfff"/><stop offset="0.179" stop-color="#9fdeff"/><stop offset="0.214" stop-color="#c9dcff"/><stop offset="0.25" stop-color="#f5dbff"/><stop offset="0.286" stop-color="#ffbee0"/><stop offset="0.321" stop-color="#ffa2c0"/><stop offset="0.357" stop-color="#ff8ba7"/><stop offset="0.393" stop-color="#ff7892"/><stop offset="0.429" stop-color="#ff6881"/><stop offset="0.464" stop-color="#ff5b72"/><stop offset="0.5" stop-color="#ff4f65"/><stop offset="0.536" stop-color="#ff455a"/><stop offset="0.571" stop-color="#ff3c50"/><stop offset="0.607" stop-color="#ff3347"/><stop offset="0.643" stop-color="#ff2c3f"/><stop offset="0.679" stop-color="#ff2537"/><stop offset="0.714" stop-color="#ff1e30"/><stop offset="0.75" stop-color="#ff182a"/><stop offset="0.786" stop-color="#ff1224"/><stop offset="0.821" stop-color="#ff0c1f"/><stop offset="0.857" stop-color="#ff0619"/><stop offset="0.893" stop-color="#ff0014"/><stop offset="0.929" stop-color="#ff000f"/><stop offset="0.964" stop-color="#ff000a"/><stop offset="1" stop-color="#ff0005"/></linearGradient><linearGradient id="i29" gradientUnits="userSpaceOnUse" x1="711" y1="0" x2="928" y2="0"><stop offset="0" stop-color="#00d6ff"/><stop offset="0.036" stop-color="#00d5ff"/><stop offset="0.071" stop-color="#19d3ff"/><stop offset="0.107" stop-color="#45d2ff"/><stop offset="0.143" stop-color="#6dd0ff"/><stop offset="0.179" stop-color="#94ceff"/><stop offset="0.214" stop-color="#bcccff"/><stop offset="0.25" stop-color="#e5c9ff"/><stop offset="0.286" stop-color="#ffbbf0"/><stop offset="0.321" stop-color="#ff9ece"/><stop offset="0.357" stop-color="#ff87b3"/><stop offset="0.393" stop-color="#ff749d"/><stop offset="0.429" stop-color="#ff658b"/><stop offset="0.464" stop-color="#ff577b"/><stop offset="0.5" stop-color="#ff4c6e"/><stop offset="0.536" stop-color="#ff4262"/><stop offset="0.571" stop-color="#ff3858"/><stop offset="0.607" stop-color="#ff304e"/><stop offset="0.643" stop-color="#ff2846"/><stop offset="0.679" stop-color="#ff213e"/><stop offset="0.714" stop-color="#ff1b37"/><stop offset="0.75" stop-color="#ff1531"/><stop offset="0.786" stop-color="#ff0e2b"/><stop offset="0.821" stop-color="#ff0825"/><stop offset="0.857" stop-color="#ff0120"/><stop offset="0.893" stop-color="#ff001b"/><stop offset="0.929" stop-color="#ff0016"/><stop offset="0.964" stop-color="#ff0011"/><stop offset="1" stop-color="#ff000c"/></linearGradient><linearGradient id="i30" gradientUnits="userSpaceOnUse" x1="710" y1="0" x2="919" y2="0"><stop offset="0" stop-color="#00c9ff"/><stop offset="0.037" stop-color="#00c7ff"/><stop offset="0.074" stop-color="#1bc5ff"/><stop offset="0.111" stop-color="#45c3ff"/><stop offset="0.148" stop-color="#6cc1ff"/><stop offset="0.185" stop-color="#91beff"/><stop offset="0.222" stop-color="#b8bcff"/><stop offset="0.259" stop-color="#dfb9ff"/><stop offset="0.296" stop-color="#ffaff7"/><stop offset="0.333" stop-color="#ff94d4"/><stop offset="0.37" stop-color="#ff7eb9"/><stop offset="0.407" stop-color="#ff6ca3"/><stop offset="0.444" stop-color="#ff5d90"/><stop offset="0.481" stop-color="#ff5081"/><stop offset="0.519" stop-color="#ff4573"/><stop offset="0.556" stop-color="#ff3b67"/><stop offset="0.593" stop-color="#ff325c"/><stop offset="0.63" stop-color="#ff2a53"/><stop offset="0.667" stop-color="#ff234a"/><stop offset="0.704" stop-color="#ff1c43"/><stop offset="0.741" stop-color="#ff153c"/><stop offset="0.778" stop-color="#ff0f35"/><stop offset="0.815" stop-color="#ff082f"/><stop offset="0.852" stop-color="#ff0029"/><stop offset="0.889" stop-color="#ff0024"/><stop offset="0.926" stop-color="#ff001f"/><stop offset="0.963" stop-color="#ff001a"/><stop offset="1" stop-color="#ff0015"/></linearGradient><linearGradient id="i31" gradientUnits="userSpaceOnUse" x1="708" y1="0" x2="909" y2="0"><stop offset="0" stop-color="#00bdff"/><stop offset="0.038" stop-color="#00bbff"/><stop offset="0.077" stop-color="#17b8ff"/><stop offset="0.115" stop-color="#40b6ff"/><stop offset="0.154" stop-color="#66b3ff"/><stop offset="0.192" stop-color="#8ab0ff"/><stop offset="0.231" stop-color="#afadff"/><stop offset="0.269" stop-color="#d4a9ff"/><stop offset="0.308" stop-color="#fba5ff"/><stop offset="0.346" stop-color="#ff8ddf"/><stop offset="0.385" stop-color="#ff77c2"/><stop offset="0.423" stop-color="#ff66ab"/><stop offset="0.462" stop-color="#ff5798"/><stop offset="0.5" stop-color="#ff4a88"/><stop offset="0.538" stop-color="#ff3f7a"/><stop offset="0.577" stop-color="#ff366d"/><stop offset="0.615" stop-color="#ff2d62"/><stop offset="0.654" stop-color="#ff2559"/><stop offset="0.692" stop-color="#ff1d50"/><stop offset="0.731" stop-color="#ff1648"/><stop offset="0.769" stop-color="#ff1041"/><stop offset="0.808" stop-color="#ff093a"/><stop offset="0.846" stop-color="#ff0134"/><stop offset="0.885" stop-color="#ff002e"/><stop offset="0.923" stop-color="#ff0028"/><stop offset="0.962" stop-color="#ff0023"/><stop offset="1" stop-color="#ff001e"/></linearGradient><linearGradient id="i32" gradientUnits="userSpaceOnUse" x1="707" y1="0" x2="900" y2="0"><stop offset="0" stop-color="#00b1ff"/><stop offset="0.04" stop-color="#00afff"/><stop offset="0.08" stop-color="#19acff"/><stop offset="0.12" stop-color="#41a9ff"/><stop offset="0.16" stop-color="#65a6ff"/><stop offset="0.2" stop-color="#88a2ff"/><stop offset="0.24" stop-color="#ab9eff"/><stop offset="0.28" stop-color="#d09bff"/><stop offset="0.32" stop-color="#f596ff"/><stop offset="0.36" stop-color="#ff83e5"/><stop offset="0.4" stop-color="#ff6ec8"/><stop offset="0.44" stop-color="#ff5db1"/><stop offset="0.48" stop-color="#ff4f9d"/><stop offset="0.52" stop-color="#ff438d"/><stop offset="0.56" stop-color="#ff387f"/><stop offset="0.6" stop-color="#ff2f72"/><stop offset="0.64" stop-color="#ff2667"/><stop offset="0.68" stop-color="#ff1e5d"/><stop offset="0.72" stop-color="#ff1754"/><stop offset="0.76" stop-color="#ff104c"/><stop offset="0.8" stop-color="#ff0945"/><stop offset="0.84" stop-color="#ff003e"/><stop offset="0.88" stop-color="#ff0038"/><stop offset="0.92" stop-color="#ff0032"/><stop offset="0.96" stop-color="#ff002c"/><stop offset="1" stop-color="#ff0027"/></linearGradient><linearGradient id="i33" gradientUnits="userSpaceOnUse" x1="705" y1="0" x2="890" y2="0"><stop offset="0" stop-color="#00a6ff"/><stop offset="0.042" stop-color="#00a3ff"/><stop offset="0.083" stop-color="#15a0ff"/><stop offset="0.125" stop-color="#3c9dff"/><stop offset="0.167" stop-color="#5f99ff"/><stop offset="0.208" stop-color="#8196ff"/><stop offset="0.25" stop-color="#a491ff"/><stop offset="0.292" stop-color="#c68dff"/><stop offset="0.333" stop-color="#ea88ff"/><stop offset="0.375" stop-color="#ff7bf0"/><stop offset="0.417" stop-color="#ff67d2"/><stop offset="0.458" stop-color="#ff57b9"/><stop offset="0.5" stop-color="#ff49a5"/><stop offset="0.542" stop-color="#ff3d94"/><stop offset="0.583" stop-color="#ff3285"/><stop offset="0.625" stop-color="#ff2978"/><stop offset="0.667" stop-color="#ff206d"/><stop offset="0.708" stop-color="#ff1863"/><stop offset="0.75" stop-color="#ff115a"/><stop offset="0.792" stop-color="#ff0951"/><stop offset="0.833" stop-color="#ff014a"/><stop offset="0.875" stop-color="#ff0043"/><stop offset="0.917" stop-color="#ff003c"/><stop offset="0.958" stop-color="#ff0036"/><stop offset="1" stop-color="#ff0031"/></linearGradient><linearGradient id="i34" gradientUnits="userSpaceOnUse" x1="704" y1="0" x2="880" y2="0"><stop offset="0" stop-color="#009bff"/><stop offset="0.045" stop-color="#0098ff"/><stop offset="0.091" stop-color="#1a94ff"/><stop offset="0.136" stop-color="#4190ff"/><stop offset="0.182" stop-color="#648cff"/><stop offset="0.227" stop-color="#8688ff"/><stop offset="0.273" stop-color="#a883ff"/><stop offset="0.318" stop-color="#cc7eff"/><stop offset="0.364" stop-color="#f079ff"/><stop offset="0.409" stop-color="#ff6aeb"/><stop offset="0.455" stop-color="#ff57cd"/><stop offset="0.5" stop-color="#ff48b6"/><stop offset="0.545" stop-color="#ff3ba2"/><stop offset="0.591" stop-color="#ff3091"/><stop offset="0.636" stop-color="#ff2683"/><stop offset="0.682" stop-color="#ff1c76"/><stop offset="0.727" stop-color="#ff146b"/><stop offset="0.773" stop-color="#ff0c61"/><stop offset="0.818" stop-color="#ff0358"/><stop offset="0.864" stop-color="#ff0050"/><stop offset="0.909" stop-color="#ff0048"/><stop offset="0.955" stop-color="#ff0041"/><stop offset="1" stop-color="#ff003b"/></linearGradient><linearGradient id="i35" gradientUnits="userSpaceOnUse" x1="702" y1="0" x2="871" y2="0"><stop offset="0" stop-color="#0091ff"/><stop offset="0.045" stop-color="#008eff"/><stop offset="0.091" stop-color="#148aff"/><stop offset="0.136" stop-color="#3986ff"/><stop offset="0.182" stop-color="#5a82ff"/><stop offset="0.227" stop-color="#7a7eff"/><stop offset="0.273" stop-color="#9a79ff"/><stop offset="0.318" stop-color="#ba74ff"/><stop offset="0.364" stop-color="#db6eff"/><stop offset="0.409" stop-color="#fd68ff"/><stop offset="0.455" stop-color="#ff56e1"/><stop offset="0.5" stop-color="#ff47c8"/><stop offset="0.545" stop-color="#ff3ab2"/><stop offset="0.591" stop-color="#ff2ea0"/><stop offset="0.636" stop-color="#ff2491"/><stop offset="0.682" stop-color="#ff1b83"/><stop offset="0.727" stop-color="#ff1277"/><stop offset="0.773" stop-color="#ff0a6d"/><stop offset="0.818" stop-color="#ff0063"/><stop offset="0.864" stop-color="#ff005b"/><stop offset="0.909" stop-color="#ff0053"/><stop offset="0.955" stop-color="#ff004b"/><stop offset="1" stop-color="#ff0045"/></linearGradient><linearGradient id="i36" gradientUnits="userSpaceOnUse" x1="701" y1="0" x2="861" y2="0"><stop offset="0" stop-color="#0087ff"/><stop offset="0.05" stop-color="#0083ff"/><stop offset="0.1" stop-color="#197fff"/><stop offset="0.15" stop-color="#3d7bff"/><stop offset="0.2" stop-color="#5e76ff"/><stop offset="0.25" stop-color="#7f71ff"/><stop offset="0.3" stop-color="#9f6cff"/><stop offset="0.35" stop-color="#c066ff"/><stop offset="0.4" stop-color="#e25fff"/><stop offset="0.45" stop-color="#ff57fa"/><stop offset="0.5" stop-color="#ff46db"/><stop offset="0.55" stop-color="#ff37c3"/><stop offset="0.6" stop-color="#ff2bae"/><stop offset="0.65" stop-color="#ff209c"/><stop offset="0.7" stop-color="#ff168d"/><stop offset="0.75" stop-color="#ff0d80"/><stop offset="0.8" stop-color="#ff0374"/><stop offset="0.85" stop-color="#ff006a"/><stop offset="0.9" stop-color="#ff0061"/><stop offset="0.95" stop-color="#ff0058"/><stop offset="1" stop-color="#ff0050"/></linearGradient><linearGradient id="i37" gradientUnits="userSpaceOnUse" x1="700" y1="0" x2="852" y2="0"><stop offset="0" stop-color="#007dff"/><stop offset="0.053" stop-color="#0079ff"/><stop offset="0.105" stop-color="#1a75ff"/><stop offset="0.158" stop-color="#3e70ff"/><stop offset="0.211" stop-color="#5e6bff"/><stop offset="0.263" stop-color="#7d66ff"/><stop offset="0.316" stop-color="#9d60ff"/><stop offset="0.368" stop-color="#bd5aff"/><stop offset="0.421" stop-color="#dd53ff"/><stop offset="0.474" stop-color="#ff4cff"/><stop offset="0.526" stop-color="#ff3ce0"/><stop offset="0.579" stop-color="#ff2ec7"/><stop offset="0.632" stop-color="#ff22b3"/><stop offset="0.684" stop-color="#ff17a1"/><stop offset="0.737" stop-color="#ff0d91"/><stop offset="0.789" stop-color="#ff0284"/><stop offset="0.842" stop-color="#ff0078"/><stop offset="0.895" stop-color="#ff006e"/><stop offset="0.947" stop-color="#ff0064"/><stop offset="1" stop-color="#ff005c"/></linearGradient><linearGradient id="i38" gradientUnits="userSpaceOnUse" x1="698" y1="0" x2="842" y2="0"><stop offset="0" stop-color="#0074ff"/><stop offset="0.056" stop-color="#0070ff"/><stop offset="0.111" stop-color="#176bff"/><stop offset="0.167" stop-color="#3a66ff"/><stop offset="0.222" stop-color="#5a61ff"/><stop offset="0.278" stop-color="#785cff"/><stop offset="0.333" stop-color="#9756ff"/><stop offset="0.389" stop-color="#b64fff"/><stop offset="0.444" stop-color="#d548ff"/><stop offset="0.5" stop-color="#f640ff"/><stop offset="0.556" stop-color="#ff33e9"/><stop offset="0.611" stop-color="#ff25cf"/><stop offset="0.667" stop-color="#ff1aba"/><stop offset="0.722" stop-color="#ff0fa7"/><stop offset="0.778" stop-color="#ff0397"/><stop offset="0.833" stop-color="#ff008a"/><stop offset="0.889" stop-color="#ff007e"/><stop offset="0.944" stop-color="#ff0073"/><stop offset="1" stop-color="#ff0069"/></linearGradient><linearGradient id="i39" gradientUnits="userSpaceOnUse" x1="697" y1="0" x2="833" y2="0"><stop offset="0" stop-color="#006bff"/><stop offset="0.059" stop-color="#0066ff"/><stop offset="0.118" stop-color="#1962ff"/><stop offset="0.176" stop-color="#3b5dff"/><stop offset="0.235" stop-color="#5957ff"/><stop offset="0.294" stop-color="#7751ff"/><stop offset="0.353" stop-color="#954bff"/><stop offset="0.412" stop-color="#b344ff"/><stop offset="0.471" stop-color="#d13cff"/><stop offset="0.529" stop-color="#f134ff"/><stop offset="0.588" stop-color="#ff28ee"/><stop offset="0.647" stop-color="#ff1bd4"/><stop offset="0.706" stop-color="#ff0fbe"/><stop offset="0.765" stop-color="#ff02ac"/><stop offset="0.824" stop-color="#ff009c"/><stop offset="0.882" stop-color="#ff008e"/><stop offset="0.941" stop-color="#ff0081"/><stop offset="1" stop-color="#ff0077"/></linearGradient><linearGradient id="i40" gradientUnits="userSpaceOnUse" x1="695" y1="0" x2="823" y2="0"><stop offset="0" stop-color="#0062ff"/><stop offset="0.062" stop-color="#005eff"/><stop offset="0.125" stop-color="#1659ff"/><stop offset="0.188" stop-color="#3754ff"/><stop offset="0.25" stop-color="#554eff"/><stop offset="0.312" stop-color="#7348ff"/><stop offset="0.375" stop-color="#8f41ff"/><stop offset="0.438" stop-color="#ad3aff"/><stop offset="0.5" stop-color="#ca32ff"/><stop offset="0.562" stop-color="#e829ff"/><stop offset="0.625" stop-color="#ff1ef7"/><stop offset="0.688" stop-color="#ff11dc"/><stop offset="0.75" stop-color="#ff03c5"/><stop offset="0.812" stop-color="#ff00b2"/><stop offset="0.875" stop-color="#ff00a2"/><stop offset="0.938" stop-color="#ff0093"/><stop offset="1" stop-color="#ff0087"/></linearGradient><linearGradient id="i41" gradientUnits="userSpaceOnUse" x1="694" y1="0" x2="814" y2="0"><stop offset="0" stop-color="#005aff"/><stop offset="0.067" stop-color="#0055ff"/><stop offset="0.133" stop-color="#1850ff"/><stop offset="0.2" stop-color="#384aff"/><stop offset="0.267" stop-color="#5544ff"/><stop offset="0.333" stop-color="#723eff"/><stop offset="0.4" stop-color="#8e37ff"/><stop offset="0.467" stop-color="#aa2fff"/><stop offset="0.533" stop-color="#c726ff"/><stop offset="0.6" stop-color="#e41dff"/><stop offset="0.667" stop-color="#ff11fb"/><stop offset="0.733" stop-color="#ff02e0"/><stop offset="0.8" stop-color="#ff00c9"/><stop offset="0.867" stop-color="#ff00b6"/><stop offset="0.933" stop-color="#ff00a6"/><stop offset="1" stop-color="#ff0097"/></linearGradient><linearGradient id="i42" gradientUnits="userSpaceOnUse" x1="692" y1="0" x2="804" y2="0"><stop offset="0" stop-color="#0052ff"/><stop offset="0.071" stop-color="#004dff"/><stop offset="0.143" stop-color="#1547ff"/><stop offset="0.214" stop-color="#3542ff"/><stop offset="0.286" stop-color="#523bff"/><stop offset="0.357" stop-color="#6d35ff"/><stop offset="0.429" stop-color="#892dff"/><stop offset="0.5" stop-color="#a425ff"/><stop offset="0.571" stop-color="#c01cff"/><stop offset="0.643" stop-color="#dd11ff"/><stop offset="0.714" stop-color="#fa04ff"/><stop offset="0.786" stop-color="#ff00e8"/><stop offset="0.857" stop-color="#ff00d0"/><stop offset="0.929" stop-color="#ff00bd"/><stop offset="1" stop-color="#ff00ac"/></linearGradient><linearGradient id="i43" gradientUnits="userSpaceOnUse" x1="691" y1="0" x2="795" y2="0"><stop offset="0" stop-color="#004aff"/><stop offset="0.077" stop-color="#0044ff"/><stop offset="0.154" stop-color="#163fff"/><stop offset="0.231" stop-color="#3539ff"/><stop offset="0.308" stop-color="#5132ff"/><stop offset="0.385" stop-color="#6d2bff"/><stop offset="0.462" stop-color="#8723ff"/><stop offset="0.538" stop-color="#a21aff"/><stop offset="0.615" stop-color="#bd10ff"/><stop offset="0.692" stop-color="#d902ff"/><stop offset="0.769" stop-color="#f600ff"/><stop offset="0.846" stop-color="#ff00ec"/><stop offset="0.923" stop-color="#ff00d5"/><stop offset="1" stop-color="#ff00c1"/></linearGradient><linearGradient id="i44" gradientUnits="userSpaceOnUse" x1="689" y1="0" x2="785" y2="0"><stop offset="0" stop-color="#0042ff"/><stop offset="0.083" stop-color="#003dff"/><stop offset="0.167" stop-color="#1437ff"/><stop offset="0.25" stop-color="#3230ff"/><stop offset="0.333" stop-color="#4e2aff"/><stop offset="0.417" stop-color="#6922ff"/><stop offset="0.5" stop-color="#831aff"/><stop offset="0.583" stop-color="#9d10ff"/><stop offset="0.667" stop-color="#b703ff"/><stop offset="0.75" stop-color="#d200ff"/><stop offset="0.833" stop-color="#ee00ff"/><stop offset="0.917" stop-color="#ff00f4"/><stop offset="1" stop-color="#ff00dc"/></linearGradient><linearGradient id="i45" gradientUnits="userSpaceOnUse" x1="688" y1="0" x2="775" y2="0"><stop offset="0" stop-color="#003aff"/><stop offset="0.091" stop-color="#0034ff"/><stop offset="0.182" stop-color="#152eff"/><stop offset="0.273" stop-color="#3228ff"/><stop offset="0.364" stop-color="#4d20ff"/><stop offset="0.455" stop-color="#6618ff"/><stop offset="0.545" stop-color="#800fff"/><stop offset="0.636" stop-color="#9903ff"/><stop offset="0.727" stop-color="#b300ff"/><stop offset="0.818" stop-color="#cd00ff"/><stop offset="0.909" stop-color="#e700ff"/><stop offset="1" stop-color="#ff00fc"/></linearGradient><linearGradient id="i46" gradientUnits="userSpaceOnUse" x1="686" y1="0" x2="766" y2="0"><stop offset="0" stop-color="#0033ff"/><stop offset="0.1" stop-color="#002dff"/><stop offset="0.2" stop-color="#1326ff"/><stop offset="0.3" stop-color="#301fff"/><stop offset="0.4" stop-color="#4b17ff"/><stop offset="0.5" stop-color="#640eff"/><stop offset="0.6" stop-color="#7d03ff"/><stop offset="0.7" stop-color="#9600ff"/><stop offset="0.8" stop-color="#af00ff"/><stop offset="0.9" stop-color="#c900ff"/><stop offset="1" stop-color="#e300ff"/></linearGradient><linearGradient id="i47" gradientUnits="userSpaceOnUse" x1="685" y1="0" x2="756" y2="0"><stop offset="0" stop-color="#002bff"/><stop offset="0.111" stop-color="#0025ff"/><stop offset="0.222" stop-color="#131eff"/><stop offset="0.333" stop-color="#3016ff"/><stop offset="0.444" stop-color="#490eff"/><stop offset="0.556" stop-color="#6202ff"/><stop offset="0.667" stop-color="#7a00ff"/><stop offset="0.778" stop-color="#9200ff"/><stop offset="0.889" stop-color="#ab00ff"/><stop offset="1" stop-color="#c300ff"/></linearGradient><linearGradient id="i48" gradientUnits="userSpaceOnUse" x1="683" y1="0" x2="747" y2="0"><stop offset="0" stop-color="#0024ff"/><stop offset="0.125" stop-color="#001dff"/><stop offset="0.25" stop-color="#1216ff"/><stop offset="0.375" stop-color="#2e0dff"/><stop offset="0.5" stop-color="#4802ff"/><stop offset="0.625" stop-color="#6000ff"/><stop offset="0.75" stop-color="#7800ff"/><stop offset="0.875" stop-color="#9000ff"/><stop offset="1" stop-color="#a800ff"/></linearGradient><linearGradient id="i49" gradientUnits="userSpaceOnUse" x1="683" y1="0" x2="737" y2="0"><stop offset="0" stop-color="#001bff"/><stop offset="0.143" stop-color="#0014ff"/><stop offset="0.286" stop-color="#150cff"/><stop offset="0.429" stop-color="#2f00ff"/><stop offset="0.571" stop-color="#4800ff"/><stop offset="0.714" stop-color="#5f00ff"/><stop offset="0.857" stop-color="#7500ff"/><stop offset="1" stop-color="#8c00ff"/></linearGradient><linearGradient id="i50" gradientUnits="userSpaceOnUse" x1="683" y1="0" x2="728" y2="0"><stop offset="0" stop-color="#0011ff"/><stop offset="0.167" stop-color="#0009ff"/><stop offset="0.333" stop-color="#1800ff"/><stop offset="0.5" stop-color="#3100ff"/><stop offset="0.667" stop-color="#4800ff"/><stop offset="0.833" stop-color="#5e00ff"/><stop offset="1" stop-color="#7400ff"/></linearGradient><linearGradient id="i51" gradientUnits="userSpaceOnUse" x1="683" y1="0" x2="718" y2="0"><stop offset="0" stop-color="#0007ff"/><stop offset="0.2" stop-color="#0000ff"/><stop offset="0.4" stop-color="#1a00ff"/><stop offset="0.6" stop-color="#3000ff"/><stop offset="0.8" stop-color="#4500ff"/><stop offset="1" stop-color="#5900ff"/></linearGradient><linearGradient id="i52" gradientUnits="userSpaceOnUse" x1="683" y1="0" x2="709" y2="0"><stop offset="0" stop-color="#0000ff"/><stop offset="0.25" stop-color="#0000ff"/><stop offset="0.5" stop-color="#1b00ff"/><stop offset="0.75" stop-color="#2f00ff"/><stop offset="1" stop-color="#4300ff"/></linearGradient><linearGradient id="i53" gradientUnits="userSpaceOnUse" x1="683" y1="0" x2="699" y2="0"><stop offset="0" stop-color="#0000ff"/><stop offset="0.5" stop-color="#0e00ff"/><stop offset="1" stop-color="#2800ff"/></linearGradient></defs><g clip-path="url(#hsc)"><g filter="url(#bl)"><rect x="639" y="8.5" width="43" height="5" fill="url(#o0)"/><rect x="632" y="12.5" width="62" height="5" fill="url(#o1)"/><rect x="628" y="16.5" width="73" height="5" fill="url(#o2)"/><rect x="626" y="20.5" width="85" height="5" fill="url(#o3)"/><rect x="623" y="24.5" width="97" height="5" fill="url(#o4)"/><rect x="621" y="28.5" width="106" height="5" fill="url(#o5)"/><rect x="619" y="32.5" width="115" height="5" fill="url(#o6)"/><rect x="618" y="36.5" width="123" height="5" fill="url(#o7)"/><rect x="617" y="40.5" width="130" height="5" fill="url(#o8)"/><rect x="617" y="44.5" width="135" height="5" fill="url(#o9)"/><rect x="616" y="48.5" width="143" height="5" fill="url(#o10)"/><rect x="615" y="52.5" width="150" height="5" fill="url(#o11)"/><rect x="615" y="56.5" width="156" height="5" fill="url(#o12)"/><rect x="614" y="60.5" width="162" height="5" fill="url(#o13)"/><rect x="614" y="64.5" width="168" height="5" fill="url(#o14)"/><rect x="614" y="68.5" width="174" height="5" fill="url(#o15)"/><rect x="614" y="72.5" width="179" height="5" fill="url(#o16)"/><rect x="613" y="76.5" width="186" height="5" fill="url(#o17)"/><rect x="613" y="80.5" width="191" height="5" fill="url(#o18)"/><rect x="613" y="84.5" width="196" height="5" fill="url(#o19)"/><rect x="613" y="88.5" width="202" height="5" fill="url(#o20)"/><rect x="613" y="92.5" width="207" height="5" fill="url(#o21)"/><rect x="613" y="96.5" width="213" height="5" fill="url(#o22)"/><rect x="613" y="100.5" width="218" height="5" fill="url(#o23)"/><rect x="614" y="104.5" width="222" height="5" fill="url(#o24)"/><rect x="614" y="108.5" width="228" height="5" fill="url(#o25)"/><rect x="614" y="112.5" width="232" height="5" fill="url(#o26)"/><rect x="614" y="116.5" width="238" height="5" fill="url(#o27)"/><rect x="615" y="120.5" width="242" height="5" fill="url(#o28)"/><rect x="615" y="124.5" width="248" height="5" fill="url(#o29)"/><rect x="616" y="128.5" width="252" height="5" fill="url(#o30)"/><rect x="616" y="132.5" width="257" height="5" fill="url(#o31)"/><rect x="617" y="136.5" width="261" height="5" fill="url(#o32)"/><rect x="617" y="140.5" width="267" height="5" fill="url(#o33)"/><rect x="617" y="144.5" width="272" height="5" fill="url(#o34)"/><rect x="618" y="148.5" width="276" height="5" fill="url(#o35)"/><rect x="619" y="152.5" width="280" height="5" fill="url(#o36)"/><rect x="619" y="156.5" width="286" height="5" fill="url(#o37)"/><rect x="620" y="160.5" width="290" height="5" fill="url(#o38)"/><rect x="621" y="164.5" width="294" height="5" fill="url(#o39)"/><rect x="621" y="168.5" width="300" height="5" fill="url(#o40)"/><rect x="622" y="172.5" width="305" height="5" fill="url(#o41)"/><rect x="623" y="176.5" width="308" height="5" fill="url(#o42)"/><rect x="624" y="180.5" width="313" height="5" fill="url(#o43)"/><rect x="625" y="184.5" width="317" height="5" fill="url(#o44)"/><rect x="625" y="188.5" width="322" height="5" fill="url(#o45)"/><rect x="626" y="192.5" width="327" height="5" fill="url(#o46)"/><rect x="627" y="196.5" width="331" height="5" fill="url(#o47)"/><rect x="628" y="200.5" width="335" height="5" fill="url(#o48)"/><rect x="629" y="204.5" width="340" height="5" fill="url(#o49)"/><rect x="630" y="208.5" width="344" height="5" fill="url(#o50)"/><rect x="631" y="212.5" width="347" height="5" fill="url(#o51)"/><rect x="632" y="216.5" width="346" height="5" fill="url(#o52)"/><rect x="633" y="220.5" width="345" height="5" fill="url(#o53)"/><rect x="635" y="224.5" width="343" height="5" fill="url(#o54)"/><rect x="636" y="228.5" width="342" height="5" fill="url(#o55)"/><rect x="637" y="232.5" width="335" height="5" fill="url(#o56)"/><rect x="639" y="236.5" width="322" height="5" fill="url(#o57)"/><rect x="640" y="240.5" width="310" height="5" fill="url(#o58)"/><rect x="641" y="244.5" width="297" height="5" fill="url(#o59)"/><rect x="642" y="248.5" width="285" height="5" fill="url(#o60)"/><rect x="643" y="252.5" width="273" height="5" fill="url(#o61)"/><rect x="645" y="256.5" width="259" height="5" fill="url(#o62)"/><rect x="647" y="260.5" width="246" height="5" fill="url(#o63)"/><rect x="649" y="264.5" width="232" height="5" fill="url(#o64)"/><rect x="651" y="268.5" width="219" height="5" fill="url(#o65)"/><rect x="652" y="272.5" width="207" height="5" fill="url(#o66)"/><rect x="654" y="276.5" width="193" height="5" fill="url(#o67)"/><rect x="656" y="280.5" width="180" height="5" fill="url(#o68)"/><rect x="658" y="284.5" width="167" height="5" fill="url(#o69)"/><rect x="660" y="288.5" width="153" height="5" fill="url(#o70)"/><rect x="662" y="292.5" width="140" height="5" fill="url(#o71)"/><rect x="665" y="296.5" width="126" height="5" fill="url(#o72)"/><rect x="667" y="300.5" width="112" height="5" fill="url(#o73)"/><rect x="670" y="304.5" width="98" height="5" fill="url(#o74)"/><rect x="673" y="308.5" width="83" height="5" fill="url(#o75)"/><rect x="676" y="312.5" width="69" height="5" fill="url(#o76)"/><rect x="680" y="316.5" width="54" height="5" fill="url(#o77)"/><rect x="686" y="320.5" width="36" height="5" fill="url(#o78)"/><rect x="693" y="324.5" width="18" height="5" fill="url(#o79)"/></g></g><g clip-path="url(#trc)"><g filter="url(#bl)"><rect x="754" y="93.5" width="22" height="5" fill="url(#i0)"/><rect x="752" y="97.5" width="31" height="5" fill="url(#i1)"/><rect x="751" y="101.5" width="38" height="5" fill="url(#i2)"/><rect x="749" y="105.5" width="47" height="5" fill="url(#i3)"/><rect x="748" y="109.5" width="54" height="5" fill="url(#i4)"/><rect x="747" y="113.5" width="62" height="5" fill="url(#i5)"/><rect x="745" y="117.5" width="71" height="5" fill="url(#i6)"/><rect x="744" y="121.5" width="78" height="5" fill="url(#i7)"/><rect x="742" y="125.5" width="87" height="5" fill="url(#i8)"/><rect x="741" y="129.5" width="94" height="5" fill="url(#i9)"/><rect x="739" y="133.5" width="103" height="5" fill="url(#i10)"/><rect x="738" y="137.5" width="111" height="5" fill="url(#i11)"/><rect x="736" y="141.5" width="119" height="5" fill="url(#i12)"/><rect x="735" y="145.5" width="127" height="5" fill="url(#i13)"/><rect x="733" y="149.5" width="136" height="5" fill="url(#i14)"/><rect x="732" y="153.5" width="143" height="5" fill="url(#i15)"/><rect x="730" y="157.5" width="152" height="5" fill="url(#i16)"/><rect x="729" y="161.5" width="159" height="5" fill="url(#i17)"/><rect x="727" y="165.5" width="168" height="5" fill="url(#i18)"/><rect x="726" y="169.5" width="176" height="5" fill="url(#i19)"/><rect x="725" y="173.5" width="183" height="5" fill="url(#i20)"/><rect x="723" y="177.5" width="192" height="5" fill="url(#i21)"/><rect x="722" y="181.5" width="199" height="5" fill="url(#i22)"/><rect x="720" y="185.5" width="208" height="5" fill="url(#i23)"/><rect x="719" y="189.5" width="214" height="5" fill="url(#i24)"/><rect x="717" y="193.5" width="216" height="5" fill="url(#i25)"/><rect x="716" y="197.5" width="217" height="5" fill="url(#i26)"/><rect x="714" y="201.5" width="219" height="5" fill="url(#i27)"/><rect x="713" y="205.5" width="220" height="5" fill="url(#i28)"/><rect x="711" y="209.5" width="217" height="5" fill="url(#i29)"/><rect x="710" y="213.5" width="209" height="5" fill="url(#i30)"/><rect x="708" y="217.5" width="201" height="5" fill="url(#i31)"/><rect x="707" y="221.5" width="193" height="5" fill="url(#i32)"/><rect x="705" y="225.5" width="185" height="5" fill="url(#i33)"/><rect x="704" y="229.5" width="176" height="5" fill="url(#i34)"/><rect x="702" y="233.5" width="169" height="5" fill="url(#i35)"/><rect x="701" y="237.5" width="160" height="5" fill="url(#i36)"/><rect x="700" y="241.5" width="152" height="5" fill="url(#i37)"/><rect x="698" y="245.5" width="144" height="5" fill="url(#i38)"/><rect x="697" y="249.5" width="136" height="5" fill="url(#i39)"/><rect x="695" y="253.5" width="128" height="5" fill="url(#i40)"/><rect x="694" y="257.5" width="120" height="5" fill="url(#i41)"/><rect x="692" y="261.5" width="112" height="5" fill="url(#i42)"/><rect x="691" y="265.5" width="104" height="5" fill="url(#i43)"/><rect x="689" y="269.5" width="96" height="5" fill="url(#i44)"/><rect x="688" y="273.5" width="87" height="5" fill="url(#i45)"/><rect x="686" y="277.5" width="80" height="5" fill="url(#i46)"/><rect x="685" y="281.5" width="71" height="5" fill="url(#i47)"/><rect x="683" y="285.5" width="64" height="5" fill="url(#i48)"/><rect x="683" y="289.5" width="54" height="5" fill="url(#i49)"/><rect x="683" y="293.5" width="45" height="5" fill="url(#i50)"/><rect x="683" y="297.5" width="35" height="5" fill="url(#i51)"/><rect x="683" y="301.5" width="26" height="5" fill="url(#i52)"/><rect x="683" y="305.5" width="16" height="5" fill="url(#i53)"/></g></g><circle cx="938.1" cy="205.0" r="2.6" fill="#b00010" stroke="#701010" stroke-width="1"/><circle cx="757.9" cy="82.3" r="2.8" fill="#20a020" stroke="#2a4a2a" stroke-width="1"/><circle cx="693.4" cy="300.1" r="2.6" fill="#2000c0" stroke="#202060" stroke-width="1"/><circle cx="718.4" cy="215.4" r="2.6" fill="#18a898" stroke="#2a5a50" stroke-width="1"/><circle cx="760.7" cy="274.1" r="2.6" fill="#a8108a" stroke="#5a2a4a" stroke-width="1"/><circle cx="815.0" cy="120.7" r="2.8" fill="#a89a20" stroke="#4a4410" stroke-width="1"/><rect x="920.9" y="195.7" width="9.2" height="9.2" fill="none" stroke="#e4e4e4" stroke-width="1.1"/><rect x="758.7" y="98.0" width="9.2" height="9.2" fill="none" stroke="#e4e4e4" stroke-width="1.1"/><rect x="687.1" y="293.5" width="9.2" height="9.2" fill="none" stroke="#e4e4e4" stroke-width="1.1"/><rect x="722.9" y="196.1" width="9.2" height="9.2" fill="none" stroke="#e4e4e4" stroke-width="1.1"/><rect x="768.7" y="259.5" width="9.2" height="9.2" fill="none" stroke="#e4e4e4" stroke-width="1.1"/><rect x="815.5" y="132.4" width="9.2" height="9.2" fill="none" stroke="#e4e4e4" stroke-width="1.1"/><circle cx="759.2" cy="209.8" r="3.0" fill="#e8e8e8" stroke="#444" stroke-width="1.0"/><circle cx="758.3" cy="210.8" r="3.0" fill="#fafafa" stroke="#444" stroke-width="1.0"/><rect x="764.8" y="196.1" width="9.2" height="9.2" fill="none" stroke="#2a2a2a" stroke-width="1.5"/><path d="M620.2,319.8 V15.2 H1020.0 V319.8" fill="none" stroke="#9c9c9c" stroke-width="1.2"/><line x1="620.20" y1="319.80" x2="1020.00" y2="319.80" stroke="#9c9c9c" stroke-width="1.2"/><text x="812.5" y="12.6" font-size="9" fill="#d0d0d0" text-anchor="middle" font-weight="normal">CIE 1931 xy</text><line x1="616.20" y1="319.80" x2="620.20" y2="319.80" stroke="#9c9c9c" stroke-width="1"/><text x="615.7" y="323.0" font-size="9" fill="#dcdcdc" text-anchor="end" font-weight="normal">0</text><line x1="620.20" y1="319.80" x2="620.20" y2="323.60" stroke="#9c9c9c" stroke-width="1"/><text x="620.2" y="333.6" font-size="9" fill="#dcdcdc" text-anchor="middle" font-weight="normal">0</text><line x1="616.20" y1="283.60" x2="620.20" y2="283.60" stroke="#9c9c9c" stroke-width="1"/><text x="615.7" y="286.8" font-size="9" fill="#dcdcdc" text-anchor="end" font-weight="normal">0,1</text><line x1="667.90" y1="319.80" x2="667.90" y2="323.60" stroke="#9c9c9c" stroke-width="1"/><text x="667.9" y="333.6" font-size="9" fill="#dcdcdc" text-anchor="middle" font-weight="normal">0,1</text><line x1="616.20" y1="247.40" x2="620.20" y2="247.40" stroke="#9c9c9c" stroke-width="1"/><text x="615.7" y="250.6" font-size="9" fill="#dcdcdc" text-anchor="end" font-weight="normal">0,2</text><line x1="715.60" y1="319.80" x2="715.60" y2="323.60" stroke="#9c9c9c" stroke-width="1"/><text x="715.6" y="333.6" font-size="9" fill="#dcdcdc" text-anchor="middle" font-weight="normal">0,2</text><line x1="616.20" y1="211.20" x2="620.20" y2="211.20" stroke="#9c9c9c" stroke-width="1"/><text x="615.7" y="214.4" font-size="9" fill="#dcdcdc" text-anchor="end" font-weight="normal">0,3</text><line x1="763.30" y1="319.80" x2="763.30" y2="323.60" stroke="#9c9c9c" stroke-width="1"/><text x="763.3" y="333.6" font-size="9" fill="#dcdcdc" text-anchor="middle" font-weight="normal">0,3</text><line x1="616.20" y1="175.00" x2="620.20" y2="175.00" stroke="#9c9c9c" stroke-width="1"/><text x="615.7" y="178.2" font-size="9" fill="#dcdcdc" text-anchor="end" font-weight="normal">0,4</text><line x1="811.00" y1="319.80" x2="811.00" y2="323.60" stroke="#9c9c9c" stroke-width="1"/><text x="811.0" y="333.6" font-size="9" fill="#dcdcdc" text-anchor="middle" font-weight="normal">0,4</text><line x1="616.20" y1="138.80" x2="620.20" y2="138.80" stroke="#9c9c9c" stroke-width="1"/><text x="615.7" y="142.0" font-size="9" fill="#dcdcdc" text-anchor="end" font-weight="normal">0,5</text><line x1="858.70" y1="319.80" x2="858.70" y2="323.60" stroke="#9c9c9c" stroke-width="1"/><text x="858.7" y="333.6" font-size="9" fill="#dcdcdc" text-anchor="middle" font-weight="normal">0,5</text><line x1="616.20" y1="102.60" x2="620.20" y2="102.60" stroke="#9c9c9c" stroke-width="1"/><text x="615.7" y="105.8" font-size="9" fill="#dcdcdc" text-anchor="end" font-weight="normal">0,6</text><line x1="906.40" y1="319.80" x2="906.40" y2="323.60" stroke="#9c9c9c" stroke-width="1"/><text x="906.4" y="333.6" font-size="9" fill="#dcdcdc" text-anchor="middle" font-weight="normal">0,6</text><line x1="616.20" y1="66.40" x2="620.20" y2="66.40" stroke="#9c9c9c" stroke-width="1"/><text x="615.7" y="69.6" font-size="9" fill="#dcdcdc" text-anchor="end" font-weight="normal">0,7</text><line x1="954.10" y1="319.80" x2="954.10" y2="323.60" stroke="#9c9c9c" stroke-width="1"/><text x="954.1" y="333.6" font-size="9" fill="#dcdcdc" text-anchor="middle" font-weight="normal">0,7</text><line x1="616.20" y1="30.20" x2="620.20" y2="30.20" stroke="#9c9c9c" stroke-width="1"/><text x="615.7" y="33.4" font-size="9" fill="#dcdcdc" text-anchor="end" font-weight="normal">0,8</text><line x1="1001.80" y1="319.80" x2="1001.80" y2="323.60" stroke="#9c9c9c" stroke-width="1"/><text x="1001.8" y="333.6" font-size="9" fill="#dcdcdc" text-anchor="middle" font-weight="normal">0,8</text><text x="812.5" y="12.6" font-size="9" fill="#e6e6e6" text-anchor="start" font-weight="normal"></text><rect x="879.0" y="16.599999999999998" width="140.49999999999991" height="120.1" fill="#1a1a1a"/><defs><linearGradient id="n0" gradientUnits="userSpaceOnUse" x1="873.7" y1="0" x2="1024.8" y2="0"><stop offset="0" stop-color="#46ffbb"/><stop offset="0.062" stop-color="#55ffba"/><stop offset="0.125" stop-color="#63ffb9"/><stop offset="0.188" stop-color="#72ffb8"/><stop offset="0.25" stop-color="#80ffb7"/><stop offset="0.312" stop-color="#8effb6"/><stop offset="0.375" stop-color="#9dffb5"/><stop offset="0.438" stop-color="#abffb4"/><stop offset="0.5" stop-color="#baffb3"/><stop offset="0.562" stop-color="#c9ffb2"/><stop offset="0.625" stop-color="#d8ffb0"/><stop offset="0.688" stop-color="#e7ffaf"/><stop offset="0.75" stop-color="#f7ffae"/><stop offset="0.812" stop-color="#fff8a8"/><stop offset="0.875" stop-color="#ffea9d"/><stop offset="0.938" stop-color="#ffdd93"/><stop offset="1" stop-color="#ffd18a"/></linearGradient><linearGradient id="n1" gradientUnits="userSpaceOnUse" x1="873.7" y1="0" x2="1024.8" y2="0"><stop offset="0" stop-color="#49ffc0"/><stop offset="0.062" stop-color="#58ffbf"/><stop offset="0.125" stop-color="#67ffbe"/><stop offset="0.188" stop-color="#75ffbd"/><stop offset="0.25" stop-color="#84ffbc"/><stop offset="0.312" stop-color="#93ffbb"/><stop offset="0.375" stop-color="#a1ffba"/><stop offset="0.438" stop-color="#b0ffb9"/><stop offset="0.5" stop-color="#bfffb8"/><stop offset="0.562" stop-color="#ceffb7"/><stop offset="0.625" stop-color="#ddffb6"/><stop offset="0.688" stop-color="#edffb4"/><stop offset="0.75" stop-color="#fcffb3"/><stop offset="0.812" stop-color="#fff2a9"/><stop offset="0.875" stop-color="#ffe49e"/><stop offset="0.938" stop-color="#ffd894"/><stop offset="1" stop-color="#ffcc8b"/></linearGradient><linearGradient id="n2" gradientUnits="userSpaceOnUse" x1="873.7" y1="0" x2="1024.8" y2="0"><stop offset="0" stop-color="#4dffc5"/><stop offset="0.062" stop-color="#5cffc4"/><stop offset="0.125" stop-color="#6affc3"/><stop offset="0.188" stop-color="#79ffc2"/><stop offset="0.25" stop-color="#88ffc1"/><stop offset="0.312" stop-color="#97ffc0"/><stop offset="0.375" stop-color="#a6ffbf"/><stop offset="0.438" stop-color="#b5ffbe"/><stop offset="0.5" stop-color="#c4ffbd"/><stop offset="0.562" stop-color="#d3ffbc"/><stop offset="0.625" stop-color="#e2ffbb"/><stop offset="0.688" stop-color="#f2ffba"/><stop offset="0.75" stop-color="#fffcb6"/><stop offset="0.812" stop-color="#ffedaa"/><stop offset="0.875" stop-color="#ffdf9f"/><stop offset="0.938" stop-color="#ffd396"/><stop offset="1" stop-color="#ffc88d"/></linearGradient><linearGradient id="n3" gradientUnits="userSpaceOnUse" x1="873.7" y1="0" x2="1024.8" y2="0"><stop offset="0" stop-color="#50ffc9"/><stop offset="0.062" stop-color="#5fffc9"/><stop offset="0.125" stop-color="#6effc8"/><stop offset="0.188" stop-color="#7dffc7"/><stop offset="0.25" stop-color="#8cffc6"/><stop offset="0.312" stop-color="#9bffc5"/><stop offset="0.375" stop-color="#aaffc4"/><stop offset="0.438" stop-color="#b9ffc4"/><stop offset="0.5" stop-color="#c9ffc3"/><stop offset="0.562" stop-color="#d8ffc2"/><stop offset="0.625" stop-color="#e8ffc1"/><stop offset="0.688" stop-color="#f8ffbf"/><stop offset="0.75" stop-color="#fff6b8"/><stop offset="0.812" stop-color="#ffe7ac"/><stop offset="0.875" stop-color="#ffdaa1"/><stop offset="0.938" stop-color="#ffce97"/><stop offset="1" stop-color="#ffc38e"/></linearGradient><linearGradient id="n4" gradientUnits="userSpaceOnUse" x1="873.7" y1="0" x2="1024.8" y2="0"><stop offset="0" stop-color="#54ffce"/><stop offset="0.062" stop-color="#63ffce"/><stop offset="0.125" stop-color="#72ffcd"/><stop offset="0.188" stop-color="#81ffcc"/><stop offset="0.25" stop-color="#90ffcb"/><stop offset="0.312" stop-color="#9fffcb"/><stop offset="0.375" stop-color="#afffca"/><stop offset="0.438" stop-color="#beffc9"/><stop offset="0.5" stop-color="#ceffc8"/><stop offset="0.562" stop-color="#deffc7"/><stop offset="0.625" stop-color="#eeffc6"/><stop offset="0.688" stop-color="#feffc5"/><stop offset="0.75" stop-color="#fff0b9"/><stop offset="0.812" stop-color="#ffe2ad"/><stop offset="0.875" stop-color="#ffd5a2"/><stop offset="0.938" stop-color="#ffc998"/><stop offset="1" stop-color="#ffbf8f"/></linearGradient><linearGradient id="n5" gradientUnits="userSpaceOnUse" x1="873.7" y1="0" x2="1024.8" y2="0"><stop offset="0" stop-color="#57ffd4"/><stop offset="0.062" stop-color="#67ffd3"/><stop offset="0.125" stop-color="#76ffd2"/><stop offset="0.188" stop-color="#85ffd2"/><stop offset="0.25" stop-color="#95ffd1"/><stop offset="0.312" stop-color="#a4ffd0"/><stop offset="0.375" stop-color="#b4ffcf"/><stop offset="0.438" stop-color="#c3ffcf"/><stop offset="0.5" stop-color="#d3ffce"/><stop offset="0.562" stop-color="#e3ffcd"/><stop offset="0.625" stop-color="#f4ffcc"/><stop offset="0.688" stop-color="#fffac7"/><stop offset="0.75" stop-color="#ffeaba"/><stop offset="0.812" stop-color="#ffddae"/><stop offset="0.875" stop-color="#ffd0a4"/><stop offset="0.938" stop-color="#ffc59a"/><stop offset="1" stop-color="#ffba91"/></linearGradient><linearGradient id="n6" gradientUnits="userSpaceOnUse" x1="873.7" y1="0" x2="1024.8" y2="0"><stop offset="0" stop-color="#5bffd9"/><stop offset="0.062" stop-color="#6affd8"/><stop offset="0.125" stop-color="#7affd8"/><stop offset="0.188" stop-color="#89ffd7"/><stop offset="0.25" stop-color="#99ffd6"/><stop offset="0.312" stop-color="#a9ffd6"/><stop offset="0.375" stop-color="#b8ffd5"/><stop offset="0.438" stop-color="#c8ffd5"/><stop offset="0.5" stop-color="#d9ffd4"/><stop offset="0.562" stop-color="#e9ffd3"/><stop offset="0.625" stop-color="#faffd2"/><stop offset="0.688" stop-color="#fff4c8"/><stop offset="0.75" stop-color="#ffe5bb"/><stop offset="0.812" stop-color="#ffd7b0"/><stop offset="0.875" stop-color="#ffcba5"/><stop offset="0.938" stop-color="#ffc09b"/><stop offset="1" stop-color="#ffb692"/></linearGradient><linearGradient id="n7" gradientUnits="userSpaceOnUse" x1="873.7" y1="0" x2="1024.8" y2="0"><stop offset="0" stop-color="#5fffde"/><stop offset="0.062" stop-color="#6effde"/><stop offset="0.125" stop-color="#7effdd"/><stop offset="0.188" stop-color="#8effdd"/><stop offset="0.25" stop-color="#9effdc"/><stop offset="0.312" stop-color="#aeffdc"/><stop offset="0.375" stop-color="#beffdb"/><stop offset="0.438" stop-color="#ceffdb"/><stop offset="0.5" stop-color="#deffda"/><stop offset="0.562" stop-color="#efffd9"/><stop offset="0.625" stop-color="#fffed8"/><stop offset="0.688" stop-color="#ffeec9"/><stop offset="0.75" stop-color="#ffdfbc"/><stop offset="0.812" stop-color="#ffd2b1"/><stop offset="0.875" stop-color="#ffc6a6"/><stop offset="0.938" stop-color="#ffbb9d"/><stop offset="1" stop-color="#ffb194"/></linearGradient><linearGradient id="n8" gradientUnits="userSpaceOnUse" x1="873.7" y1="0" x2="1024.8" y2="0"><stop offset="0" stop-color="#62ffe4"/><stop offset="0.062" stop-color="#72ffe3"/><stop offset="0.125" stop-color="#82ffe3"/><stop offset="0.188" stop-color="#92ffe3"/><stop offset="0.25" stop-color="#a2ffe2"/><stop offset="0.312" stop-color="#b2ffe2"/><stop offset="0.375" stop-color="#c3ffe1"/><stop offset="0.438" stop-color="#d3ffe1"/><stop offset="0.5" stop-color="#e4ffe0"/><stop offset="0.562" stop-color="#f5ffe0"/><stop offset="0.625" stop-color="#fff8d9"/><stop offset="0.688" stop-color="#ffe8ca"/><stop offset="0.75" stop-color="#ffdabe"/><stop offset="0.812" stop-color="#ffcdb2"/><stop offset="0.875" stop-color="#ffc1a7"/><stop offset="0.938" stop-color="#ffb79e"/><stop offset="1" stop-color="#ffad95"/></linearGradient><linearGradient id="n9" gradientUnits="userSpaceOnUse" x1="873.7" y1="0" x2="1024.8" y2="0"><stop offset="0" stop-color="#66ffea"/><stop offset="0.062" stop-color="#77ffe9"/><stop offset="0.125" stop-color="#87ffe9"/><stop offset="0.188" stop-color="#97ffe9"/><stop offset="0.25" stop-color="#a7ffe8"/><stop offset="0.312" stop-color="#b8ffe8"/><stop offset="0.375" stop-color="#c8ffe8"/><stop offset="0.438" stop-color="#d9ffe7"/><stop offset="0.5" stop-color="#eaffe7"/><stop offset="0.562" stop-color="#fcffe6"/><stop offset="0.625" stop-color="#fff1da"/><stop offset="0.688" stop-color="#ffe2cb"/><stop offset="0.75" stop-color="#ffd4bf"/><stop offset="0.812" stop-color="#ffc8b3"/><stop offset="0.875" stop-color="#ffbda9"/><stop offset="0.938" stop-color="#ffb29f"/><stop offset="1" stop-color="#ffa996"/></linearGradient><linearGradient id="n10" gradientUnits="userSpaceOnUse" x1="873.7" y1="0" x2="1024.8" y2="0"><stop offset="0" stop-color="#6affef"/><stop offset="0.062" stop-color="#7bffef"/><stop offset="0.125" stop-color="#8bffef"/><stop offset="0.188" stop-color="#9cffef"/><stop offset="0.25" stop-color="#acffef"/><stop offset="0.312" stop-color="#bdffee"/><stop offset="0.375" stop-color="#ceffee"/><stop offset="0.438" stop-color="#dfffee"/><stop offset="0.5" stop-color="#f0ffed"/><stop offset="0.562" stop-color="#fffcea"/><stop offset="0.625" stop-color="#ffebda"/><stop offset="0.688" stop-color="#ffdccc"/><stop offset="0.75" stop-color="#ffcfc0"/><stop offset="0.812" stop-color="#ffc3b4"/><stop offset="0.875" stop-color="#ffb8aa"/><stop offset="0.938" stop-color="#ffaea0"/><stop offset="1" stop-color="#ffa598"/></linearGradient><linearGradient id="n11" gradientUnits="userSpaceOnUse" x1="873.7" y1="0" x2="1024.8" y2="0"><stop offset="0" stop-color="#6ffff6"/><stop offset="0.062" stop-color="#7ffff5"/><stop offset="0.125" stop-color="#90fff5"/><stop offset="0.188" stop-color="#a0fff5"/><stop offset="0.25" stop-color="#b1fff5"/><stop offset="0.312" stop-color="#c2fff5"/><stop offset="0.375" stop-color="#d4fff5"/><stop offset="0.438" stop-color="#e5fff5"/><stop offset="0.5" stop-color="#f7fff4"/><stop offset="0.562" stop-color="#fff5eb"/><stop offset="0.625" stop-color="#ffe5db"/><stop offset="0.688" stop-color="#ffd7cd"/><stop offset="0.75" stop-color="#ffcac1"/><stop offset="0.812" stop-color="#ffbeb6"/><stop offset="0.875" stop-color="#ffb3ab"/><stop offset="0.938" stop-color="#ffaaa2"/><stop offset="1" stop-color="#ffa099"/></linearGradient><linearGradient id="n12" gradientUnits="userSpaceOnUse" x1="873.7" y1="0" x2="1024.8" y2="0"><stop offset="0" stop-color="#73fffc"/><stop offset="0.062" stop-color="#84fffc"/><stop offset="0.125" stop-color="#95fffc"/><stop offset="0.188" stop-color="#a6fffc"/><stop offset="0.25" stop-color="#b7fffc"/><stop offset="0.312" stop-color="#c8fffc"/><stop offset="0.375" stop-color="#dafffc"/><stop offset="0.438" stop-color="#ebfffc"/><stop offset="0.5" stop-color="#fefffc"/><stop offset="0.562" stop-color="#ffefec"/><stop offset="0.625" stop-color="#ffdfdc"/><stop offset="0.688" stop-color="#ffd1ce"/><stop offset="0.75" stop-color="#ffc5c2"/><stop offset="0.812" stop-color="#ffb9b7"/><stop offset="0.875" stop-color="#ffafac"/><stop offset="0.938" stop-color="#ffa5a3"/><stop offset="1" stop-color="#ff9c9a"/></linearGradient><linearGradient id="n13" gradientUnits="userSpaceOnUse" x1="873.7" y1="0" x2="1024.8" y2="0"><stop offset="0" stop-color="#76fcff"/><stop offset="0.062" stop-color="#87fcff"/><stop offset="0.125" stop-color="#97fcff"/><stop offset="0.188" stop-color="#a8fcff"/><stop offset="0.25" stop-color="#b9fbff"/><stop offset="0.312" stop-color="#cbfbff"/><stop offset="0.375" stop-color="#dcfbff"/><stop offset="0.438" stop-color="#eefbff"/><stop offset="0.5" stop-color="#fffafd"/><stop offset="0.562" stop-color="#ffe9ec"/><stop offset="0.625" stop-color="#ffd9dd"/><stop offset="0.688" stop-color="#ffcccf"/><stop offset="0.75" stop-color="#ffc0c3"/><stop offset="0.812" stop-color="#ffb4b8"/><stop offset="0.875" stop-color="#ffaaad"/><stop offset="0.938" stop-color="#ffa1a4"/><stop offset="1" stop-color="#ff989b"/></linearGradient><linearGradient id="n14" gradientUnits="userSpaceOnUse" x1="873.7" y1="0" x2="1024.8" y2="0"><stop offset="0" stop-color="#77f5ff"/><stop offset="0.062" stop-color="#88f5ff"/><stop offset="0.125" stop-color="#98f5ff"/><stop offset="0.188" stop-color="#a9f5ff"/><stop offset="0.25" stop-color="#baf5ff"/><stop offset="0.312" stop-color="#cbf4ff"/><stop offset="0.375" stop-color="#dcf4ff"/><stop offset="0.438" stop-color="#eef4ff"/><stop offset="0.5" stop-color="#fff3fe"/><stop offset="0.562" stop-color="#ffe2ed"/><stop offset="0.625" stop-color="#ffd4de"/><stop offset="0.688" stop-color="#ffc6d0"/><stop offset="0.75" stop-color="#ffbbc4"/><stop offset="0.812" stop-color="#ffb0b9"/><stop offset="0.875" stop-color="#ffa6af"/><stop offset="0.938" stop-color="#ff9da5"/><stop offset="1" stop-color="#ff949c"/></linearGradient><linearGradient id="n15" gradientUnits="userSpaceOnUse" x1="873.7" y1="0" x2="1024.8" y2="0"><stop offset="0" stop-color="#78efff"/><stop offset="0.062" stop-color="#89efff"/><stop offset="0.125" stop-color="#99efff"/><stop offset="0.188" stop-color="#aaeeff"/><stop offset="0.25" stop-color="#baeeff"/><stop offset="0.312" stop-color="#cbeeff"/><stop offset="0.375" stop-color="#dcedff"/><stop offset="0.438" stop-color="#eeedff"/><stop offset="0.5" stop-color="#ffecff"/><stop offset="0.562" stop-color="#ffdcee"/><stop offset="0.625" stop-color="#ffcedf"/><stop offset="0.688" stop-color="#ffc1d1"/><stop offset="0.75" stop-color="#ffb6c5"/><stop offset="0.812" stop-color="#ffabba"/><stop offset="0.875" stop-color="#ffa1b0"/><stop offset="0.938" stop-color="#ff98a6"/><stop offset="1" stop-color="#ff909e"/></linearGradient><linearGradient id="n16" gradientUnits="userSpaceOnUse" x1="873.7" y1="0" x2="1024.8" y2="0"><stop offset="0" stop-color="#7ae9ff"/><stop offset="0.062" stop-color="#8ae9ff"/><stop offset="0.125" stop-color="#9ae8ff"/><stop offset="0.188" stop-color="#aae8ff"/><stop offset="0.25" stop-color="#bbe7ff"/><stop offset="0.312" stop-color="#cbe7ff"/><stop offset="0.375" stop-color="#dce7ff"/><stop offset="0.438" stop-color="#ede6ff"/><stop offset="0.5" stop-color="#ffe6ff"/><stop offset="0.562" stop-color="#ffd6ee"/><stop offset="0.625" stop-color="#ffc8e0"/><stop offset="0.688" stop-color="#ffbcd2"/><stop offset="0.75" stop-color="#ffb1c6"/><stop offset="0.812" stop-color="#ffa6bb"/><stop offset="0.875" stop-color="#ff9db1"/><stop offset="0.938" stop-color="#ff94a7"/><stop offset="1" stop-color="#ff8c9f"/></linearGradient><linearGradient id="n17" gradientUnits="userSpaceOnUse" x1="873.7" y1="0" x2="1024.8" y2="0"><stop offset="0" stop-color="#7be3ff"/><stop offset="0.062" stop-color="#8be3ff"/><stop offset="0.125" stop-color="#9be2ff"/><stop offset="0.188" stop-color="#abe2ff"/><stop offset="0.25" stop-color="#bbe1ff"/><stop offset="0.312" stop-color="#cce1ff"/><stop offset="0.375" stop-color="#dce0ff"/><stop offset="0.438" stop-color="#eddfff"/><stop offset="0.5" stop-color="#fedfff"/><stop offset="0.562" stop-color="#ffd0ef"/><stop offset="0.625" stop-color="#ffc3e0"/><stop offset="0.688" stop-color="#ffb7d3"/><stop offset="0.75" stop-color="#ffacc7"/><stop offset="0.812" stop-color="#ffa2bc"/><stop offset="0.875" stop-color="#ff98b2"/><stop offset="0.938" stop-color="#ff90a9"/><stop offset="1" stop-color="#ff88a0"/></linearGradient><linearGradient id="n18" gradientUnits="userSpaceOnUse" x1="873.7" y1="0" x2="1024.8" y2="0"><stop offset="0" stop-color="#7cddff"/><stop offset="0.062" stop-color="#8cddff"/><stop offset="0.125" stop-color="#9cdcff"/><stop offset="0.188" stop-color="#acdbff"/><stop offset="0.25" stop-color="#bcdbff"/><stop offset="0.312" stop-color="#ccdaff"/><stop offset="0.375" stop-color="#dcdaff"/><stop offset="0.438" stop-color="#edd9ff"/><stop offset="0.5" stop-color="#fed8ff"/><stop offset="0.562" stop-color="#ffcaf0"/><stop offset="0.625" stop-color="#ffbde1"/><stop offset="0.688" stop-color="#ffb2d4"/><stop offset="0.75" stop-color="#ffa7c8"/><stop offset="0.812" stop-color="#ff9dbd"/><stop offset="0.875" stop-color="#ff94b3"/><stop offset="0.938" stop-color="#ff8caa"/><stop offset="1" stop-color="#ff84a1"/></linearGradient><linearGradient id="n19" gradientUnits="userSpaceOnUse" x1="873.7" y1="0" x2="1024.8" y2="0"><stop offset="0" stop-color="#7dd7ff"/><stop offset="0.062" stop-color="#8dd7ff"/><stop offset="0.125" stop-color="#9dd6ff"/><stop offset="0.188" stop-color="#acd5ff"/><stop offset="0.25" stop-color="#bcd5ff"/><stop offset="0.312" stop-color="#ccd4ff"/><stop offset="0.375" stop-color="#dcd3ff"/><stop offset="0.438" stop-color="#edd2ff"/><stop offset="0.5" stop-color="#fdd2ff"/><stop offset="0.562" stop-color="#ffc5f0"/><stop offset="0.625" stop-color="#ffb8e2"/><stop offset="0.688" stop-color="#ffadd5"/><stop offset="0.75" stop-color="#ffa2c9"/><stop offset="0.812" stop-color="#ff99be"/><stop offset="0.875" stop-color="#ff90b4"/><stop offset="0.938" stop-color="#ff88ab"/><stop offset="1" stop-color="#ff80a2"/></linearGradient><linearGradient id="n20" gradientUnits="userSpaceOnUse" x1="873.7" y1="0" x2="1024.8" y2="0"><stop offset="0" stop-color="#7fd2ff"/><stop offset="0.062" stop-color="#8ed1ff"/><stop offset="0.125" stop-color="#9dd0ff"/><stop offset="0.188" stop-color="#adcfff"/><stop offset="0.25" stop-color="#bccfff"/><stop offset="0.312" stop-color="#ccceff"/><stop offset="0.375" stop-color="#dccdff"/><stop offset="0.438" stop-color="#ecccff"/><stop offset="0.5" stop-color="#fdcbff"/><stop offset="0.562" stop-color="#ffbff1"/><stop offset="0.625" stop-color="#ffb3e3"/><stop offset="0.688" stop-color="#ffa8d6"/><stop offset="0.75" stop-color="#ff9dca"/><stop offset="0.812" stop-color="#ff94bf"/><stop offset="0.875" stop-color="#ff8cb5"/><stop offset="0.938" stop-color="#ff84ac"/><stop offset="1" stop-color="#ff7ca3"/></linearGradient><linearGradient id="n21" gradientUnits="userSpaceOnUse" x1="873.7" y1="0" x2="1024.8" y2="0"><stop offset="0" stop-color="#80ccff"/><stop offset="0.062" stop-color="#8fcbff"/><stop offset="0.125" stop-color="#9ecbff"/><stop offset="0.188" stop-color="#adcaff"/><stop offset="0.25" stop-color="#bdc9ff"/><stop offset="0.312" stop-color="#ccc8ff"/><stop offset="0.375" stop-color="#dcc7ff"/><stop offset="0.438" stop-color="#ecc6ff"/><stop offset="0.5" stop-color="#fdc5ff"/><stop offset="0.562" stop-color="#ffb9f2"/><stop offset="0.625" stop-color="#ffade3"/><stop offset="0.688" stop-color="#ffa3d6"/><stop offset="0.75" stop-color="#ff99cb"/><stop offset="0.812" stop-color="#ff90c0"/><stop offset="0.875" stop-color="#ff87b6"/><stop offset="0.938" stop-color="#ff80ad"/><stop offset="1" stop-color="#ff78a4"/></linearGradient><linearGradient id="n22" gradientUnits="userSpaceOnUse" x1="873.7" y1="0" x2="1024.8" y2="0"><stop offset="0" stop-color="#81c7ff"/><stop offset="0.062" stop-color="#90c6ff"/><stop offset="0.125" stop-color="#9fc5ff"/><stop offset="0.188" stop-color="#aec4ff"/><stop offset="0.25" stop-color="#bdc3ff"/><stop offset="0.312" stop-color="#cdc2ff"/><stop offset="0.375" stop-color="#dcc1ff"/><stop offset="0.438" stop-color="#ecc0ff"/><stop offset="0.5" stop-color="#fcbfff"/><stop offset="0.562" stop-color="#ffb4f2"/><stop offset="0.625" stop-color="#ffa8e4"/><stop offset="0.688" stop-color="#ff9ed7"/><stop offset="0.75" stop-color="#ff94cb"/><stop offset="0.812" stop-color="#ff8bc1"/><stop offset="0.875" stop-color="#ff83b7"/><stop offset="0.938" stop-color="#ff7cae"/><stop offset="1" stop-color="#ff75a5"/></linearGradient><linearGradient id="n23" gradientUnits="userSpaceOnUse" x1="873.7" y1="0" x2="1024.8" y2="0"><stop offset="0" stop-color="#82c1ff"/><stop offset="0.062" stop-color="#91c0ff"/><stop offset="0.125" stop-color="#a0bfff"/><stop offset="0.188" stop-color="#aebeff"/><stop offset="0.25" stop-color="#bebdff"/><stop offset="0.312" stop-color="#cdbcff"/><stop offset="0.375" stop-color="#dcbbff"/><stop offset="0.438" stop-color="#ecbaff"/><stop offset="0.5" stop-color="#fcb8ff"/><stop offset="0.562" stop-color="#ffaef3"/><stop offset="0.625" stop-color="#ffa3e5"/><stop offset="0.688" stop-color="#ff99d8"/><stop offset="0.75" stop-color="#ff8fcc"/><stop offset="0.812" stop-color="#ff87c2"/><stop offset="0.875" stop-color="#ff7fb8"/><stop offset="0.938" stop-color="#ff78af"/><stop offset="1" stop-color="#ff71a6"/></linearGradient><linearGradient id="n24" gradientUnits="userSpaceOnUse" x1="873.7" y1="0" x2="1024.8" y2="0"><stop offset="0" stop-color="#83bcff"/><stop offset="0.062" stop-color="#92bbff"/><stop offset="0.125" stop-color="#a0baff"/><stop offset="0.188" stop-color="#afb9ff"/><stop offset="0.25" stop-color="#beb8ff"/><stop offset="0.312" stop-color="#cdb6ff"/><stop offset="0.375" stop-color="#dcb5ff"/><stop offset="0.438" stop-color="#ecb4ff"/><stop offset="0.5" stop-color="#fbb2ff"/><stop offset="0.562" stop-color="#ffa9f3"/><stop offset="0.625" stop-color="#ff9ee5"/><stop offset="0.688" stop-color="#ff94d9"/><stop offset="0.75" stop-color="#ff8bcd"/><stop offset="0.812" stop-color="#ff83c3"/><stop offset="0.875" stop-color="#ff7bb9"/><stop offset="0.938" stop-color="#ff74b0"/><stop offset="1" stop-color="#ff6da7"/></linearGradient><linearGradient id="n25" gradientUnits="userSpaceOnUse" x1="873.7" y1="0" x2="1024.8" y2="0"><stop offset="0" stop-color="#84b7ff"/><stop offset="0.062" stop-color="#93b6ff"/><stop offset="0.125" stop-color="#a1b4ff"/><stop offset="0.188" stop-color="#b0b3ff"/><stop offset="0.25" stop-color="#beb2ff"/><stop offset="0.312" stop-color="#cdb1ff"/><stop offset="0.375" stop-color="#dcafff"/><stop offset="0.438" stop-color="#ebaeff"/><stop offset="0.5" stop-color="#fbadff"/><stop offset="0.562" stop-color="#ffa4f4"/><stop offset="0.625" stop-color="#ff99e6"/><stop offset="0.688" stop-color="#ff8fd9"/><stop offset="0.75" stop-color="#ff86ce"/><stop offset="0.812" stop-color="#ff7ec3"/><stop offset="0.875" stop-color="#ff77ba"/><stop offset="0.938" stop-color="#ff70b1"/><stop offset="1" stop-color="#ff69a8"/></linearGradient><linearGradient id="n26" gradientUnits="userSpaceOnUse" x1="873.7" y1="0" x2="1024.8" y2="0"><stop offset="0" stop-color="#85b2ff"/><stop offset="0.062" stop-color="#93b0ff"/><stop offset="0.125" stop-color="#a2afff"/><stop offset="0.188" stop-color="#b0aeff"/><stop offset="0.25" stop-color="#bfadff"/><stop offset="0.312" stop-color="#cdabff"/><stop offset="0.375" stop-color="#dcaaff"/><stop offset="0.438" stop-color="#eba8ff"/><stop offset="0.5" stop-color="#faa7ff"/><stop offset="0.562" stop-color="#ff9ef4"/><stop offset="0.625" stop-color="#ff94e7"/><stop offset="0.688" stop-color="#ff8bda"/><stop offset="0.75" stop-color="#ff82cf"/><stop offset="0.812" stop-color="#ff7ac4"/><stop offset="0.875" stop-color="#ff73bb"/><stop offset="0.938" stop-color="#ff6cb2"/><stop offset="1" stop-color="#ff65a9"/></linearGradient><clipPath id="insc"><rect x="881.7" y="19.2" width="135.1" height="114.9"/></clipPath><filter id="bl2" x="-5%" y="-5%" width="110%" height="110%"><feGaussianBlur stdDeviation="2"/></filter></defs><g clip-path="url(#insc)"><g filter="url(#bl2)"><rect x="873.7" y="10.7" width="151.1" height="6" fill="url(#n0)"/><rect x="873.7" y="15.7" width="151.1" height="6" fill="url(#n1)"/><rect x="873.7" y="20.7" width="151.1" height="6" fill="url(#n2)"/><rect x="873.7" y="25.7" width="151.1" height="6" fill="url(#n3)"/><rect x="873.7" y="30.7" width="151.1" height="6" fill="url(#n4)"/><rect x="873.7" y="35.7" width="151.1" height="6" fill="url(#n5)"/><rect x="873.7" y="40.7" width="151.1" height="6" fill="url(#n6)"/><rect x="873.7" y="45.7" width="151.1" height="6" fill="url(#n7)"/><rect x="873.7" y="50.7" width="151.1" height="6" fill="url(#n8)"/><rect x="873.7" y="55.7" width="151.1" height="6" fill="url(#n9)"/><rect x="873.7" y="60.7" width="151.1" height="6" fill="url(#n10)"/><rect x="873.7" y="65.7" width="151.1" height="6" fill="url(#n11)"/><rect x="873.7" y="70.7" width="151.1" height="6" fill="url(#n12)"/><rect x="873.7" y="75.7" width="151.1" height="6" fill="url(#n13)"/><rect x="873.7" y="80.7" width="151.1" height="6" fill="url(#n14)"/><rect x="873.7" y="85.7" width="151.1" height="6" fill="url(#n15)"/><rect x="873.7" y="90.7" width="151.1" height="6" fill="url(#n16)"/><rect x="873.7" y="95.7" width="151.1" height="6" fill="url(#n17)"/><rect x="873.7" y="100.7" width="151.1" height="6" fill="url(#n18)"/><rect x="873.7" y="105.7" width="151.1" height="6" fill="url(#n19)"/><rect x="873.7" y="110.7" width="151.1" height="6" fill="url(#n20)"/><rect x="873.7" y="115.7" width="151.1" height="6" fill="url(#n21)"/><rect x="873.7" y="120.7" width="151.1" height="6" fill="url(#n22)"/><rect x="873.7" y="125.7" width="151.1" height="6" fill="url(#n23)"/><rect x="873.7" y="130.7" width="151.1" height="6" fill="url(#n24)"/><rect x="873.7" y="135.7" width="151.1" height="6" fill="url(#n25)"/><rect x="873.7" y="140.7" width="151.1" height="6" fill="url(#n26)"/></g></g><rect x="943.7" y="71.4" width="9.2" height="9.2" fill="none" stroke="#1e1e1e" stroke-width="1.6"/><circle cx="909.1" cy="120.7" r="2.9" fill="#a8a8a8" stroke="#444" stroke-width="1.1"/><circle cx="904.4" cy="125.1" r="2.9" fill="#f8f8f8" stroke="#444" stroke-width="1.1"/><rect x="861.60" y="300.00" width="156.40" height="17.30" fill="#353535"/><text x="863.6" y="313.1" font-size="12.8" fill="#ececec" text-anchor="start" font-weight="normal" textLength="136.6" lengthAdjust="spacingAndGlyphs">Gamut Coverage:&#160; 99,8%</text><text x="4.6" y="378.8" font-size="19" fill="#ececec" text-anchor="start" font-weight="normal" textLength="135.4" lengthAdjust="spacingAndGlyphs">Current Reading</text><text x="4.6" y="404.6" font-size="15" fill="#ececec" text-anchor="start" font-weight="normal" textLength="63.4" lengthAdjust="spacingAndGlyphs">x: 0,2895</text><text x="4.6" y="429.6" font-size="15" fill="#ececec" text-anchor="start" font-weight="normal" textLength="64.0" lengthAdjust="spacingAndGlyphs">y: 0,2984</text><text x="4.6" y="454.6" font-size="15" fill="#ececec" text-anchor="start" font-weight="normal" textLength="68.8" lengthAdjust="spacingAndGlyphs">fL: 132,84</text><text x="4.6" y="479.6" font-size="15" fill="#ececec" text-anchor="start" font-weight="normal" textLength="98.6" lengthAdjust="spacingAndGlyphs">cd/m²: 455,15</text><rect x="214.00" y="366.40" width="157.00" height="112.00" fill="#232323"/><line x1="214.00" y1="394.40" x2="371.00" y2="394.40" stroke="#9c9c9c" stroke-width="1"/><line x1="214.00" y1="422.40" x2="371.00" y2="422.40" stroke="#9c9c9c" stroke-width="1"/><line x1="214.00" y1="450.40" x2="371.00" y2="450.40" stroke="#9c9c9c" stroke-width="1"/><rect x="230.50" y="422.40" width="41.00" height="13.00" fill="url(#rbr)" stroke="#111" stroke-width="1"/><rect x="315.50" y="375.20" width="40.20" height="47.20" fill="url(#rbb)" stroke="#111" stroke-width="1"/><line x1="271.50" y1="422.40" x2="315.50" y2="422.40" stroke="#050505" stroke-width="2"/><path d="M214.0,481.4 V366.4 H371.0 V481.4" fill="none" stroke="#9c9c9c" stroke-width="1.2"/><line x1="214.00" y1="478.40" x2="371.00" y2="478.40" stroke="#9c9c9c" stroke-width="1.2"/><line x1="209.50" y1="366.40" x2="214.00" y2="366.40" stroke="#9c9c9c" stroke-width="1"/><text x="210.0" y="369.8" font-size="9.5" fill="#dcdcdc" text-anchor="end" font-weight="normal">40</text><line x1="209.50" y1="394.40" x2="214.00" y2="394.40" stroke="#9c9c9c" stroke-width="1"/><text x="210.0" y="397.8" font-size="9.5" fill="#dcdcdc" text-anchor="end" font-weight="normal">20</text><line x1="209.50" y1="422.40" x2="214.00" y2="422.40" stroke="#9c9c9c" stroke-width="1"/><text x="210.0" y="425.8" font-size="9.5" fill="#dcdcdc" text-anchor="end" font-weight="normal">0</text><line x1="209.50" y1="450.40" x2="214.00" y2="450.40" stroke="#9c9c9c" stroke-width="1"/><text x="210.0" y="453.8" font-size="9.5" fill="#dcdcdc" text-anchor="end" font-weight="normal">-20</text><line x1="209.50" y1="478.40" x2="214.00" y2="478.40" stroke="#9c9c9c" stroke-width="1"/><text x="210.0" y="481.8" font-size="9.5" fill="#dcdcdc" text-anchor="end" font-weight="normal">-40</text><text x="284.5" y="362.0" font-size="8.6" fill="#d0d0d0" text-anchor="middle" font-weight="normal">RGB Balance</text><text x="292.6" y="487.0" font-size="9" fill="#d0d0d0" text-anchor="middle" font-weight="normal">100W</text><rect x="384.40" y="351.40" width="429.50" height="12.60" fill="#2a2a2a"/><rect x="384.40" y="364.00" width="429.50" height="11.80" fill="#131313"/><rect x="384.40" y="351.40" width="9.00" height="24.40" fill="#080808"/><rect x="384.40" y="375.80" width="429.50" height="23.30" fill="#454545"/><rect x="384.40" y="398.60" width="429.50" height="23.30" fill="#6d6d6d"/><rect x="384.40" y="421.40" width="429.50" height="23.30" fill="#424242"/><rect x="384.40" y="444.20" width="429.50" height="23.30" fill="#6b6b6b"/><rect x="384.40" y="467.00" width="429.50" height="22.80" fill="#424242"/><rect x="384.40" y="375.80" width="9.00" height="112.20" fill="url(#tstrip)"/><text transform="translate(441.3,368.5) scale(0.76,1)" font-size="12.8" fill="#eeeeee" font-weight="bold">White</text><text transform="translate(490.2,368.5) scale(0.76,1)" font-size="12.8" fill="#eeeeee" font-weight="bold">Red</text><text transform="translate(533.0,368.5) scale(0.76,1)" font-size="12.8" fill="#eeeeee" font-weight="bold">Green</text><text transform="translate(582.2,368.5) scale(0.76,1)" font-size="12.8" fill="#eeeeee" font-weight="bold">Blue</text><text transform="translate(625.8,368.5) scale(0.76,1)" font-size="12.8" fill="#eeeeee" font-weight="bold">Cyan</text><text transform="translate(674.7,368.5) scale(0.76,1)" font-size="12.8" fill="#eeeeee" font-weight="bold">Magenta</text><text transform="translate(718.7,368.5) scale(0.76,1)" font-size="12.8" fill="#eeeeee" font-weight="bold">Yellow</text><text transform="translate(767.6,368.5) scale(0.76,1)" font-size="12.8" fill="#eeeeee" font-weight="bold">100W</text><text transform="translate(395.2,392.1) scale(0.715,1)" font-size="14" fill="#ececec" font-weight="normal">x: CIE31</text><text transform="translate(441.3,392.1) scale(0.715,1)" font-size="14" fill="#ececec" font-weight="normal">0,2914</text><text transform="translate(490.2,392.1) scale(0.715,1)" font-size="14" fill="#ececec" font-weight="normal">0,6665</text><text transform="translate(533.0,392.1) scale(0.715,1)" font-size="14" fill="#ececec" font-weight="normal">0,2886</text><text transform="translate(582.2,392.1) scale(0.715,1)" font-size="14" fill="#ececec" font-weight="normal">0,1535</text><text transform="translate(625.8,392.1) scale(0.715,1)" font-size="14" fill="#ececec" font-weight="normal">0,2058</text><text transform="translate(674.7,392.1) scale(0.715,1)" font-size="14" fill="#ececec" font-weight="normal">0,2945</text><text transform="translate(718.7,392.1) scale(0.715,1)" font-size="14" fill="#ececec" font-weight="normal">0,4084</text><text transform="translate(767.6,392.1) scale(0.715,1)" font-size="14" fill="#ececec" font-weight="normal">0,2895</text><text transform="translate(395.2,414.9) scale(0.715,1)" font-size="14" fill="#ececec" font-weight="normal">y: CIE31</text><text transform="translate(441.3,414.9) scale(0.715,1)" font-size="14" fill="#ececec" font-weight="normal">0,3010</text><text transform="translate(490.2,414.9) scale(0.715,1)" font-size="14" fill="#ececec" font-weight="normal">0,3144</text><text transform="translate(533.0,414.9) scale(0.715,1)" font-size="14" fill="#ececec" font-weight="normal">0,6532</text><text transform="translate(582.2,414.9) scale(0.715,1)" font-size="14" fill="#ececec" font-weight="normal">0,0517</text><text transform="translate(625.8,414.9) scale(0.715,1)" font-size="14" fill="#ececec" font-weight="normal">0,2855</text><text transform="translate(674.7,414.9) scale(0.715,1)" font-size="14" fill="#ececec" font-weight="normal">0,1234</text><text transform="translate(718.7,414.9) scale(0.715,1)" font-size="14" fill="#ececec" font-weight="normal">0,5472</text><text transform="translate(767.6,414.9) scale(0.715,1)" font-size="14" fill="#ececec" font-weight="normal">0,2984</text><text transform="translate(395.2,437.7) scale(0.715,1)" font-size="14" fill="#ececec" font-weight="normal">Y</text><text transform="translate(441.3,437.7) scale(0.715,1)" font-size="14" fill="#ececec" font-weight="normal">264,0338</text><text transform="translate(490.2,437.7) scale(0.715,1)" font-size="14" fill="#ececec" font-weight="normal">54,2367</text><text transform="translate(533.0,437.7) scale(0.715,1)" font-size="14" fill="#ececec" font-weight="normal">204,7509</text><text transform="translate(582.2,437.7) scale(0.715,1)" font-size="14" fill="#ececec" font-weight="normal">23,0428</text><text transform="translate(625.8,437.7) scale(0.715,1)" font-size="14" fill="#ececec" font-weight="normal">217,1121</text><text transform="translate(674.7,437.7) scale(0.715,1)" font-size="14" fill="#ececec" font-weight="normal">72,1328</text><text transform="translate(718.7,437.7) scale(0.715,1)" font-size="14" fill="#ececec" font-weight="normal">251,2937</text><text transform="translate(767.6,437.7) scale(0.715,1)" font-size="14" fill="#ececec" font-weight="normal">455,1496</text><text transform="translate(395.2,460.5) scale(0.715,1)" font-size="14" fill="#ececec" font-weight="normal">Target Y</text><text transform="translate(441.3,460.5) scale(0.715,1)" font-size="14" fill="#ececec" font-weight="normal">264,0338</text><text transform="translate(490.2,460.5) scale(0.715,1)" font-size="14" fill="#ececec" font-weight="normal">56,1484</text><text transform="translate(533.0,460.5) scale(0.715,1)" font-size="14" fill="#ececec" font-weight="normal">188,8260</text><text transform="translate(582.2,460.5) scale(0.715,1)" font-size="14" fill="#ececec" font-weight="normal">19,0594</text><text transform="translate(625.8,460.5) scale(0.715,1)" font-size="14" fill="#ececec" font-weight="normal">207,8855</text><text transform="translate(674.7,460.5) scale(0.715,1)" font-size="14" fill="#ececec" font-weight="normal">75,2078</text><text transform="translate(718.7,460.5) scale(0.715,1)" font-size="14" fill="#ececec" font-weight="normal">244,9744</text><text transform="translate(767.6,460.5) scale(0.715,1)" font-size="14" fill="#ececec" font-weight="normal">455,1496</text><text transform="translate(395.2,483.3) scale(0.715,1)" font-size="14" fill="#ececec" font-weight="normal">&#916;E 2000</text><text transform="translate(441.3,483.3) scale(0.715,1)" font-size="14" fill="#ececec" font-weight="normal">10,1520</text><text transform="translate(490.2,483.3) scale(0.715,1)" font-size="14" fill="#ececec" font-weight="normal">2,1896</text><text transform="translate(533.0,483.3) scale(0.715,1)" font-size="14" fill="#ececec" font-weight="normal">4,2069</text><text transform="translate(582.2,483.3) scale(0.715,1)" font-size="14" fill="#ececec" font-weight="normal">5,0042</text><text transform="translate(625.8,483.3) scale(0.715,1)" font-size="14" fill="#ececec" font-weight="normal">9,7146</text><text transform="translate(674.7,483.3) scale(0.715,1)" font-size="14" fill="#ececec" font-weight="normal">4,4601</text><text transform="translate(718.7,483.3) scale(0.715,1)" font-size="14" fill="#ececec" font-weight="normal">5,7093</text><text transform="translate(767.6,483.3) scale(0.715,1)" font-size="14" fill="#ececec" font-weight="normal">12,4327</text>
</svg>
</body></html>
